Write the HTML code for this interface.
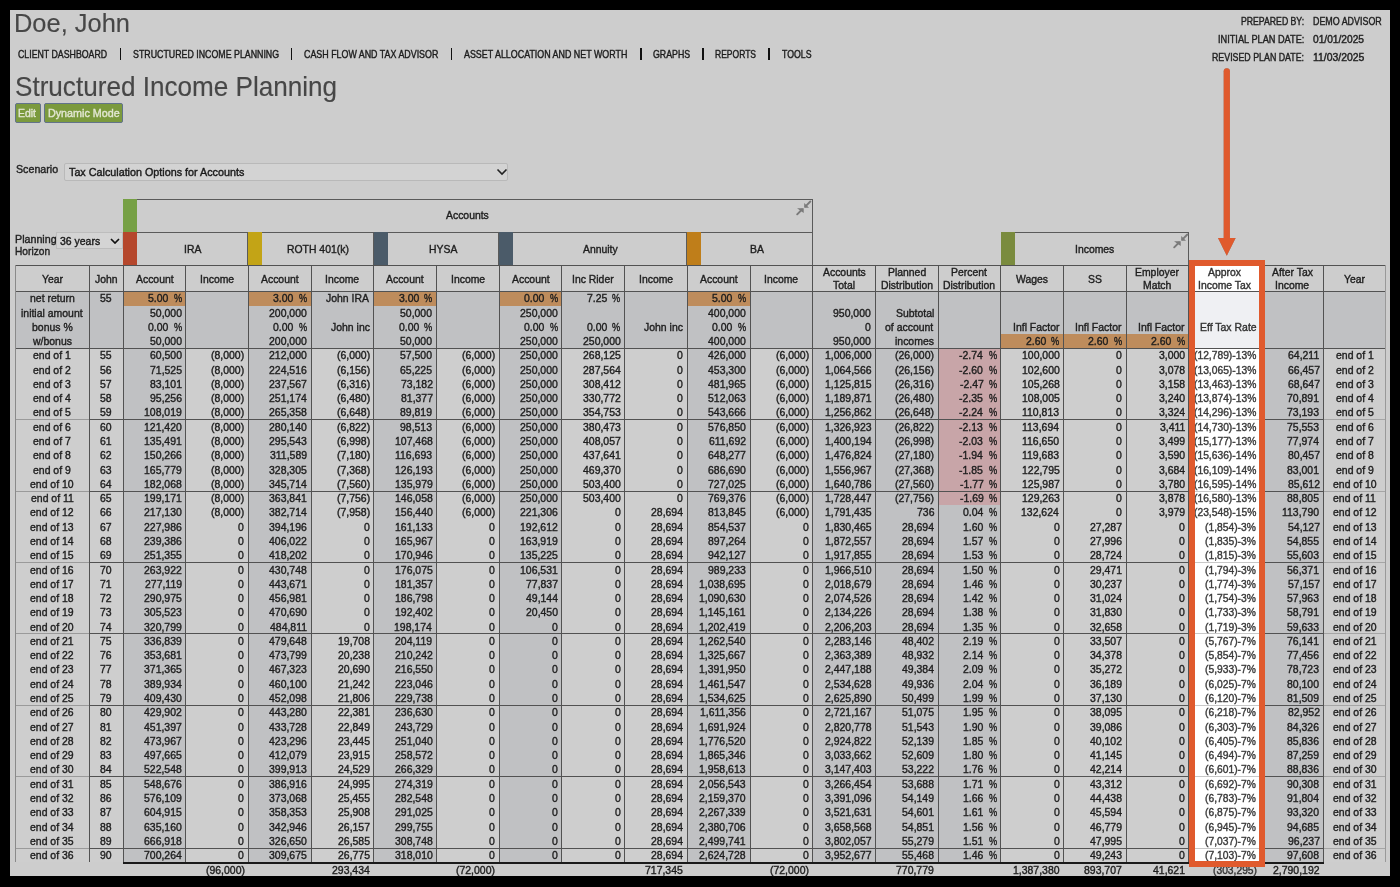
<!DOCTYPE html>
<html><head><meta charset="utf-8"><title>Structured Income Planning</title>
<style>
html,body{margin:0;padding:0;}
body{width:1400px;height:887px;background:#000;position:relative;overflow:hidden;font-family:"Liberation Sans", sans-serif;}
body div, body span, body svg{position:absolute;}
span{white-space:pre;}
</style></head><body>
<div style="left:10px;top:10px;width:1380px;height:866px;background:#cdcdcd;"></div>
<span style="left:14.47px;top:10.94px;font-size:25.94px;line-height:25.94px;color:#474747;transform:scaleX(0.9805);transform-origin:0 0;-webkit-text-stroke:0.15px currentColor;">Doe, John</span>
<span style="left:14.53px;top:74.28px;font-size:26.96px;line-height:26.96px;color:#474747;transform:scaleX(0.9685);transform-origin:0 0;-webkit-text-stroke:0.15px currentColor;">Structured Income Planning</span>
<span style="left:18.16px;top:50.39px;font-size:10.29px;line-height:10.29px;color:#1c1c1c;transform:scaleX(0.8544);transform-origin:0 0;-webkit-text-stroke:0.4px currentColor;">CLIENT DASHBOARD</span>
<span style="left:132.8px;top:50.39px;font-size:10.29px;line-height:10.29px;color:#1c1c1c;transform:scaleX(0.8583);transform-origin:0 0;-webkit-text-stroke:0.4px currentColor;">STRUCTURED INCOME PLANNING</span>
<span style="left:303.96px;top:50.39px;font-size:10.29px;line-height:10.29px;color:#1c1c1c;transform:scaleX(0.8636);transform-origin:0 0;-webkit-text-stroke:0.4px currentColor;">CASH FLOW AND TAX ADVISOR</span>
<span style="left:464.3px;top:50.39px;font-size:10.29px;line-height:10.29px;color:#1c1c1c;transform:scaleX(0.8648);transform-origin:0 0;-webkit-text-stroke:0.4px currentColor;">ASSET ALLOCATION AND NET WORTH</span>
<span style="left:653.26px;top:50.39px;font-size:10.29px;line-height:10.29px;color:#1c1c1c;transform:scaleX(0.8552);transform-origin:0 0;-webkit-text-stroke:0.4px currentColor;">GRAPHS</span>
<span style="left:715.02px;top:50.39px;font-size:10.29px;line-height:10.29px;color:#1c1c1c;transform:scaleX(0.8289);transform-origin:0 0;-webkit-text-stroke:0.4px currentColor;">REPORTS</span>
<span style="left:781.83px;top:50.39px;font-size:10.29px;line-height:10.29px;color:#1c1c1c;transform:scaleX(0.8498);transform-origin:0 0;-webkit-text-stroke:0.4px currentColor;">TOOLS</span>
<div style="left:119.9px;top:47.6px;width:1.6px;height:12.2px;background:#111;"></div>
<div style="left:290.8px;top:47.6px;width:1.6px;height:12.2px;background:#111;"></div>
<div style="left:450.6px;top:47.6px;width:1.6px;height:12.2px;background:#111;"></div>
<div style="left:640.1px;top:47.6px;width:1.6px;height:12.2px;background:#111;"></div>
<div style="left:702.1px;top:47.6px;width:1.6px;height:12.2px;background:#111;"></div>
<div style="left:768.3px;top:47.6px;width:1.6px;height:12.2px;background:#111;"></div>
<span style="left:1241.1px;top:16.84px;font-size:10px;line-height:10px;color:#222;transform:scaleX(0.8688);transform-origin:0 0;-webkit-text-stroke:0.4px currentColor;">PREPARED BY:</span>
<span style="left:1312.59px;top:16.84px;font-size:10px;line-height:10px;color:#222;transform:scaleX(0.8901);transform-origin:0 0;-webkit-text-stroke:0.4px currentColor;">DEMO ADVISOR</span>
<span style="left:1217.87px;top:34.73px;font-size:10px;line-height:10px;color:#222;transform:scaleX(0.9197);transform-origin:0 0;-webkit-text-stroke:0.4px currentColor;">INITIAL PLAN DATE:</span>
<span style="left:1312.89px;top:34.73px;font-size:10px;line-height:10px;color:#222;transform:scaleX(1.0193);transform-origin:0 0;-webkit-text-stroke:0.4px currentColor;">01/01/2025</span>
<span style="left:1212.19px;top:53.03px;font-size:10px;line-height:10px;color:#222;transform:scaleX(0.8825);transform-origin:0 0;-webkit-text-stroke:0.4px currentColor;">REVISED PLAN DATE:</span>
<span style="left:1312.52px;top:53.03px;font-size:10px;line-height:10px;color:#222;transform:scaleX(1.0426);transform-origin:0 0;-webkit-text-stroke:0.4px currentColor;">11/03/2025</span>
<div style="left:14.7px;top:102.5px;width:26.3px;height:20.8px;background:#7b9a3d;border:1px solid #62738a;border-radius:2px;box-sizing:border-box"></div>
<span style="left:18.16px;top:107.75px;font-size:11.16px;line-height:11.16px;color:#e2e6d2;transform:scaleX(0.9372);transform-origin:0 0;-webkit-text-stroke:0.4px currentColor;">Edit</span>
<div style="left:44.3px;top:102.5px;width:78.8px;height:20.8px;background:#7b9a3d;border:1px solid #62738a;border-radius:2px;box-sizing:border-box"></div>
<span style="left:48.14px;top:107.75px;font-size:11.16px;line-height:11.16px;color:#e2e6d2;transform:scaleX(0.9625);transform-origin:0 0;-webkit-text-stroke:0.4px currentColor;">Dynamic Mode</span>
<span style="left:16.02px;top:164.45px;font-size:11.16px;line-height:11.16px;color:#222;transform:scaleX(0.9565);transform-origin:0 0;-webkit-text-stroke:0.4px currentColor;">Scenario</span>
<div style="left:64.2px;top:163.2px;width:444.2px;height:17.5px;background:#d3d3d3;border:1px solid #b9b9b9;border-radius:2px;box-sizing:border-box"></div>
<span style="left:68.88px;top:167.18px;font-size:11.01px;line-height:11.01px;color:#1a1a1a;transform:scaleX(0.9784);transform-origin:0 0;-webkit-text-stroke:0.4px currentColor;">Tax Calculation Options for Accounts</span>
<svg style="left:496px;top:168px;width:12px;height:8px" viewBox="0 0 12 8"><path d="M1.5 1.5 L6 6 L10.5 1.5" fill="none" stroke="#222" stroke-width="1.6"/></svg>
<span style="left:14.54px;top:233.91px;font-size:11.45px;line-height:11.45px;color:#222;transform:scaleX(0.9352);transform-origin:0 0;-webkit-text-stroke:0.4px currentColor;">Planning</span>
<span style="left:14.59px;top:246.11px;font-size:11.45px;line-height:11.45px;color:#222;transform:scaleX(0.8893);transform-origin:0 0;-webkit-text-stroke:0.4px currentColor;">Horizon</span>
<div style="left:56.2px;top:232px;width:66.8px;height:17.4px;background:#d4d4d4;border:1px solid #bdbdbd;box-sizing:border-box"></div>
<span style="left:60.48px;top:235.93px;font-size:11.3px;line-height:11.3px;color:#1a1a1a;transform:scaleX(0.9270);transform-origin:0 0;-webkit-text-stroke:0.4px currentColor;">36 years</span>
<svg style="left:110px;top:238px;width:10px;height:6px" viewBox="0 0 10 6"><path d="M1 1 L5 5 L9 1" fill="none" stroke="#111" stroke-width="1.7"/></svg>
<div style="left:123px;top:198.5px;width:689.5px;height:33.8px;background:#cdcdcd;border:1px solid #5a5a5a;border-bottom:none;box-sizing:border-box"></div>
<div style="left:123px;top:198.5px;width:13.8px;height:33.8px;background:#76a045;"></div>
<span style="left:446.45px;top:210.12px;font-size:11.2px;line-height:11.2px;color:#1e1e1e;transform:scaleX(0.9300);transform-origin:0 0;-webkit-text-stroke:0.4px currentColor;">Accounts</span>
<div style="left:123px;top:232.3px;width:125.4px;height:33.1px;background:#cdcdcd;border:1px solid #5a5a5a;border-bottom:none;box-sizing:border-box"></div>
<div style="left:123px;top:232.3px;width:13.9px;height:33.1px;background:#b5472c;"></div>
<span style="left:183.51px;top:244.32px;font-size:11.2px;line-height:11.2px;color:#1e1e1e;transform:scaleX(0.9300);transform-origin:0 0;-webkit-text-stroke:0.4px currentColor;">IRA</span>
<div style="left:248.4px;top:232.3px;width:125.4px;height:33.1px;background:#cdcdcd;border:1px solid #5a5a5a;border-bottom:none;box-sizing:border-box"></div>
<div style="left:248.4px;top:232.3px;width:13.9px;height:33.1px;background:#c3a416;"></div>
<span style="left:287.01px;top:244.32px;font-size:11.2px;line-height:11.2px;color:#1e1e1e;transform:scaleX(0.9300);transform-origin:0 0;-webkit-text-stroke:0.4px currentColor;">ROTH 401(k)</span>
<div style="left:373.8px;top:232.3px;width:125.4px;height:33.1px;background:#cdcdcd;border:1px solid #5a5a5a;border-bottom:none;box-sizing:border-box"></div>
<div style="left:373.8px;top:232.3px;width:13.9px;height:33.1px;background:#4b5b69;"></div>
<span style="left:428.87px;top:244.32px;font-size:11.2px;line-height:11.2px;color:#1e1e1e;transform:scaleX(0.9300);transform-origin:0 0;-webkit-text-stroke:0.4px currentColor;">HYSA</span>
<div style="left:499.2px;top:232.3px;width:188.1px;height:33.1px;background:#cdcdcd;border:1px solid #5a5a5a;border-bottom:none;box-sizing:border-box"></div>
<div style="left:499.2px;top:232.3px;width:13.9px;height:33.1px;background:#4b5b69;"></div>
<span style="left:582.83px;top:244.32px;font-size:11.2px;line-height:11.2px;color:#1e1e1e;transform:scaleX(0.9300);transform-origin:0 0;-webkit-text-stroke:0.4px currentColor;">Annuity</span>
<div style="left:687.3px;top:232.3px;width:125.4px;height:33.1px;background:#cdcdcd;border:1px solid #5a5a5a;border-bottom:none;box-sizing:border-box"></div>
<div style="left:687.3px;top:232.3px;width:13.9px;height:33.1px;background:#bf7e1a;"></div>
<span style="left:749.61px;top:244.32px;font-size:11.2px;line-height:11.2px;color:#1e1e1e;transform:scaleX(0.9300);transform-origin:0 0;-webkit-text-stroke:0.4px currentColor;">BA</span>
<div style="left:1000.8px;top:232.3px;width:188.1px;height:33.1px;background:#cdcdcd;border:1px solid #5a5a5a;border-bottom:none;box-sizing:border-box"></div>
<div style="left:1000.8px;top:232.3px;width:13.9px;height:33.1px;background:#7a8b3e;"></div>
<span style="left:1074.88px;top:243.72px;font-size:11.2px;line-height:11.2px;color:#1e1e1e;transform:scaleX(0.9300);transform-origin:0 0;-webkit-text-stroke:0.4px currentColor;">Incomes</span>
<svg style="left:796px;top:200px;width:16px;height:16px" viewBox="0 0 16 16"><path d="M14.3 1.5 L9.5 6.3 M1.2 14.3 L6 9.5" stroke="#7a7a7a" stroke-width="1.9" stroke-linecap="round" fill="none"/><path d="M8.2 3 L13 7.7 L8.2 7.7 Z M1 8.2 L7.7 8.2 L7.7 13 Z" fill="#7a7a7a"/></svg>
<svg style="left:1172.5px;top:233px;width:16px;height:16px" viewBox="0 0 16 16"><path d="M14.3 1.5 L9.5 6.3 M1.2 14.3 L6 9.5" stroke="#7a7a7a" stroke-width="1.9" stroke-linecap="round" fill="none"/><path d="M8.2 3 L13 7.7 L8.2 7.7 Z M1 8.2 L7.7 8.2 L7.7 13 Z" fill="#7a7a7a"/></svg>
<div style="left:15.5px;top:265.4px;width:73.5px;height:26px;background:#cdcdcd;"></div>
<div style="left:15.5px;top:291.4px;width:73.5px;height:56.9px;background:#c0c1c3;"></div>
<div style="left:15.5px;top:348.3px;width:73.5px;height:514px;background:#cecece;"></div>
<div style="left:89px;top:265.4px;width:34px;height:26px;background:#cdcdcd;"></div>
<div style="left:89px;top:291.4px;width:34px;height:56.9px;background:#c0c1c3;"></div>
<div style="left:89px;top:348.3px;width:34px;height:514px;background:#cecece;"></div>
<div style="left:123px;top:265.4px;width:62.7px;height:26px;background:#cdcdcd;"></div>
<div style="left:123px;top:291.4px;width:62.7px;height:56.9px;background:#c0c1c3;"></div>
<div style="left:123px;top:348.3px;width:62.7px;height:514px;background:#c0c1c3;"></div>
<div style="left:185.7px;top:265.4px;width:62.7px;height:26px;background:#cdcdcd;"></div>
<div style="left:185.7px;top:291.4px;width:62.7px;height:56.9px;background:#c0c1c3;"></div>
<div style="left:185.7px;top:348.3px;width:62.7px;height:514px;background:#cecece;"></div>
<div style="left:248.4px;top:265.4px;width:62.7px;height:26px;background:#cdcdcd;"></div>
<div style="left:248.4px;top:291.4px;width:62.7px;height:56.9px;background:#c0c1c3;"></div>
<div style="left:248.4px;top:348.3px;width:62.7px;height:514px;background:#c0c1c3;"></div>
<div style="left:311.1px;top:265.4px;width:62.7px;height:26px;background:#cdcdcd;"></div>
<div style="left:311.1px;top:291.4px;width:62.7px;height:56.9px;background:#c0c1c3;"></div>
<div style="left:311.1px;top:348.3px;width:62.7px;height:514px;background:#cecece;"></div>
<div style="left:373.8px;top:265.4px;width:62.7px;height:26px;background:#cdcdcd;"></div>
<div style="left:373.8px;top:291.4px;width:62.7px;height:56.9px;background:#c0c1c3;"></div>
<div style="left:373.8px;top:348.3px;width:62.7px;height:514px;background:#c0c1c3;"></div>
<div style="left:436.5px;top:265.4px;width:62.7px;height:26px;background:#cdcdcd;"></div>
<div style="left:436.5px;top:291.4px;width:62.7px;height:56.9px;background:#c0c1c3;"></div>
<div style="left:436.5px;top:348.3px;width:62.7px;height:514px;background:#cecece;"></div>
<div style="left:499.2px;top:265.4px;width:62.7px;height:26px;background:#cdcdcd;"></div>
<div style="left:499.2px;top:291.4px;width:62.7px;height:56.9px;background:#c0c1c3;"></div>
<div style="left:499.2px;top:348.3px;width:62.7px;height:514px;background:#c0c1c3;"></div>
<div style="left:561.9px;top:265.4px;width:62.7px;height:26px;background:#cdcdcd;"></div>
<div style="left:561.9px;top:291.4px;width:62.7px;height:56.9px;background:#c0c1c3;"></div>
<div style="left:561.9px;top:348.3px;width:62.7px;height:514px;background:#cecece;"></div>
<div style="left:624.6px;top:265.4px;width:62.7px;height:26px;background:#cdcdcd;"></div>
<div style="left:624.6px;top:291.4px;width:62.7px;height:56.9px;background:#c0c1c3;"></div>
<div style="left:624.6px;top:348.3px;width:62.7px;height:514px;background:#cecece;"></div>
<div style="left:687.3px;top:265.4px;width:62.7px;height:26px;background:#cdcdcd;"></div>
<div style="left:687.3px;top:291.4px;width:62.7px;height:56.9px;background:#c0c1c3;"></div>
<div style="left:687.3px;top:348.3px;width:62.7px;height:514px;background:#c0c1c3;"></div>
<div style="left:750px;top:265.4px;width:62.7px;height:26px;background:#cdcdcd;"></div>
<div style="left:750px;top:291.4px;width:62.7px;height:56.9px;background:#c0c1c3;"></div>
<div style="left:750px;top:348.3px;width:62.7px;height:514px;background:#cecece;"></div>
<div style="left:812.7px;top:265.4px;width:62.7px;height:26px;background:#cdcdcd;"></div>
<div style="left:812.7px;top:291.4px;width:62.7px;height:56.9px;background:#c0c1c3;"></div>
<div style="left:812.7px;top:348.3px;width:62.7px;height:514px;background:#c0c1c3;"></div>
<div style="left:875.4px;top:265.4px;width:62.7px;height:26px;background:#cdcdcd;"></div>
<div style="left:875.4px;top:291.4px;width:62.7px;height:56.9px;background:#c0c1c3;"></div>
<div style="left:875.4px;top:348.3px;width:62.7px;height:514px;background:#c0c1c3;"></div>
<div style="left:938.1px;top:265.4px;width:62.7px;height:26px;background:#cdcdcd;"></div>
<div style="left:938.1px;top:291.4px;width:62.7px;height:56.9px;background:#c0c1c3;"></div>
<div style="left:938.1px;top:348.3px;width:62.7px;height:157.06px;background:#c8a5a8;"></div>
<div style="left:938.1px;top:505.36px;width:62.7px;height:356.94px;background:#c0c1c3;"></div>
<div style="left:1000.8px;top:265.4px;width:62.7px;height:26px;background:#cdcdcd;"></div>
<div style="left:1000.8px;top:291.4px;width:62.7px;height:56.9px;background:#c0c1c3;"></div>
<div style="left:1000.8px;top:348.3px;width:62.7px;height:514px;background:#cecece;"></div>
<div style="left:1063.5px;top:265.4px;width:62.7px;height:26px;background:#cdcdcd;"></div>
<div style="left:1063.5px;top:291.4px;width:62.7px;height:56.9px;background:#c0c1c3;"></div>
<div style="left:1063.5px;top:348.3px;width:62.7px;height:514px;background:#cecece;"></div>
<div style="left:1126.2px;top:265.4px;width:62.7px;height:26px;background:#cdcdcd;"></div>
<div style="left:1126.2px;top:291.4px;width:62.7px;height:56.9px;background:#c0c1c3;"></div>
<div style="left:1126.2px;top:348.3px;width:62.7px;height:514px;background:#cecece;"></div>
<div style="left:1188.9px;top:265.4px;width:72.1px;height:26px;background:#ffffff;"></div>
<div style="left:1188.9px;top:291.4px;width:72.1px;height:56.9px;background:#eff0f3;"></div>
<div style="left:1188.9px;top:348.3px;width:72.1px;height:514px;background:#ffffff;"></div>
<div style="left:1261px;top:265.4px;width:62.5px;height:26px;background:#cdcdcd;"></div>
<div style="left:1261px;top:291.4px;width:62.5px;height:56.9px;background:#c0c1c3;"></div>
<div style="left:1261px;top:348.3px;width:62.5px;height:514px;background:#c0c1c3;"></div>
<div style="left:1323.5px;top:265.4px;width:62.2px;height:26px;background:#cdcdcd;"></div>
<div style="left:1323.5px;top:291.4px;width:62.2px;height:56.9px;background:#c0c1c3;"></div>
<div style="left:1323.5px;top:348.3px;width:62.2px;height:514px;background:#cecece;"></div>
<div style="left:123px;top:292px;width:62.7px;height:13.62px;background:#be8c5c;"></div>
<div style="left:248.4px;top:292px;width:62.7px;height:13.62px;background:#be8c5c;"></div>
<div style="left:373.8px;top:292px;width:62.7px;height:13.62px;background:#be8c5c;"></div>
<div style="left:499.2px;top:292px;width:62.7px;height:13.62px;background:#be8c5c;"></div>
<div style="left:687.3px;top:292px;width:62.7px;height:13.62px;background:#be8c5c;"></div>
<div style="left:1000.8px;top:334.07px;width:62.7px;height:14.23px;background:#be8c5c;"></div>
<div style="left:1063.5px;top:334.07px;width:62.7px;height:14.23px;background:#be8c5c;"></div>
<div style="left:1126.2px;top:334.07px;width:62.7px;height:14.23px;background:#be8c5c;"></div>
<div style="left:15.5px;top:264.9px;width:1370.2px;height:1px;background:#525252;"></div>
<div style="left:15.5px;top:290.9px;width:1370.2px;height:1px;background:#525252;"></div>
<div style="left:15.5px;top:347.8px;width:1370.2px;height:1px;background:#525252;"></div>
<div style="left:15.5px;top:419.19px;width:73.5px;height:1px;background:#9a9a9a;"></div>
<div style="left:89px;top:419.19px;width:1099.9px;height:1px;background:#525252;"></div>
<div style="left:1188.9px;top:419.19px;width:72.1px;height:1px;background:#c8c8c8;"></div>
<div style="left:1261px;top:419.19px;width:62.5px;height:1px;background:#525252;"></div>
<div style="left:1323.5px;top:419.19px;width:62.2px;height:1px;background:#a5a5a5;"></div>
<div style="left:15.5px;top:490.58px;width:73.5px;height:1px;background:#9a9a9a;"></div>
<div style="left:89px;top:490.58px;width:1099.9px;height:1px;background:#525252;"></div>
<div style="left:1188.9px;top:490.58px;width:72.1px;height:1px;background:#c8c8c8;"></div>
<div style="left:1261px;top:490.58px;width:62.5px;height:1px;background:#525252;"></div>
<div style="left:1323.5px;top:490.58px;width:62.2px;height:1px;background:#a5a5a5;"></div>
<div style="left:15.5px;top:561.97px;width:73.5px;height:1px;background:#9a9a9a;"></div>
<div style="left:89px;top:561.97px;width:1099.9px;height:1px;background:#525252;"></div>
<div style="left:1188.9px;top:561.97px;width:72.1px;height:1px;background:#c8c8c8;"></div>
<div style="left:1261px;top:561.97px;width:62.5px;height:1px;background:#525252;"></div>
<div style="left:1323.5px;top:561.97px;width:62.2px;height:1px;background:#a5a5a5;"></div>
<div style="left:15.5px;top:633.36px;width:73.5px;height:1px;background:#9a9a9a;"></div>
<div style="left:89px;top:633.36px;width:1099.9px;height:1px;background:#525252;"></div>
<div style="left:1188.9px;top:633.36px;width:72.1px;height:1px;background:#c8c8c8;"></div>
<div style="left:1261px;top:633.36px;width:62.5px;height:1px;background:#525252;"></div>
<div style="left:1323.5px;top:633.36px;width:62.2px;height:1px;background:#a5a5a5;"></div>
<div style="left:15.5px;top:704.74px;width:73.5px;height:1px;background:#9a9a9a;"></div>
<div style="left:89px;top:704.74px;width:1099.9px;height:1px;background:#525252;"></div>
<div style="left:1188.9px;top:704.74px;width:72.1px;height:1px;background:#c8c8c8;"></div>
<div style="left:1261px;top:704.74px;width:62.5px;height:1px;background:#525252;"></div>
<div style="left:1323.5px;top:704.74px;width:62.2px;height:1px;background:#a5a5a5;"></div>
<div style="left:15.5px;top:776.13px;width:73.5px;height:1px;background:#9a9a9a;"></div>
<div style="left:89px;top:776.13px;width:1099.9px;height:1px;background:#525252;"></div>
<div style="left:1188.9px;top:776.13px;width:72.1px;height:1px;background:#c8c8c8;"></div>
<div style="left:1261px;top:776.13px;width:62.5px;height:1px;background:#525252;"></div>
<div style="left:1323.5px;top:776.13px;width:62.2px;height:1px;background:#a5a5a5;"></div>
<div style="left:15.5px;top:847.52px;width:73.5px;height:1px;background:#9a9a9a;"></div>
<div style="left:89px;top:847.52px;width:1099.9px;height:1px;background:#525252;"></div>
<div style="left:1188.9px;top:847.52px;width:72.1px;height:1px;background:#c8c8c8;"></div>
<div style="left:1261px;top:847.52px;width:62.5px;height:1px;background:#525252;"></div>
<div style="left:1323.5px;top:847.52px;width:62.2px;height:1px;background:#a5a5a5;"></div>
<div style="left:14.9px;top:265.4px;width:1.2px;height:596.9px;background:#8a8a8a;"></div>
<div style="left:88.5px;top:265.4px;width:1px;height:596.9px;background:#525252;"></div>
<div style="left:122.5px;top:265.4px;width:1px;height:596.9px;background:#525252;"></div>
<div style="left:185.2px;top:265.4px;width:1px;height:596.9px;background:#525252;"></div>
<div style="left:247.9px;top:265.4px;width:1px;height:596.9px;background:#525252;"></div>
<div style="left:310.6px;top:265.4px;width:1px;height:596.9px;background:#525252;"></div>
<div style="left:373.3px;top:265.4px;width:1px;height:596.9px;background:#525252;"></div>
<div style="left:436px;top:265.4px;width:1px;height:596.9px;background:#525252;"></div>
<div style="left:498.7px;top:265.4px;width:1px;height:596.9px;background:#525252;"></div>
<div style="left:561.4px;top:265.4px;width:1px;height:596.9px;background:#525252;"></div>
<div style="left:624.1px;top:265.4px;width:1px;height:596.9px;background:#525252;"></div>
<div style="left:686.8px;top:265.4px;width:1px;height:596.9px;background:#525252;"></div>
<div style="left:749.5px;top:265.4px;width:1px;height:596.9px;background:#525252;"></div>
<div style="left:812.2px;top:265.4px;width:1px;height:596.9px;background:#525252;"></div>
<div style="left:874.9px;top:265.4px;width:1px;height:596.9px;background:#525252;"></div>
<div style="left:937.6px;top:265.4px;width:1px;height:596.9px;background:#525252;"></div>
<div style="left:1000.3px;top:265.4px;width:1px;height:596.9px;background:#525252;"></div>
<div style="left:1063px;top:265.4px;width:1px;height:596.9px;background:#525252;"></div>
<div style="left:1125.7px;top:265.4px;width:1px;height:596.9px;background:#525252;"></div>
<div style="left:1188.4px;top:265.4px;width:1px;height:596.9px;background:#525252;"></div>
<div style="left:1260.5px;top:265.4px;width:1px;height:596.9px;background:#525252;"></div>
<div style="left:1323px;top:265.4px;width:1px;height:596.9px;background:#525252;"></div>
<div style="left:1385.1px;top:265.4px;width:1.2px;height:596.9px;background:#999999;"></div>
<div style="left:123px;top:861.8px;width:1200.5px;height:1.8px;background:#1a1a1a;"></div>
<span style="left:41.68px;top:273.52px;font-size:11.2px;line-height:11.2px;color:#1e1e1e;transform:scaleX(0.9300);transform-origin:0 0;-webkit-text-stroke:0.4px currentColor;">Year</span>
<span style="left:94.99px;top:273.52px;font-size:11.2px;line-height:11.2px;color:#1e1e1e;transform:scaleX(0.9300);transform-origin:0 0;-webkit-text-stroke:0.4px currentColor;">John</span>
<span style="left:135.58px;top:273.52px;font-size:11.2px;line-height:11.2px;color:#1e1e1e;transform:scaleX(0.9300);transform-origin:0 0;-webkit-text-stroke:0.4px currentColor;">Account</span>
<span style="left:199.73px;top:273.52px;font-size:11.2px;line-height:11.2px;color:#1e1e1e;transform:scaleX(0.9300);transform-origin:0 0;-webkit-text-stroke:0.4px currentColor;">Income</span>
<span style="left:260.98px;top:273.52px;font-size:11.2px;line-height:11.2px;color:#1e1e1e;transform:scaleX(0.9300);transform-origin:0 0;-webkit-text-stroke:0.4px currentColor;">Account</span>
<span style="left:325.13px;top:273.52px;font-size:11.2px;line-height:11.2px;color:#1e1e1e;transform:scaleX(0.9300);transform-origin:0 0;-webkit-text-stroke:0.4px currentColor;">Income</span>
<span style="left:386.38px;top:273.52px;font-size:11.2px;line-height:11.2px;color:#1e1e1e;transform:scaleX(0.9300);transform-origin:0 0;-webkit-text-stroke:0.4px currentColor;">Account</span>
<span style="left:450.53px;top:273.52px;font-size:11.2px;line-height:11.2px;color:#1e1e1e;transform:scaleX(0.9300);transform-origin:0 0;-webkit-text-stroke:0.4px currentColor;">Income</span>
<span style="left:511.78px;top:273.52px;font-size:11.2px;line-height:11.2px;color:#1e1e1e;transform:scaleX(0.9300);transform-origin:0 0;-webkit-text-stroke:0.4px currentColor;">Account</span>
<span style="left:572.03px;top:273.52px;font-size:11.2px;line-height:11.2px;color:#1e1e1e;transform:scaleX(0.9300);transform-origin:0 0;-webkit-text-stroke:0.4px currentColor;">Inc Rider</span>
<span style="left:638.63px;top:273.52px;font-size:11.2px;line-height:11.2px;color:#1e1e1e;transform:scaleX(0.9300);transform-origin:0 0;-webkit-text-stroke:0.4px currentColor;">Income</span>
<span style="left:699.88px;top:273.52px;font-size:11.2px;line-height:11.2px;color:#1e1e1e;transform:scaleX(0.9300);transform-origin:0 0;-webkit-text-stroke:0.4px currentColor;">Account</span>
<span style="left:764.03px;top:273.52px;font-size:11.2px;line-height:11.2px;color:#1e1e1e;transform:scaleX(0.9300);transform-origin:0 0;-webkit-text-stroke:0.4px currentColor;">Income</span>
<span style="left:822.8px;top:267.42px;font-size:11.2px;line-height:11.2px;color:#1e1e1e;transform:scaleX(0.9300);transform-origin:0 0;-webkit-text-stroke:0.4px currentColor;">Accounts</span>
<span style="left:833.3px;top:279.92px;font-size:11.2px;line-height:11.2px;color:#1e1e1e;transform:scaleX(0.9300);transform-origin:0 0;-webkit-text-stroke:0.4px currentColor;">Total</span>
<span style="left:887.56px;top:267.42px;font-size:11.2px;line-height:11.2px;color:#1e1e1e;transform:scaleX(0.9300);transform-origin:0 0;-webkit-text-stroke:0.4px currentColor;">Planned</span>
<span style="left:880.63px;top:279.92px;font-size:11.2px;line-height:11.2px;color:#1e1e1e;transform:scaleX(0.9300);transform-origin:0 0;-webkit-text-stroke:0.4px currentColor;">Distribution</span>
<span style="left:951.12px;top:267.42px;font-size:11.2px;line-height:11.2px;color:#1e1e1e;transform:scaleX(0.9300);transform-origin:0 0;-webkit-text-stroke:0.4px currentColor;">Percent</span>
<span style="left:943.33px;top:279.92px;font-size:11.2px;line-height:11.2px;color:#1e1e1e;transform:scaleX(0.9300);transform-origin:0 0;-webkit-text-stroke:0.4px currentColor;">Distribution</span>
<span style="left:1016.29px;top:273.52px;font-size:11.2px;line-height:11.2px;color:#1e1e1e;transform:scaleX(0.9300);transform-origin:0 0;-webkit-text-stroke:0.4px currentColor;">Wages</span>
<span style="left:1087.92px;top:273.52px;font-size:11.2px;line-height:11.2px;color:#1e1e1e;transform:scaleX(0.9300);transform-origin:0 0;-webkit-text-stroke:0.4px currentColor;">SS</span>
<span style="left:1135.23px;top:267.42px;font-size:11.2px;line-height:11.2px;color:#1e1e1e;transform:scaleX(0.9300);transform-origin:0 0;-webkit-text-stroke:0.4px currentColor;">Employer</span>
<span style="left:1143.31px;top:279.92px;font-size:11.2px;line-height:11.2px;color:#1e1e1e;transform:scaleX(0.9300);transform-origin:0 0;-webkit-text-stroke:0.4px currentColor;">Match</span>
<span style="left:1208.49px;top:267.42px;font-size:11.2px;line-height:11.2px;color:#333;transform:scaleX(0.9300);transform-origin:0 0;-webkit-text-stroke:0.4px currentColor;">Approx</span>
<span style="left:1198px;top:279.92px;font-size:11.2px;line-height:11.2px;color:#333;transform:scaleX(0.9300);transform-origin:0 0;-webkit-text-stroke:0.4px currentColor;">Income Tax</span>
<span style="left:1271.83px;top:267.42px;font-size:11.2px;line-height:11.2px;color:#1e1e1e;transform:scaleX(0.9300);transform-origin:0 0;-webkit-text-stroke:0.4px currentColor;">After Tax</span>
<span style="left:1274.93px;top:279.92px;font-size:11.2px;line-height:11.2px;color:#1e1e1e;transform:scaleX(0.9300);transform-origin:0 0;-webkit-text-stroke:0.4px currentColor;">Income</span>
<span style="left:1344.03px;top:273.52px;font-size:11.2px;line-height:11.2px;color:#1e1e1e;transform:scaleX(0.9300);transform-origin:0 0;-webkit-text-stroke:0.4px currentColor;">Year</span>
<span style="left:29.86px;top:293.43px;font-size:11.3px;line-height:11.3px;color:#1e1e1e;transform:scaleX(0.9260);transform-origin:0 0;-webkit-text-stroke:0.4px currentColor;">net return</span>
<span style="left:21.12px;top:307.66px;font-size:11.3px;line-height:11.3px;color:#1e1e1e;transform:scaleX(0.9260);transform-origin:0 0;-webkit-text-stroke:0.4px currentColor;">initial amount</span>
<span style="left:31.71px;top:321.88px;font-size:11.3px;line-height:11.3px;color:#1e1e1e;transform:scaleX(0.9260);transform-origin:0 0;-webkit-text-stroke:0.4px currentColor;">bonus %</span>
<span style="left:32.94px;top:336.11px;font-size:11.3px;line-height:11.3px;color:#1e1e1e;transform:scaleX(0.9260);transform-origin:0 0;-webkit-text-stroke:0.4px currentColor;">w/bonus</span>
<span style="left:100.19px;top:293.43px;font-size:11.3px;line-height:11.3px;color:#1e1e1e;transform:scaleX(0.9260);transform-origin:0 0;-webkit-text-stroke:0.4px currentColor;">55</span>
<span style="left:173.53px;top:293.43px;font-size:11.3px;line-height:11.3px;color:#1e1e1e;transform:scaleX(0.8149);transform-origin:0 0;-webkit-text-stroke:0.4px currentColor;">%</span>
<span style="left:147.81px;top:293.43px;font-size:11.3px;line-height:11.3px;color:#1e1e1e;transform:scaleX(0.9260);transform-origin:0 0;-webkit-text-stroke:0.4px currentColor;">5.00</span>
<span style="left:149.55px;top:307.66px;font-size:11.3px;line-height:11.3px;color:#1e1e1e;transform:scaleX(0.9260);transform-origin:0 0;-webkit-text-stroke:0.4px currentColor;">50,000</span>
<span style="left:173.53px;top:321.88px;font-size:11.3px;line-height:11.3px;color:#1e1e1e;transform:scaleX(0.8149);transform-origin:0 0;-webkit-text-stroke:0.4px currentColor;">%</span>
<span style="left:147.81px;top:321.88px;font-size:11.3px;line-height:11.3px;color:#1e1e1e;transform:scaleX(0.9260);transform-origin:0 0;-webkit-text-stroke:0.4px currentColor;">0.00</span>
<span style="left:149.55px;top:336.11px;font-size:11.3px;line-height:11.3px;color:#1e1e1e;transform:scaleX(0.9260);transform-origin:0 0;-webkit-text-stroke:0.4px currentColor;">50,000</span>
<span style="left:298.93px;top:293.43px;font-size:11.3px;line-height:11.3px;color:#1e1e1e;transform:scaleX(0.8149);transform-origin:0 0;-webkit-text-stroke:0.4px currentColor;">%</span>
<span style="left:273.21px;top:293.43px;font-size:11.3px;line-height:11.3px;color:#1e1e1e;transform:scaleX(0.9260);transform-origin:0 0;-webkit-text-stroke:0.4px currentColor;">3.00</span>
<span style="left:269.14px;top:307.66px;font-size:11.3px;line-height:11.3px;color:#1e1e1e;transform:scaleX(0.9260);transform-origin:0 0;-webkit-text-stroke:0.4px currentColor;">200,000</span>
<span style="left:298.93px;top:321.88px;font-size:11.3px;line-height:11.3px;color:#1e1e1e;transform:scaleX(0.8149);transform-origin:0 0;-webkit-text-stroke:0.4px currentColor;">%</span>
<span style="left:273.21px;top:321.88px;font-size:11.3px;line-height:11.3px;color:#1e1e1e;transform:scaleX(0.9260);transform-origin:0 0;-webkit-text-stroke:0.4px currentColor;">0.00</span>
<span style="left:269.14px;top:336.11px;font-size:11.3px;line-height:11.3px;color:#1e1e1e;transform:scaleX(0.9260);transform-origin:0 0;-webkit-text-stroke:0.4px currentColor;">200,000</span>
<span style="left:424.33px;top:293.43px;font-size:11.3px;line-height:11.3px;color:#1e1e1e;transform:scaleX(0.8149);transform-origin:0 0;-webkit-text-stroke:0.4px currentColor;">%</span>
<span style="left:398.61px;top:293.43px;font-size:11.3px;line-height:11.3px;color:#1e1e1e;transform:scaleX(0.9260);transform-origin:0 0;-webkit-text-stroke:0.4px currentColor;">3.00</span>
<span style="left:400.35px;top:307.66px;font-size:11.3px;line-height:11.3px;color:#1e1e1e;transform:scaleX(0.9260);transform-origin:0 0;-webkit-text-stroke:0.4px currentColor;">50,000</span>
<span style="left:424.33px;top:321.88px;font-size:11.3px;line-height:11.3px;color:#1e1e1e;transform:scaleX(0.8149);transform-origin:0 0;-webkit-text-stroke:0.4px currentColor;">%</span>
<span style="left:398.61px;top:321.88px;font-size:11.3px;line-height:11.3px;color:#1e1e1e;transform:scaleX(0.9260);transform-origin:0 0;-webkit-text-stroke:0.4px currentColor;">0.00</span>
<span style="left:400.35px;top:336.11px;font-size:11.3px;line-height:11.3px;color:#1e1e1e;transform:scaleX(0.9260);transform-origin:0 0;-webkit-text-stroke:0.4px currentColor;">50,000</span>
<span style="left:549.73px;top:293.43px;font-size:11.3px;line-height:11.3px;color:#1e1e1e;transform:scaleX(0.8149);transform-origin:0 0;-webkit-text-stroke:0.4px currentColor;">%</span>
<span style="left:524.01px;top:293.43px;font-size:11.3px;line-height:11.3px;color:#1e1e1e;transform:scaleX(0.9260);transform-origin:0 0;-webkit-text-stroke:0.4px currentColor;">0.00</span>
<span style="left:519.94px;top:307.66px;font-size:11.3px;line-height:11.3px;color:#1e1e1e;transform:scaleX(0.9260);transform-origin:0 0;-webkit-text-stroke:0.4px currentColor;">250,000</span>
<span style="left:549.73px;top:321.88px;font-size:11.3px;line-height:11.3px;color:#1e1e1e;transform:scaleX(0.8149);transform-origin:0 0;-webkit-text-stroke:0.4px currentColor;">%</span>
<span style="left:524.01px;top:321.88px;font-size:11.3px;line-height:11.3px;color:#1e1e1e;transform:scaleX(0.9260);transform-origin:0 0;-webkit-text-stroke:0.4px currentColor;">0.00</span>
<span style="left:519.94px;top:336.11px;font-size:11.3px;line-height:11.3px;color:#1e1e1e;transform:scaleX(0.9260);transform-origin:0 0;-webkit-text-stroke:0.4px currentColor;">250,000</span>
<span style="left:737.83px;top:293.43px;font-size:11.3px;line-height:11.3px;color:#1e1e1e;transform:scaleX(0.8149);transform-origin:0 0;-webkit-text-stroke:0.4px currentColor;">%</span>
<span style="left:712.11px;top:293.43px;font-size:11.3px;line-height:11.3px;color:#1e1e1e;transform:scaleX(0.9260);transform-origin:0 0;-webkit-text-stroke:0.4px currentColor;">5.00</span>
<span style="left:708.04px;top:307.66px;font-size:11.3px;line-height:11.3px;color:#1e1e1e;transform:scaleX(0.9260);transform-origin:0 0;-webkit-text-stroke:0.4px currentColor;">400,000</span>
<span style="left:737.83px;top:321.88px;font-size:11.3px;line-height:11.3px;color:#1e1e1e;transform:scaleX(0.8149);transform-origin:0 0;-webkit-text-stroke:0.4px currentColor;">%</span>
<span style="left:712.11px;top:321.88px;font-size:11.3px;line-height:11.3px;color:#1e1e1e;transform:scaleX(0.9260);transform-origin:0 0;-webkit-text-stroke:0.4px currentColor;">0.00</span>
<span style="left:708.04px;top:336.11px;font-size:11.3px;line-height:11.3px;color:#1e1e1e;transform:scaleX(0.9260);transform-origin:0 0;-webkit-text-stroke:0.4px currentColor;">400,000</span>
<span style="left:326.29px;top:293.43px;font-size:11.3px;line-height:11.3px;color:#1e1e1e;transform:scaleX(0.9260);transform-origin:0 0;-webkit-text-stroke:0.4px currentColor;">John IRA</span>
<span style="left:330.58px;top:321.88px;font-size:11.3px;line-height:11.3px;color:#1e1e1e;transform:scaleX(0.9260);transform-origin:0 0;-webkit-text-stroke:0.4px currentColor;">John inc</span>
<span style="left:612.43px;top:293.43px;font-size:11.3px;line-height:11.3px;color:#1e1e1e;transform:scaleX(0.8149);transform-origin:0 0;-webkit-text-stroke:0.4px currentColor;">%</span>
<span style="left:586.77px;top:293.43px;font-size:11.3px;line-height:11.3px;color:#1e1e1e;transform:scaleX(0.9260);transform-origin:0 0;-webkit-text-stroke:0.4px currentColor;">7.25</span>
<span style="left:612.43px;top:321.88px;font-size:11.3px;line-height:11.3px;color:#1e1e1e;transform:scaleX(0.8149);transform-origin:0 0;-webkit-text-stroke:0.4px currentColor;">%</span>
<span style="left:586.71px;top:321.88px;font-size:11.3px;line-height:11.3px;color:#1e1e1e;transform:scaleX(0.9260);transform-origin:0 0;-webkit-text-stroke:0.4px currentColor;">0.00</span>
<span style="left:582.64px;top:336.11px;font-size:11.3px;line-height:11.3px;color:#1e1e1e;transform:scaleX(0.9260);transform-origin:0 0;-webkit-text-stroke:0.4px currentColor;">250,000</span>
<span style="left:644.08px;top:321.88px;font-size:11.3px;line-height:11.3px;color:#1e1e1e;transform:scaleX(0.9260);transform-origin:0 0;-webkit-text-stroke:0.4px currentColor;">John inc</span>
<span style="left:833.44px;top:307.66px;font-size:11.3px;line-height:11.3px;color:#1e1e1e;transform:scaleX(0.9260);transform-origin:0 0;-webkit-text-stroke:0.4px currentColor;">950,000</span>
<span style="left:865.46px;top:321.88px;font-size:11.3px;line-height:11.3px;color:#1e1e1e;transform:scaleX(0.9260);transform-origin:0 0;-webkit-text-stroke:0.4px currentColor;">0</span>
<span style="left:833.44px;top:336.11px;font-size:11.3px;line-height:11.3px;color:#1e1e1e;transform:scaleX(0.9260);transform-origin:0 0;-webkit-text-stroke:0.4px currentColor;">950,000</span>
<span style="left:895.93px;top:307.66px;font-size:11.3px;line-height:11.3px;color:#1e1e1e;transform:scaleX(0.9260);transform-origin:0 0;-webkit-text-stroke:0.4px currentColor;">Subtotal</span>
<span style="left:885.41px;top:321.88px;font-size:11.3px;line-height:11.3px;color:#1e1e1e;transform:scaleX(0.9260);transform-origin:0 0;-webkit-text-stroke:0.4px currentColor;">of account</span>
<span style="left:894.99px;top:336.11px;font-size:11.3px;line-height:11.3px;color:#1e1e1e;transform:scaleX(0.9260);transform-origin:0 0;-webkit-text-stroke:0.4px currentColor;">incomes</span>
<span style="left:1012.65px;top:321.88px;font-size:11.3px;line-height:11.3px;color:#1e1e1e;transform:scaleX(0.9260);transform-origin:0 0;-webkit-text-stroke:0.4px currentColor;">Infl Factor</span>
<span style="left:1051.33px;top:336.11px;font-size:11.3px;line-height:11.3px;color:#1e1e1e;transform:scaleX(0.8149);transform-origin:0 0;-webkit-text-stroke:0.4px currentColor;">%</span>
<span style="left:1025.61px;top:336.11px;font-size:11.3px;line-height:11.3px;color:#1e1e1e;transform:scaleX(0.9260);transform-origin:0 0;-webkit-text-stroke:0.4px currentColor;">2.60</span>
<span style="left:1075.35px;top:321.88px;font-size:11.3px;line-height:11.3px;color:#1e1e1e;transform:scaleX(0.9260);transform-origin:0 0;-webkit-text-stroke:0.4px currentColor;">Infl Factor</span>
<span style="left:1114.03px;top:336.11px;font-size:11.3px;line-height:11.3px;color:#1e1e1e;transform:scaleX(0.8149);transform-origin:0 0;-webkit-text-stroke:0.4px currentColor;">%</span>
<span style="left:1088.31px;top:336.11px;font-size:11.3px;line-height:11.3px;color:#1e1e1e;transform:scaleX(0.9260);transform-origin:0 0;-webkit-text-stroke:0.4px currentColor;">2.60</span>
<span style="left:1138.05px;top:321.88px;font-size:11.3px;line-height:11.3px;color:#1e1e1e;transform:scaleX(0.9260);transform-origin:0 0;-webkit-text-stroke:0.4px currentColor;">Infl Factor</span>
<span style="left:1176.73px;top:336.11px;font-size:11.3px;line-height:11.3px;color:#1e1e1e;transform:scaleX(0.8149);transform-origin:0 0;-webkit-text-stroke:0.4px currentColor;">%</span>
<span style="left:1151.01px;top:336.11px;font-size:11.3px;line-height:11.3px;color:#1e1e1e;transform:scaleX(0.9260);transform-origin:0 0;-webkit-text-stroke:0.4px currentColor;">2.60</span>
<span style="left:1200.36px;top:321.88px;font-size:11.3px;line-height:11.3px;color:#333;transform:scaleX(0.9260);transform-origin:0 0;-webkit-text-stroke:0.4px currentColor;">Eff Tax Rate</span>
<span style="left:33.36px;top:350.33px;font-size:11.3px;line-height:11.3px;color:#1e1e1e;transform:scaleX(0.9260);transform-origin:0 0;-webkit-text-stroke:0.4px currentColor;">end of 1</span>
<span style="left:100.19px;top:350.33px;font-size:11.3px;line-height:11.3px;color:#1e1e1e;transform:scaleX(0.9260);transform-origin:0 0;-webkit-text-stroke:0.4px currentColor;">55</span>
<span style="left:149.55px;top:350.33px;font-size:11.3px;line-height:11.3px;color:#1e1e1e;transform:scaleX(0.9260);transform-origin:0 0;-webkit-text-stroke:0.4px currentColor;">60,500</span>
<span style="left:211.41px;top:350.33px;font-size:11.3px;line-height:11.3px;color:#1e1e1e;transform:scaleX(0.9260);transform-origin:0 0;-webkit-text-stroke:0.4px currentColor;">(8,000)</span>
<span style="left:269.14px;top:350.33px;font-size:11.3px;line-height:11.3px;color:#1e1e1e;transform:scaleX(0.9260);transform-origin:0 0;-webkit-text-stroke:0.4px currentColor;">212,000</span>
<span style="left:336.81px;top:350.33px;font-size:11.3px;line-height:11.3px;color:#1e1e1e;transform:scaleX(0.9260);transform-origin:0 0;-webkit-text-stroke:0.4px currentColor;">(6,000)</span>
<span style="left:400.35px;top:350.33px;font-size:11.3px;line-height:11.3px;color:#1e1e1e;transform:scaleX(0.9260);transform-origin:0 0;-webkit-text-stroke:0.4px currentColor;">57,500</span>
<span style="left:462.21px;top:350.33px;font-size:11.3px;line-height:11.3px;color:#1e1e1e;transform:scaleX(0.9260);transform-origin:0 0;-webkit-text-stroke:0.4px currentColor;">(6,000)</span>
<span style="left:519.94px;top:350.33px;font-size:11.3px;line-height:11.3px;color:#1e1e1e;transform:scaleX(0.9260);transform-origin:0 0;-webkit-text-stroke:0.4px currentColor;">250,000</span>
<span style="left:582.69px;top:350.33px;font-size:11.3px;line-height:11.3px;color:#1e1e1e;transform:scaleX(0.9260);transform-origin:0 0;-webkit-text-stroke:0.4px currentColor;">268,125</span>
<span style="left:677.36px;top:350.33px;font-size:11.3px;line-height:11.3px;color:#1e1e1e;transform:scaleX(0.9260);transform-origin:0 0;-webkit-text-stroke:0.4px currentColor;">0</span>
<span style="left:708.04px;top:350.33px;font-size:11.3px;line-height:11.3px;color:#1e1e1e;transform:scaleX(0.9260);transform-origin:0 0;-webkit-text-stroke:0.4px currentColor;">426,000</span>
<span style="left:775.71px;top:350.33px;font-size:11.3px;line-height:11.3px;color:#1e1e1e;transform:scaleX(0.9260);transform-origin:0 0;-webkit-text-stroke:0.4px currentColor;">(6,000)</span>
<span style="left:824.7px;top:350.33px;font-size:11.3px;line-height:11.3px;color:#1e1e1e;transform:scaleX(0.9260);transform-origin:0 0;-webkit-text-stroke:0.4px currentColor;">1,006,000</span>
<span style="left:895.3px;top:350.33px;font-size:11.3px;line-height:11.3px;color:#1e1e1e;transform:scaleX(0.9260);transform-origin:0 0;-webkit-text-stroke:0.4px currentColor;">(26,000)</span>
<span style="left:1021.54px;top:350.33px;font-size:11.3px;line-height:11.3px;color:#1e1e1e;transform:scaleX(0.9260);transform-origin:0 0;-webkit-text-stroke:0.4px currentColor;">100,000</span>
<span style="left:1116.26px;top:350.33px;font-size:11.3px;line-height:11.3px;color:#1e1e1e;transform:scaleX(0.9260);transform-origin:0 0;-webkit-text-stroke:0.4px currentColor;">0</span>
<span style="left:1158.61px;top:350.33px;font-size:11.3px;line-height:11.3px;color:#1e1e1e;transform:scaleX(0.9260);transform-origin:0 0;-webkit-text-stroke:0.4px currentColor;">3,000</span>
<span style="left:1194.04px;top:350.33px;font-size:11.3px;line-height:11.3px;color:#3a3a3a;transform:scaleX(0.9100);transform-origin:0 0;-webkit-text-stroke:0.4px currentColor;">(12,789)-13%</span>
<span style="left:1288.24px;top:350.33px;font-size:11.3px;line-height:11.3px;color:#1e1e1e;transform:scaleX(0.9260);transform-origin:0 0;-webkit-text-stroke:0.4px currentColor;">64,211</span>
<span style="left:988.63px;top:350.33px;font-size:11.3px;line-height:11.3px;color:#1e1e1e;transform:scaleX(0.8149);transform-origin:0 0;-webkit-text-stroke:0.4px currentColor;">%</span>
<span style="left:959.36px;top:350.33px;font-size:11.3px;line-height:11.3px;color:#1e1e1e;transform:scaleX(0.9260);transform-origin:0 0;-webkit-text-stroke:0.4px currentColor;">-2.74</span>
<span style="left:1335.71px;top:350.33px;font-size:11.3px;line-height:11.3px;color:#1e1e1e;transform:scaleX(0.9260);transform-origin:0 0;-webkit-text-stroke:0.4px currentColor;">end of 1</span>
<span style="left:33.39px;top:364.61px;font-size:11.3px;line-height:11.3px;color:#1e1e1e;transform:scaleX(0.9260);transform-origin:0 0;-webkit-text-stroke:0.4px currentColor;">end of 2</span>
<span style="left:100.19px;top:364.61px;font-size:11.3px;line-height:11.3px;color:#1e1e1e;transform:scaleX(0.9260);transform-origin:0 0;-webkit-text-stroke:0.4px currentColor;">56</span>
<span style="left:149.6px;top:364.61px;font-size:11.3px;line-height:11.3px;color:#1e1e1e;transform:scaleX(0.9260);transform-origin:0 0;-webkit-text-stroke:0.4px currentColor;">71,525</span>
<span style="left:211.41px;top:364.61px;font-size:11.3px;line-height:11.3px;color:#1e1e1e;transform:scaleX(0.9260);transform-origin:0 0;-webkit-text-stroke:0.4px currentColor;">(8,000)</span>
<span style="left:269.19px;top:364.61px;font-size:11.3px;line-height:11.3px;color:#1e1e1e;transform:scaleX(0.9260);transform-origin:0 0;-webkit-text-stroke:0.4px currentColor;">224,516</span>
<span style="left:336.81px;top:364.61px;font-size:11.3px;line-height:11.3px;color:#1e1e1e;transform:scaleX(0.9260);transform-origin:0 0;-webkit-text-stroke:0.4px currentColor;">(6,156)</span>
<span style="left:400.4px;top:364.61px;font-size:11.3px;line-height:11.3px;color:#1e1e1e;transform:scaleX(0.9260);transform-origin:0 0;-webkit-text-stroke:0.4px currentColor;">65,225</span>
<span style="left:462.21px;top:364.61px;font-size:11.3px;line-height:11.3px;color:#1e1e1e;transform:scaleX(0.9260);transform-origin:0 0;-webkit-text-stroke:0.4px currentColor;">(6,000)</span>
<span style="left:519.94px;top:364.61px;font-size:11.3px;line-height:11.3px;color:#1e1e1e;transform:scaleX(0.9260);transform-origin:0 0;-webkit-text-stroke:0.4px currentColor;">250,000</span>
<span style="left:582.59px;top:364.61px;font-size:11.3px;line-height:11.3px;color:#1e1e1e;transform:scaleX(0.9260);transform-origin:0 0;-webkit-text-stroke:0.4px currentColor;">287,564</span>
<span style="left:677.36px;top:364.61px;font-size:11.3px;line-height:11.3px;color:#1e1e1e;transform:scaleX(0.9260);transform-origin:0 0;-webkit-text-stroke:0.4px currentColor;">0</span>
<span style="left:708.04px;top:364.61px;font-size:11.3px;line-height:11.3px;color:#1e1e1e;transform:scaleX(0.9260);transform-origin:0 0;-webkit-text-stroke:0.4px currentColor;">453,300</span>
<span style="left:775.71px;top:364.61px;font-size:11.3px;line-height:11.3px;color:#1e1e1e;transform:scaleX(0.9260);transform-origin:0 0;-webkit-text-stroke:0.4px currentColor;">(6,000)</span>
<span style="left:824.75px;top:364.61px;font-size:11.3px;line-height:11.3px;color:#1e1e1e;transform:scaleX(0.9260);transform-origin:0 0;-webkit-text-stroke:0.4px currentColor;">1,064,566</span>
<span style="left:895.3px;top:364.61px;font-size:11.3px;line-height:11.3px;color:#1e1e1e;transform:scaleX(0.9260);transform-origin:0 0;-webkit-text-stroke:0.4px currentColor;">(26,156)</span>
<span style="left:1021.54px;top:364.61px;font-size:11.3px;line-height:11.3px;color:#1e1e1e;transform:scaleX(0.9260);transform-origin:0 0;-webkit-text-stroke:0.4px currentColor;">102,600</span>
<span style="left:1116.26px;top:364.61px;font-size:11.3px;line-height:11.3px;color:#1e1e1e;transform:scaleX(0.9260);transform-origin:0 0;-webkit-text-stroke:0.4px currentColor;">0</span>
<span style="left:1158.66px;top:364.61px;font-size:11.3px;line-height:11.3px;color:#1e1e1e;transform:scaleX(0.9260);transform-origin:0 0;-webkit-text-stroke:0.4px currentColor;">3,078</span>
<span style="left:1194.04px;top:364.61px;font-size:11.3px;line-height:11.3px;color:#3a3a3a;transform:scaleX(0.9100);transform-origin:0 0;-webkit-text-stroke:0.4px currentColor;">(13,065)-13%</span>
<span style="left:1287.5px;top:364.61px;font-size:11.3px;line-height:11.3px;color:#1e1e1e;transform:scaleX(0.9260);transform-origin:0 0;-webkit-text-stroke:0.4px currentColor;">66,457</span>
<span style="left:988.63px;top:364.61px;font-size:11.3px;line-height:11.3px;color:#1e1e1e;transform:scaleX(0.8149);transform-origin:0 0;-webkit-text-stroke:0.4px currentColor;">%</span>
<span style="left:959.41px;top:364.61px;font-size:11.3px;line-height:11.3px;color:#1e1e1e;transform:scaleX(0.9260);transform-origin:0 0;-webkit-text-stroke:0.4px currentColor;">-2.60</span>
<span style="left:1335.74px;top:364.61px;font-size:11.3px;line-height:11.3px;color:#1e1e1e;transform:scaleX(0.9260);transform-origin:0 0;-webkit-text-stroke:0.4px currentColor;">end of 2</span>
<span style="left:33.34px;top:378.89px;font-size:11.3px;line-height:11.3px;color:#1e1e1e;transform:scaleX(0.9260);transform-origin:0 0;-webkit-text-stroke:0.4px currentColor;">end of 3</span>
<span style="left:100.24px;top:378.89px;font-size:11.3px;line-height:11.3px;color:#1e1e1e;transform:scaleX(0.9260);transform-origin:0 0;-webkit-text-stroke:0.4px currentColor;">57</span>
<span style="left:149.65px;top:378.89px;font-size:11.3px;line-height:11.3px;color:#1e1e1e;transform:scaleX(0.9260);transform-origin:0 0;-webkit-text-stroke:0.4px currentColor;">83,101</span>
<span style="left:211.41px;top:378.89px;font-size:11.3px;line-height:11.3px;color:#1e1e1e;transform:scaleX(0.9260);transform-origin:0 0;-webkit-text-stroke:0.4px currentColor;">(8,000)</span>
<span style="left:269.3px;top:378.89px;font-size:11.3px;line-height:11.3px;color:#1e1e1e;transform:scaleX(0.9260);transform-origin:0 0;-webkit-text-stroke:0.4px currentColor;">237,567</span>
<span style="left:336.81px;top:378.89px;font-size:11.3px;line-height:11.3px;color:#1e1e1e;transform:scaleX(0.9260);transform-origin:0 0;-webkit-text-stroke:0.4px currentColor;">(6,316)</span>
<span style="left:400.5px;top:378.89px;font-size:11.3px;line-height:11.3px;color:#1e1e1e;transform:scaleX(0.9260);transform-origin:0 0;-webkit-text-stroke:0.4px currentColor;">73,182</span>
<span style="left:462.21px;top:378.89px;font-size:11.3px;line-height:11.3px;color:#1e1e1e;transform:scaleX(0.9260);transform-origin:0 0;-webkit-text-stroke:0.4px currentColor;">(6,000)</span>
<span style="left:519.94px;top:378.89px;font-size:11.3px;line-height:11.3px;color:#1e1e1e;transform:scaleX(0.9260);transform-origin:0 0;-webkit-text-stroke:0.4px currentColor;">250,000</span>
<span style="left:582.8px;top:378.89px;font-size:11.3px;line-height:11.3px;color:#1e1e1e;transform:scaleX(0.9260);transform-origin:0 0;-webkit-text-stroke:0.4px currentColor;">308,412</span>
<span style="left:677.36px;top:378.89px;font-size:11.3px;line-height:11.3px;color:#1e1e1e;transform:scaleX(0.9260);transform-origin:0 0;-webkit-text-stroke:0.4px currentColor;">0</span>
<span style="left:708.09px;top:378.89px;font-size:11.3px;line-height:11.3px;color:#1e1e1e;transform:scaleX(0.9260);transform-origin:0 0;-webkit-text-stroke:0.4px currentColor;">481,965</span>
<span style="left:775.71px;top:378.89px;font-size:11.3px;line-height:11.3px;color:#1e1e1e;transform:scaleX(0.9260);transform-origin:0 0;-webkit-text-stroke:0.4px currentColor;">(6,000)</span>
<span style="left:824.75px;top:378.89px;font-size:11.3px;line-height:11.3px;color:#1e1e1e;transform:scaleX(0.9260);transform-origin:0 0;-webkit-text-stroke:0.4px currentColor;">1,125,815</span>
<span style="left:895.3px;top:378.89px;font-size:11.3px;line-height:11.3px;color:#1e1e1e;transform:scaleX(0.9260);transform-origin:0 0;-webkit-text-stroke:0.4px currentColor;">(26,316)</span>
<span style="left:1021.59px;top:378.89px;font-size:11.3px;line-height:11.3px;color:#1e1e1e;transform:scaleX(0.9260);transform-origin:0 0;-webkit-text-stroke:0.4px currentColor;">105,268</span>
<span style="left:1116.26px;top:378.89px;font-size:11.3px;line-height:11.3px;color:#1e1e1e;transform:scaleX(0.9260);transform-origin:0 0;-webkit-text-stroke:0.4px currentColor;">0</span>
<span style="left:1158.66px;top:378.89px;font-size:11.3px;line-height:11.3px;color:#1e1e1e;transform:scaleX(0.9260);transform-origin:0 0;-webkit-text-stroke:0.4px currentColor;">3,158</span>
<span style="left:1194.04px;top:378.89px;font-size:11.3px;line-height:11.3px;color:#3a3a3a;transform:scaleX(0.9100);transform-origin:0 0;-webkit-text-stroke:0.4px currentColor;">(13,463)-13%</span>
<span style="left:1287.5px;top:378.89px;font-size:11.3px;line-height:11.3px;color:#1e1e1e;transform:scaleX(0.9260);transform-origin:0 0;-webkit-text-stroke:0.4px currentColor;">68,647</span>
<span style="left:988.63px;top:378.89px;font-size:11.3px;line-height:11.3px;color:#1e1e1e;transform:scaleX(0.8149);transform-origin:0 0;-webkit-text-stroke:0.4px currentColor;">%</span>
<span style="left:959.57px;top:378.89px;font-size:11.3px;line-height:11.3px;color:#1e1e1e;transform:scaleX(0.9260);transform-origin:0 0;-webkit-text-stroke:0.4px currentColor;">-2.47</span>
<span style="left:1335.69px;top:378.89px;font-size:11.3px;line-height:11.3px;color:#1e1e1e;transform:scaleX(0.9260);transform-origin:0 0;-webkit-text-stroke:0.4px currentColor;">end of 3</span>
<span style="left:33.28px;top:393.17px;font-size:11.3px;line-height:11.3px;color:#1e1e1e;transform:scaleX(0.9260);transform-origin:0 0;-webkit-text-stroke:0.4px currentColor;">end of 4</span>
<span style="left:100.19px;top:393.17px;font-size:11.3px;line-height:11.3px;color:#1e1e1e;transform:scaleX(0.9260);transform-origin:0 0;-webkit-text-stroke:0.4px currentColor;">58</span>
<span style="left:149.6px;top:393.17px;font-size:11.3px;line-height:11.3px;color:#1e1e1e;transform:scaleX(0.9260);transform-origin:0 0;-webkit-text-stroke:0.4px currentColor;">95,256</span>
<span style="left:211.41px;top:393.17px;font-size:11.3px;line-height:11.3px;color:#1e1e1e;transform:scaleX(0.9260);transform-origin:0 0;-webkit-text-stroke:0.4px currentColor;">(8,000)</span>
<span style="left:269.09px;top:393.17px;font-size:11.3px;line-height:11.3px;color:#1e1e1e;transform:scaleX(0.9260);transform-origin:0 0;-webkit-text-stroke:0.4px currentColor;">251,174</span>
<span style="left:336.81px;top:393.17px;font-size:11.3px;line-height:11.3px;color:#1e1e1e;transform:scaleX(0.9260);transform-origin:0 0;-webkit-text-stroke:0.4px currentColor;">(6,480)</span>
<span style="left:400.5px;top:393.17px;font-size:11.3px;line-height:11.3px;color:#1e1e1e;transform:scaleX(0.9260);transform-origin:0 0;-webkit-text-stroke:0.4px currentColor;">81,377</span>
<span style="left:462.21px;top:393.17px;font-size:11.3px;line-height:11.3px;color:#1e1e1e;transform:scaleX(0.9260);transform-origin:0 0;-webkit-text-stroke:0.4px currentColor;">(6,000)</span>
<span style="left:519.94px;top:393.17px;font-size:11.3px;line-height:11.3px;color:#1e1e1e;transform:scaleX(0.9260);transform-origin:0 0;-webkit-text-stroke:0.4px currentColor;">250,000</span>
<span style="left:582.8px;top:393.17px;font-size:11.3px;line-height:11.3px;color:#1e1e1e;transform:scaleX(0.9260);transform-origin:0 0;-webkit-text-stroke:0.4px currentColor;">330,772</span>
<span style="left:677.36px;top:393.17px;font-size:11.3px;line-height:11.3px;color:#1e1e1e;transform:scaleX(0.9260);transform-origin:0 0;-webkit-text-stroke:0.4px currentColor;">0</span>
<span style="left:708.09px;top:393.17px;font-size:11.3px;line-height:11.3px;color:#1e1e1e;transform:scaleX(0.9260);transform-origin:0 0;-webkit-text-stroke:0.4px currentColor;">512,063</span>
<span style="left:775.71px;top:393.17px;font-size:11.3px;line-height:11.3px;color:#1e1e1e;transform:scaleX(0.9260);transform-origin:0 0;-webkit-text-stroke:0.4px currentColor;">(6,000)</span>
<span style="left:824.81px;top:393.17px;font-size:11.3px;line-height:11.3px;color:#1e1e1e;transform:scaleX(0.9260);transform-origin:0 0;-webkit-text-stroke:0.4px currentColor;">1,189,871</span>
<span style="left:895.3px;top:393.17px;font-size:11.3px;line-height:11.3px;color:#1e1e1e;transform:scaleX(0.9260);transform-origin:0 0;-webkit-text-stroke:0.4px currentColor;">(26,480)</span>
<span style="left:1021.59px;top:393.17px;font-size:11.3px;line-height:11.3px;color:#1e1e1e;transform:scaleX(0.9260);transform-origin:0 0;-webkit-text-stroke:0.4px currentColor;">108,005</span>
<span style="left:1116.26px;top:393.17px;font-size:11.3px;line-height:11.3px;color:#1e1e1e;transform:scaleX(0.9260);transform-origin:0 0;-webkit-text-stroke:0.4px currentColor;">0</span>
<span style="left:1158.61px;top:393.17px;font-size:11.3px;line-height:11.3px;color:#1e1e1e;transform:scaleX(0.9260);transform-origin:0 0;-webkit-text-stroke:0.4px currentColor;">3,240</span>
<span style="left:1194.04px;top:393.17px;font-size:11.3px;line-height:11.3px;color:#3a3a3a;transform:scaleX(0.9100);transform-origin:0 0;-webkit-text-stroke:0.4px currentColor;">(13,874)-13%</span>
<span style="left:1287.45px;top:393.17px;font-size:11.3px;line-height:11.3px;color:#1e1e1e;transform:scaleX(0.9260);transform-origin:0 0;-webkit-text-stroke:0.4px currentColor;">70,891</span>
<span style="left:988.63px;top:393.17px;font-size:11.3px;line-height:11.3px;color:#1e1e1e;transform:scaleX(0.8149);transform-origin:0 0;-webkit-text-stroke:0.4px currentColor;">%</span>
<span style="left:959.46px;top:393.17px;font-size:11.3px;line-height:11.3px;color:#1e1e1e;transform:scaleX(0.9260);transform-origin:0 0;-webkit-text-stroke:0.4px currentColor;">-2.35</span>
<span style="left:1335.63px;top:393.17px;font-size:11.3px;line-height:11.3px;color:#1e1e1e;transform:scaleX(0.9260);transform-origin:0 0;-webkit-text-stroke:0.4px currentColor;">end of 4</span>
<span style="left:33.34px;top:407.45px;font-size:11.3px;line-height:11.3px;color:#1e1e1e;transform:scaleX(0.9260);transform-origin:0 0;-webkit-text-stroke:0.4px currentColor;">end of 5</span>
<span style="left:100.22px;top:407.45px;font-size:11.3px;line-height:11.3px;color:#1e1e1e;transform:scaleX(0.9260);transform-origin:0 0;-webkit-text-stroke:0.4px currentColor;">59</span>
<span style="left:143.84px;top:407.45px;font-size:11.3px;line-height:11.3px;color:#1e1e1e;transform:scaleX(0.9260);transform-origin:0 0;-webkit-text-stroke:0.4px currentColor;">108,019</span>
<span style="left:211.41px;top:407.45px;font-size:11.3px;line-height:11.3px;color:#1e1e1e;transform:scaleX(0.9260);transform-origin:0 0;-webkit-text-stroke:0.4px currentColor;">(8,000)</span>
<span style="left:269.19px;top:407.45px;font-size:11.3px;line-height:11.3px;color:#1e1e1e;transform:scaleX(0.9260);transform-origin:0 0;-webkit-text-stroke:0.4px currentColor;">265,358</span>
<span style="left:336.81px;top:407.45px;font-size:11.3px;line-height:11.3px;color:#1e1e1e;transform:scaleX(0.9260);transform-origin:0 0;-webkit-text-stroke:0.4px currentColor;">(6,648)</span>
<span style="left:400.45px;top:407.45px;font-size:11.3px;line-height:11.3px;color:#1e1e1e;transform:scaleX(0.9260);transform-origin:0 0;-webkit-text-stroke:0.4px currentColor;">89,819</span>
<span style="left:462.21px;top:407.45px;font-size:11.3px;line-height:11.3px;color:#1e1e1e;transform:scaleX(0.9260);transform-origin:0 0;-webkit-text-stroke:0.4px currentColor;">(6,000)</span>
<span style="left:519.94px;top:407.45px;font-size:11.3px;line-height:11.3px;color:#1e1e1e;transform:scaleX(0.9260);transform-origin:0 0;-webkit-text-stroke:0.4px currentColor;">250,000</span>
<span style="left:582.69px;top:407.45px;font-size:11.3px;line-height:11.3px;color:#1e1e1e;transform:scaleX(0.9260);transform-origin:0 0;-webkit-text-stroke:0.4px currentColor;">354,753</span>
<span style="left:677.36px;top:407.45px;font-size:11.3px;line-height:11.3px;color:#1e1e1e;transform:scaleX(0.9260);transform-origin:0 0;-webkit-text-stroke:0.4px currentColor;">0</span>
<span style="left:708.09px;top:407.45px;font-size:11.3px;line-height:11.3px;color:#1e1e1e;transform:scaleX(0.9260);transform-origin:0 0;-webkit-text-stroke:0.4px currentColor;">543,666</span>
<span style="left:775.71px;top:407.45px;font-size:11.3px;line-height:11.3px;color:#1e1e1e;transform:scaleX(0.9260);transform-origin:0 0;-webkit-text-stroke:0.4px currentColor;">(6,000)</span>
<span style="left:824.86px;top:407.45px;font-size:11.3px;line-height:11.3px;color:#1e1e1e;transform:scaleX(0.9260);transform-origin:0 0;-webkit-text-stroke:0.4px currentColor;">1,256,862</span>
<span style="left:895.3px;top:407.45px;font-size:11.3px;line-height:11.3px;color:#1e1e1e;transform:scaleX(0.9260);transform-origin:0 0;-webkit-text-stroke:0.4px currentColor;">(26,648)</span>
<span style="left:1022.38px;top:407.45px;font-size:11.3px;line-height:11.3px;color:#1e1e1e;transform:scaleX(0.9260);transform-origin:0 0;-webkit-text-stroke:0.4px currentColor;">110,813</span>
<span style="left:1116.26px;top:407.45px;font-size:11.3px;line-height:11.3px;color:#1e1e1e;transform:scaleX(0.9260);transform-origin:0 0;-webkit-text-stroke:0.4px currentColor;">0</span>
<span style="left:1158.55px;top:407.45px;font-size:11.3px;line-height:11.3px;color:#1e1e1e;transform:scaleX(0.9260);transform-origin:0 0;-webkit-text-stroke:0.4px currentColor;">3,324</span>
<span style="left:1194.04px;top:407.45px;font-size:11.3px;line-height:11.3px;color:#3a3a3a;transform:scaleX(0.9100);transform-origin:0 0;-webkit-text-stroke:0.4px currentColor;">(14,296)-13%</span>
<span style="left:1287.4px;top:407.45px;font-size:11.3px;line-height:11.3px;color:#1e1e1e;transform:scaleX(0.9260);transform-origin:0 0;-webkit-text-stroke:0.4px currentColor;">73,193</span>
<span style="left:988.63px;top:407.45px;font-size:11.3px;line-height:11.3px;color:#1e1e1e;transform:scaleX(0.8149);transform-origin:0 0;-webkit-text-stroke:0.4px currentColor;">%</span>
<span style="left:959.36px;top:407.45px;font-size:11.3px;line-height:11.3px;color:#1e1e1e;transform:scaleX(0.9260);transform-origin:0 0;-webkit-text-stroke:0.4px currentColor;">-2.24</span>
<span style="left:1335.69px;top:407.45px;font-size:11.3px;line-height:11.3px;color:#1e1e1e;transform:scaleX(0.9260);transform-origin:0 0;-webkit-text-stroke:0.4px currentColor;">end of 5</span>
<span style="left:33.34px;top:421.72px;font-size:11.3px;line-height:11.3px;color:#1e1e1e;transform:scaleX(0.9260);transform-origin:0 0;-webkit-text-stroke:0.4px currentColor;">end of 6</span>
<span style="left:100.11px;top:421.72px;font-size:11.3px;line-height:11.3px;color:#1e1e1e;transform:scaleX(0.9260);transform-origin:0 0;-webkit-text-stroke:0.4px currentColor;">60</span>
<span style="left:143.74px;top:421.72px;font-size:11.3px;line-height:11.3px;color:#1e1e1e;transform:scaleX(0.9260);transform-origin:0 0;-webkit-text-stroke:0.4px currentColor;">121,420</span>
<span style="left:211.41px;top:421.72px;font-size:11.3px;line-height:11.3px;color:#1e1e1e;transform:scaleX(0.9260);transform-origin:0 0;-webkit-text-stroke:0.4px currentColor;">(8,000)</span>
<span style="left:269.14px;top:421.72px;font-size:11.3px;line-height:11.3px;color:#1e1e1e;transform:scaleX(0.9260);transform-origin:0 0;-webkit-text-stroke:0.4px currentColor;">280,140</span>
<span style="left:336.81px;top:421.72px;font-size:11.3px;line-height:11.3px;color:#1e1e1e;transform:scaleX(0.9260);transform-origin:0 0;-webkit-text-stroke:0.4px currentColor;">(6,822)</span>
<span style="left:400.4px;top:421.72px;font-size:11.3px;line-height:11.3px;color:#1e1e1e;transform:scaleX(0.9260);transform-origin:0 0;-webkit-text-stroke:0.4px currentColor;">98,513</span>
<span style="left:462.21px;top:421.72px;font-size:11.3px;line-height:11.3px;color:#1e1e1e;transform:scaleX(0.9260);transform-origin:0 0;-webkit-text-stroke:0.4px currentColor;">(6,000)</span>
<span style="left:519.94px;top:421.72px;font-size:11.3px;line-height:11.3px;color:#1e1e1e;transform:scaleX(0.9260);transform-origin:0 0;-webkit-text-stroke:0.4px currentColor;">250,000</span>
<span style="left:582.69px;top:421.72px;font-size:11.3px;line-height:11.3px;color:#1e1e1e;transform:scaleX(0.9260);transform-origin:0 0;-webkit-text-stroke:0.4px currentColor;">380,473</span>
<span style="left:677.36px;top:421.72px;font-size:11.3px;line-height:11.3px;color:#1e1e1e;transform:scaleX(0.9260);transform-origin:0 0;-webkit-text-stroke:0.4px currentColor;">0</span>
<span style="left:708.04px;top:421.72px;font-size:11.3px;line-height:11.3px;color:#1e1e1e;transform:scaleX(0.9260);transform-origin:0 0;-webkit-text-stroke:0.4px currentColor;">576,850</span>
<span style="left:775.71px;top:421.72px;font-size:11.3px;line-height:11.3px;color:#1e1e1e;transform:scaleX(0.9260);transform-origin:0 0;-webkit-text-stroke:0.4px currentColor;">(6,000)</span>
<span style="left:824.75px;top:421.72px;font-size:11.3px;line-height:11.3px;color:#1e1e1e;transform:scaleX(0.9260);transform-origin:0 0;-webkit-text-stroke:0.4px currentColor;">1,326,923</span>
<span style="left:895.3px;top:421.72px;font-size:11.3px;line-height:11.3px;color:#1e1e1e;transform:scaleX(0.9260);transform-origin:0 0;-webkit-text-stroke:0.4px currentColor;">(26,822)</span>
<span style="left:1022.27px;top:421.72px;font-size:11.3px;line-height:11.3px;color:#1e1e1e;transform:scaleX(0.9260);transform-origin:0 0;-webkit-text-stroke:0.4px currentColor;">113,694</span>
<span style="left:1116.26px;top:421.72px;font-size:11.3px;line-height:11.3px;color:#1e1e1e;transform:scaleX(0.9260);transform-origin:0 0;-webkit-text-stroke:0.4px currentColor;">0</span>
<span style="left:1159.5px;top:421.72px;font-size:11.3px;line-height:11.3px;color:#1e1e1e;transform:scaleX(0.9260);transform-origin:0 0;-webkit-text-stroke:0.4px currentColor;">3,411</span>
<span style="left:1194.04px;top:421.72px;font-size:11.3px;line-height:11.3px;color:#3a3a3a;transform:scaleX(0.9100);transform-origin:0 0;-webkit-text-stroke:0.4px currentColor;">(14,730)-13%</span>
<span style="left:1287.4px;top:421.72px;font-size:11.3px;line-height:11.3px;color:#1e1e1e;transform:scaleX(0.9260);transform-origin:0 0;-webkit-text-stroke:0.4px currentColor;">75,553</span>
<span style="left:988.63px;top:421.72px;font-size:11.3px;line-height:11.3px;color:#1e1e1e;transform:scaleX(0.8149);transform-origin:0 0;-webkit-text-stroke:0.4px currentColor;">%</span>
<span style="left:959.46px;top:421.72px;font-size:11.3px;line-height:11.3px;color:#1e1e1e;transform:scaleX(0.9260);transform-origin:0 0;-webkit-text-stroke:0.4px currentColor;">-2.13</span>
<span style="left:1335.69px;top:421.72px;font-size:11.3px;line-height:11.3px;color:#1e1e1e;transform:scaleX(0.9260);transform-origin:0 0;-webkit-text-stroke:0.4px currentColor;">end of 6</span>
<span style="left:33.39px;top:436px;font-size:11.3px;line-height:11.3px;color:#1e1e1e;transform:scaleX(0.9260);transform-origin:0 0;-webkit-text-stroke:0.4px currentColor;">end of 7</span>
<span style="left:100.17px;top:436px;font-size:11.3px;line-height:11.3px;color:#1e1e1e;transform:scaleX(0.9260);transform-origin:0 0;-webkit-text-stroke:0.4px currentColor;">61</span>
<span style="left:143.84px;top:436px;font-size:11.3px;line-height:11.3px;color:#1e1e1e;transform:scaleX(0.9260);transform-origin:0 0;-webkit-text-stroke:0.4px currentColor;">135,491</span>
<span style="left:211.41px;top:436px;font-size:11.3px;line-height:11.3px;color:#1e1e1e;transform:scaleX(0.9260);transform-origin:0 0;-webkit-text-stroke:0.4px currentColor;">(8,000)</span>
<span style="left:269.19px;top:436px;font-size:11.3px;line-height:11.3px;color:#1e1e1e;transform:scaleX(0.9260);transform-origin:0 0;-webkit-text-stroke:0.4px currentColor;">295,543</span>
<span style="left:336.81px;top:436px;font-size:11.3px;line-height:11.3px;color:#1e1e1e;transform:scaleX(0.9260);transform-origin:0 0;-webkit-text-stroke:0.4px currentColor;">(6,998)</span>
<span style="left:394.59px;top:436px;font-size:11.3px;line-height:11.3px;color:#1e1e1e;transform:scaleX(0.9260);transform-origin:0 0;-webkit-text-stroke:0.4px currentColor;">107,468</span>
<span style="left:462.21px;top:436px;font-size:11.3px;line-height:11.3px;color:#1e1e1e;transform:scaleX(0.9260);transform-origin:0 0;-webkit-text-stroke:0.4px currentColor;">(6,000)</span>
<span style="left:519.94px;top:436px;font-size:11.3px;line-height:11.3px;color:#1e1e1e;transform:scaleX(0.9260);transform-origin:0 0;-webkit-text-stroke:0.4px currentColor;">250,000</span>
<span style="left:582.8px;top:436px;font-size:11.3px;line-height:11.3px;color:#1e1e1e;transform:scaleX(0.9260);transform-origin:0 0;-webkit-text-stroke:0.4px currentColor;">408,057</span>
<span style="left:677.36px;top:436px;font-size:11.3px;line-height:11.3px;color:#1e1e1e;transform:scaleX(0.9260);transform-origin:0 0;-webkit-text-stroke:0.4px currentColor;">0</span>
<span style="left:708.98px;top:436px;font-size:11.3px;line-height:11.3px;color:#1e1e1e;transform:scaleX(0.9260);transform-origin:0 0;-webkit-text-stroke:0.4px currentColor;">611,692</span>
<span style="left:775.71px;top:436px;font-size:11.3px;line-height:11.3px;color:#1e1e1e;transform:scaleX(0.9260);transform-origin:0 0;-webkit-text-stroke:0.4px currentColor;">(6,000)</span>
<span style="left:824.65px;top:436px;font-size:11.3px;line-height:11.3px;color:#1e1e1e;transform:scaleX(0.9260);transform-origin:0 0;-webkit-text-stroke:0.4px currentColor;">1,400,194</span>
<span style="left:895.3px;top:436px;font-size:11.3px;line-height:11.3px;color:#1e1e1e;transform:scaleX(0.9260);transform-origin:0 0;-webkit-text-stroke:0.4px currentColor;">(26,998)</span>
<span style="left:1022.32px;top:436px;font-size:11.3px;line-height:11.3px;color:#1e1e1e;transform:scaleX(0.9260);transform-origin:0 0;-webkit-text-stroke:0.4px currentColor;">116,650</span>
<span style="left:1116.26px;top:436px;font-size:11.3px;line-height:11.3px;color:#1e1e1e;transform:scaleX(0.9260);transform-origin:0 0;-webkit-text-stroke:0.4px currentColor;">0</span>
<span style="left:1158.71px;top:436px;font-size:11.3px;line-height:11.3px;color:#1e1e1e;transform:scaleX(0.9260);transform-origin:0 0;-webkit-text-stroke:0.4px currentColor;">3,499</span>
<span style="left:1194.04px;top:436px;font-size:11.3px;line-height:11.3px;color:#3a3a3a;transform:scaleX(0.9100);transform-origin:0 0;-webkit-text-stroke:0.4px currentColor;">(15,177)-13%</span>
<span style="left:1287.29px;top:436px;font-size:11.3px;line-height:11.3px;color:#1e1e1e;transform:scaleX(0.9260);transform-origin:0 0;-webkit-text-stroke:0.4px currentColor;">77,974</span>
<span style="left:988.63px;top:436px;font-size:11.3px;line-height:11.3px;color:#1e1e1e;transform:scaleX(0.8149);transform-origin:0 0;-webkit-text-stroke:0.4px currentColor;">%</span>
<span style="left:959.46px;top:436px;font-size:11.3px;line-height:11.3px;color:#1e1e1e;transform:scaleX(0.9260);transform-origin:0 0;-webkit-text-stroke:0.4px currentColor;">-2.03</span>
<span style="left:1335.74px;top:436px;font-size:11.3px;line-height:11.3px;color:#1e1e1e;transform:scaleX(0.9260);transform-origin:0 0;-webkit-text-stroke:0.4px currentColor;">end of 7</span>
<span style="left:33.34px;top:450.28px;font-size:11.3px;line-height:11.3px;color:#1e1e1e;transform:scaleX(0.9260);transform-origin:0 0;-webkit-text-stroke:0.4px currentColor;">end of 8</span>
<span style="left:100.19px;top:450.28px;font-size:11.3px;line-height:11.3px;color:#1e1e1e;transform:scaleX(0.9260);transform-origin:0 0;-webkit-text-stroke:0.4px currentColor;">62</span>
<span style="left:143.79px;top:450.28px;font-size:11.3px;line-height:11.3px;color:#1e1e1e;transform:scaleX(0.9260);transform-origin:0 0;-webkit-text-stroke:0.4px currentColor;">150,266</span>
<span style="left:211.41px;top:450.28px;font-size:11.3px;line-height:11.3px;color:#1e1e1e;transform:scaleX(0.9260);transform-origin:0 0;-webkit-text-stroke:0.4px currentColor;">(8,000)</span>
<span style="left:270.03px;top:450.28px;font-size:11.3px;line-height:11.3px;color:#1e1e1e;transform:scaleX(0.9260);transform-origin:0 0;-webkit-text-stroke:0.4px currentColor;">311,589</span>
<span style="left:336.81px;top:450.28px;font-size:11.3px;line-height:11.3px;color:#1e1e1e;transform:scaleX(0.9260);transform-origin:0 0;-webkit-text-stroke:0.4px currentColor;">(7,180)</span>
<span style="left:395.38px;top:450.28px;font-size:11.3px;line-height:11.3px;color:#1e1e1e;transform:scaleX(0.9260);transform-origin:0 0;-webkit-text-stroke:0.4px currentColor;">116,693</span>
<span style="left:462.21px;top:450.28px;font-size:11.3px;line-height:11.3px;color:#1e1e1e;transform:scaleX(0.9260);transform-origin:0 0;-webkit-text-stroke:0.4px currentColor;">(6,000)</span>
<span style="left:519.94px;top:450.28px;font-size:11.3px;line-height:11.3px;color:#1e1e1e;transform:scaleX(0.9260);transform-origin:0 0;-webkit-text-stroke:0.4px currentColor;">250,000</span>
<span style="left:582.74px;top:450.28px;font-size:11.3px;line-height:11.3px;color:#1e1e1e;transform:scaleX(0.9260);transform-origin:0 0;-webkit-text-stroke:0.4px currentColor;">437,641</span>
<span style="left:677.36px;top:450.28px;font-size:11.3px;line-height:11.3px;color:#1e1e1e;transform:scaleX(0.9260);transform-origin:0 0;-webkit-text-stroke:0.4px currentColor;">0</span>
<span style="left:708.2px;top:450.28px;font-size:11.3px;line-height:11.3px;color:#1e1e1e;transform:scaleX(0.9260);transform-origin:0 0;-webkit-text-stroke:0.4px currentColor;">648,277</span>
<span style="left:775.71px;top:450.28px;font-size:11.3px;line-height:11.3px;color:#1e1e1e;transform:scaleX(0.9260);transform-origin:0 0;-webkit-text-stroke:0.4px currentColor;">(6,000)</span>
<span style="left:824.65px;top:450.28px;font-size:11.3px;line-height:11.3px;color:#1e1e1e;transform:scaleX(0.9260);transform-origin:0 0;-webkit-text-stroke:0.4px currentColor;">1,476,824</span>
<span style="left:895.3px;top:450.28px;font-size:11.3px;line-height:11.3px;color:#1e1e1e;transform:scaleX(0.9260);transform-origin:0 0;-webkit-text-stroke:0.4px currentColor;">(27,180)</span>
<span style="left:1022.38px;top:450.28px;font-size:11.3px;line-height:11.3px;color:#1e1e1e;transform:scaleX(0.9260);transform-origin:0 0;-webkit-text-stroke:0.4px currentColor;">119,683</span>
<span style="left:1116.26px;top:450.28px;font-size:11.3px;line-height:11.3px;color:#1e1e1e;transform:scaleX(0.9260);transform-origin:0 0;-webkit-text-stroke:0.4px currentColor;">0</span>
<span style="left:1158.61px;top:450.28px;font-size:11.3px;line-height:11.3px;color:#1e1e1e;transform:scaleX(0.9260);transform-origin:0 0;-webkit-text-stroke:0.4px currentColor;">3,590</span>
<span style="left:1194.04px;top:450.28px;font-size:11.3px;line-height:11.3px;color:#3a3a3a;transform:scaleX(0.9100);transform-origin:0 0;-webkit-text-stroke:0.4px currentColor;">(15,636)-14%</span>
<span style="left:1287.5px;top:450.28px;font-size:11.3px;line-height:11.3px;color:#1e1e1e;transform:scaleX(0.9260);transform-origin:0 0;-webkit-text-stroke:0.4px currentColor;">80,457</span>
<span style="left:988.63px;top:450.28px;font-size:11.3px;line-height:11.3px;color:#1e1e1e;transform:scaleX(0.8149);transform-origin:0 0;-webkit-text-stroke:0.4px currentColor;">%</span>
<span style="left:959.36px;top:450.28px;font-size:11.3px;line-height:11.3px;color:#1e1e1e;transform:scaleX(0.9260);transform-origin:0 0;-webkit-text-stroke:0.4px currentColor;">-1.94</span>
<span style="left:1335.69px;top:450.28px;font-size:11.3px;line-height:11.3px;color:#1e1e1e;transform:scaleX(0.9260);transform-origin:0 0;-webkit-text-stroke:0.4px currentColor;">end of 8</span>
<span style="left:33.36px;top:464.56px;font-size:11.3px;line-height:11.3px;color:#1e1e1e;transform:scaleX(0.9260);transform-origin:0 0;-webkit-text-stroke:0.4px currentColor;">end of 9</span>
<span style="left:100.14px;top:464.56px;font-size:11.3px;line-height:11.3px;color:#1e1e1e;transform:scaleX(0.9260);transform-origin:0 0;-webkit-text-stroke:0.4px currentColor;">63</span>
<span style="left:143.84px;top:464.56px;font-size:11.3px;line-height:11.3px;color:#1e1e1e;transform:scaleX(0.9260);transform-origin:0 0;-webkit-text-stroke:0.4px currentColor;">165,779</span>
<span style="left:211.41px;top:464.56px;font-size:11.3px;line-height:11.3px;color:#1e1e1e;transform:scaleX(0.9260);transform-origin:0 0;-webkit-text-stroke:0.4px currentColor;">(8,000)</span>
<span style="left:269.19px;top:464.56px;font-size:11.3px;line-height:11.3px;color:#1e1e1e;transform:scaleX(0.9260);transform-origin:0 0;-webkit-text-stroke:0.4px currentColor;">328,305</span>
<span style="left:336.81px;top:464.56px;font-size:11.3px;line-height:11.3px;color:#1e1e1e;transform:scaleX(0.9260);transform-origin:0 0;-webkit-text-stroke:0.4px currentColor;">(7,368)</span>
<span style="left:394.59px;top:464.56px;font-size:11.3px;line-height:11.3px;color:#1e1e1e;transform:scaleX(0.9260);transform-origin:0 0;-webkit-text-stroke:0.4px currentColor;">126,193</span>
<span style="left:462.21px;top:464.56px;font-size:11.3px;line-height:11.3px;color:#1e1e1e;transform:scaleX(0.9260);transform-origin:0 0;-webkit-text-stroke:0.4px currentColor;">(6,000)</span>
<span style="left:519.94px;top:464.56px;font-size:11.3px;line-height:11.3px;color:#1e1e1e;transform:scaleX(0.9260);transform-origin:0 0;-webkit-text-stroke:0.4px currentColor;">250,000</span>
<span style="left:582.64px;top:464.56px;font-size:11.3px;line-height:11.3px;color:#1e1e1e;transform:scaleX(0.9260);transform-origin:0 0;-webkit-text-stroke:0.4px currentColor;">469,370</span>
<span style="left:677.36px;top:464.56px;font-size:11.3px;line-height:11.3px;color:#1e1e1e;transform:scaleX(0.9260);transform-origin:0 0;-webkit-text-stroke:0.4px currentColor;">0</span>
<span style="left:708.04px;top:464.56px;font-size:11.3px;line-height:11.3px;color:#1e1e1e;transform:scaleX(0.9260);transform-origin:0 0;-webkit-text-stroke:0.4px currentColor;">686,690</span>
<span style="left:775.71px;top:464.56px;font-size:11.3px;line-height:11.3px;color:#1e1e1e;transform:scaleX(0.9260);transform-origin:0 0;-webkit-text-stroke:0.4px currentColor;">(6,000)</span>
<span style="left:824.86px;top:464.56px;font-size:11.3px;line-height:11.3px;color:#1e1e1e;transform:scaleX(0.9260);transform-origin:0 0;-webkit-text-stroke:0.4px currentColor;">1,556,967</span>
<span style="left:895.3px;top:464.56px;font-size:11.3px;line-height:11.3px;color:#1e1e1e;transform:scaleX(0.9260);transform-origin:0 0;-webkit-text-stroke:0.4px currentColor;">(27,368)</span>
<span style="left:1021.59px;top:464.56px;font-size:11.3px;line-height:11.3px;color:#1e1e1e;transform:scaleX(0.9260);transform-origin:0 0;-webkit-text-stroke:0.4px currentColor;">122,795</span>
<span style="left:1116.26px;top:464.56px;font-size:11.3px;line-height:11.3px;color:#1e1e1e;transform:scaleX(0.9260);transform-origin:0 0;-webkit-text-stroke:0.4px currentColor;">0</span>
<span style="left:1158.55px;top:464.56px;font-size:11.3px;line-height:11.3px;color:#1e1e1e;transform:scaleX(0.9260);transform-origin:0 0;-webkit-text-stroke:0.4px currentColor;">3,684</span>
<span style="left:1194.04px;top:464.56px;font-size:11.3px;line-height:11.3px;color:#3a3a3a;transform:scaleX(0.9100);transform-origin:0 0;-webkit-text-stroke:0.4px currentColor;">(16,109)-14%</span>
<span style="left:1287.45px;top:464.56px;font-size:11.3px;line-height:11.3px;color:#1e1e1e;transform:scaleX(0.9260);transform-origin:0 0;-webkit-text-stroke:0.4px currentColor;">83,001</span>
<span style="left:988.63px;top:464.56px;font-size:11.3px;line-height:11.3px;color:#1e1e1e;transform:scaleX(0.8149);transform-origin:0 0;-webkit-text-stroke:0.4px currentColor;">%</span>
<span style="left:959.46px;top:464.56px;font-size:11.3px;line-height:11.3px;color:#1e1e1e;transform:scaleX(0.9260);transform-origin:0 0;-webkit-text-stroke:0.4px currentColor;">-1.85</span>
<span style="left:1335.71px;top:464.56px;font-size:11.3px;line-height:11.3px;color:#1e1e1e;transform:scaleX(0.9260);transform-origin:0 0;-webkit-text-stroke:0.4px currentColor;">end of 9</span>
<span style="left:30.41px;top:478.83px;font-size:11.3px;line-height:11.3px;color:#1e1e1e;transform:scaleX(0.9260);transform-origin:0 0;-webkit-text-stroke:0.4px currentColor;">end of 10</span>
<span style="left:100.09px;top:478.83px;font-size:11.3px;line-height:11.3px;color:#1e1e1e;transform:scaleX(0.9260);transform-origin:0 0;-webkit-text-stroke:0.4px currentColor;">64</span>
<span style="left:143.79px;top:478.83px;font-size:11.3px;line-height:11.3px;color:#1e1e1e;transform:scaleX(0.9260);transform-origin:0 0;-webkit-text-stroke:0.4px currentColor;">182,068</span>
<span style="left:211.41px;top:478.83px;font-size:11.3px;line-height:11.3px;color:#1e1e1e;transform:scaleX(0.9260);transform-origin:0 0;-webkit-text-stroke:0.4px currentColor;">(8,000)</span>
<span style="left:269.09px;top:478.83px;font-size:11.3px;line-height:11.3px;color:#1e1e1e;transform:scaleX(0.9260);transform-origin:0 0;-webkit-text-stroke:0.4px currentColor;">345,714</span>
<span style="left:336.81px;top:478.83px;font-size:11.3px;line-height:11.3px;color:#1e1e1e;transform:scaleX(0.9260);transform-origin:0 0;-webkit-text-stroke:0.4px currentColor;">(7,560)</span>
<span style="left:394.64px;top:478.83px;font-size:11.3px;line-height:11.3px;color:#1e1e1e;transform:scaleX(0.9260);transform-origin:0 0;-webkit-text-stroke:0.4px currentColor;">135,979</span>
<span style="left:462.21px;top:478.83px;font-size:11.3px;line-height:11.3px;color:#1e1e1e;transform:scaleX(0.9260);transform-origin:0 0;-webkit-text-stroke:0.4px currentColor;">(6,000)</span>
<span style="left:519.94px;top:478.83px;font-size:11.3px;line-height:11.3px;color:#1e1e1e;transform:scaleX(0.9260);transform-origin:0 0;-webkit-text-stroke:0.4px currentColor;">250,000</span>
<span style="left:582.64px;top:478.83px;font-size:11.3px;line-height:11.3px;color:#1e1e1e;transform:scaleX(0.9260);transform-origin:0 0;-webkit-text-stroke:0.4px currentColor;">503,400</span>
<span style="left:677.36px;top:478.83px;font-size:11.3px;line-height:11.3px;color:#1e1e1e;transform:scaleX(0.9260);transform-origin:0 0;-webkit-text-stroke:0.4px currentColor;">0</span>
<span style="left:708.09px;top:478.83px;font-size:11.3px;line-height:11.3px;color:#1e1e1e;transform:scaleX(0.9260);transform-origin:0 0;-webkit-text-stroke:0.4px currentColor;">727,025</span>
<span style="left:775.71px;top:478.83px;font-size:11.3px;line-height:11.3px;color:#1e1e1e;transform:scaleX(0.9260);transform-origin:0 0;-webkit-text-stroke:0.4px currentColor;">(6,000)</span>
<span style="left:824.75px;top:478.83px;font-size:11.3px;line-height:11.3px;color:#1e1e1e;transform:scaleX(0.9260);transform-origin:0 0;-webkit-text-stroke:0.4px currentColor;">1,640,786</span>
<span style="left:895.3px;top:478.83px;font-size:11.3px;line-height:11.3px;color:#1e1e1e;transform:scaleX(0.9260);transform-origin:0 0;-webkit-text-stroke:0.4px currentColor;">(27,560)</span>
<span style="left:1021.7px;top:478.83px;font-size:11.3px;line-height:11.3px;color:#1e1e1e;transform:scaleX(0.9260);transform-origin:0 0;-webkit-text-stroke:0.4px currentColor;">125,987</span>
<span style="left:1116.26px;top:478.83px;font-size:11.3px;line-height:11.3px;color:#1e1e1e;transform:scaleX(0.9260);transform-origin:0 0;-webkit-text-stroke:0.4px currentColor;">0</span>
<span style="left:1158.61px;top:478.83px;font-size:11.3px;line-height:11.3px;color:#1e1e1e;transform:scaleX(0.9260);transform-origin:0 0;-webkit-text-stroke:0.4px currentColor;">3,780</span>
<span style="left:1194.04px;top:478.83px;font-size:11.3px;line-height:11.3px;color:#3a3a3a;transform:scaleX(0.9100);transform-origin:0 0;-webkit-text-stroke:0.4px currentColor;">(16,595)-14%</span>
<span style="left:1287.5px;top:478.83px;font-size:11.3px;line-height:11.3px;color:#1e1e1e;transform:scaleX(0.9260);transform-origin:0 0;-webkit-text-stroke:0.4px currentColor;">85,612</span>
<span style="left:988.63px;top:478.83px;font-size:11.3px;line-height:11.3px;color:#1e1e1e;transform:scaleX(0.8149);transform-origin:0 0;-webkit-text-stroke:0.4px currentColor;">%</span>
<span style="left:959.57px;top:478.83px;font-size:11.3px;line-height:11.3px;color:#1e1e1e;transform:scaleX(0.9260);transform-origin:0 0;-webkit-text-stroke:0.4px currentColor;">-1.77</span>
<span style="left:1332.76px;top:478.83px;font-size:11.3px;line-height:11.3px;color:#1e1e1e;transform:scaleX(0.9260);transform-origin:0 0;-webkit-text-stroke:0.4px currentColor;">end of 10</span>
<span style="left:30.85px;top:493.11px;font-size:11.3px;line-height:11.3px;color:#1e1e1e;transform:scaleX(0.9260);transform-origin:0 0;-webkit-text-stroke:0.4px currentColor;">end of 11</span>
<span style="left:100.14px;top:493.11px;font-size:11.3px;line-height:11.3px;color:#1e1e1e;transform:scaleX(0.9260);transform-origin:0 0;-webkit-text-stroke:0.4px currentColor;">65</span>
<span style="left:143.84px;top:493.11px;font-size:11.3px;line-height:11.3px;color:#1e1e1e;transform:scaleX(0.9260);transform-origin:0 0;-webkit-text-stroke:0.4px currentColor;">199,171</span>
<span style="left:211.41px;top:493.11px;font-size:11.3px;line-height:11.3px;color:#1e1e1e;transform:scaleX(0.9260);transform-origin:0 0;-webkit-text-stroke:0.4px currentColor;">(8,000)</span>
<span style="left:269.24px;top:493.11px;font-size:11.3px;line-height:11.3px;color:#1e1e1e;transform:scaleX(0.9260);transform-origin:0 0;-webkit-text-stroke:0.4px currentColor;">363,841</span>
<span style="left:336.81px;top:493.11px;font-size:11.3px;line-height:11.3px;color:#1e1e1e;transform:scaleX(0.9260);transform-origin:0 0;-webkit-text-stroke:0.4px currentColor;">(7,756)</span>
<span style="left:394.59px;top:493.11px;font-size:11.3px;line-height:11.3px;color:#1e1e1e;transform:scaleX(0.9260);transform-origin:0 0;-webkit-text-stroke:0.4px currentColor;">146,058</span>
<span style="left:462.21px;top:493.11px;font-size:11.3px;line-height:11.3px;color:#1e1e1e;transform:scaleX(0.9260);transform-origin:0 0;-webkit-text-stroke:0.4px currentColor;">(6,000)</span>
<span style="left:519.94px;top:493.11px;font-size:11.3px;line-height:11.3px;color:#1e1e1e;transform:scaleX(0.9260);transform-origin:0 0;-webkit-text-stroke:0.4px currentColor;">250,000</span>
<span style="left:582.64px;top:493.11px;font-size:11.3px;line-height:11.3px;color:#1e1e1e;transform:scaleX(0.9260);transform-origin:0 0;-webkit-text-stroke:0.4px currentColor;">503,400</span>
<span style="left:677.36px;top:493.11px;font-size:11.3px;line-height:11.3px;color:#1e1e1e;transform:scaleX(0.9260);transform-origin:0 0;-webkit-text-stroke:0.4px currentColor;">0</span>
<span style="left:708.09px;top:493.11px;font-size:11.3px;line-height:11.3px;color:#1e1e1e;transform:scaleX(0.9260);transform-origin:0 0;-webkit-text-stroke:0.4px currentColor;">769,376</span>
<span style="left:775.71px;top:493.11px;font-size:11.3px;line-height:11.3px;color:#1e1e1e;transform:scaleX(0.9260);transform-origin:0 0;-webkit-text-stroke:0.4px currentColor;">(6,000)</span>
<span style="left:824.86px;top:493.11px;font-size:11.3px;line-height:11.3px;color:#1e1e1e;transform:scaleX(0.9260);transform-origin:0 0;-webkit-text-stroke:0.4px currentColor;">1,728,447</span>
<span style="left:895.3px;top:493.11px;font-size:11.3px;line-height:11.3px;color:#1e1e1e;transform:scaleX(0.9260);transform-origin:0 0;-webkit-text-stroke:0.4px currentColor;">(27,756)</span>
<span style="left:1021.59px;top:493.11px;font-size:11.3px;line-height:11.3px;color:#1e1e1e;transform:scaleX(0.9260);transform-origin:0 0;-webkit-text-stroke:0.4px currentColor;">129,263</span>
<span style="left:1116.26px;top:493.11px;font-size:11.3px;line-height:11.3px;color:#1e1e1e;transform:scaleX(0.9260);transform-origin:0 0;-webkit-text-stroke:0.4px currentColor;">0</span>
<span style="left:1158.66px;top:493.11px;font-size:11.3px;line-height:11.3px;color:#1e1e1e;transform:scaleX(0.9260);transform-origin:0 0;-webkit-text-stroke:0.4px currentColor;">3,878</span>
<span style="left:1194.04px;top:493.11px;font-size:11.3px;line-height:11.3px;color:#3a3a3a;transform:scaleX(0.9100);transform-origin:0 0;-webkit-text-stroke:0.4px currentColor;">(16,580)-13%</span>
<span style="left:1287.4px;top:493.11px;font-size:11.3px;line-height:11.3px;color:#1e1e1e;transform:scaleX(0.9260);transform-origin:0 0;-webkit-text-stroke:0.4px currentColor;">88,805</span>
<span style="left:988.63px;top:493.11px;font-size:11.3px;line-height:11.3px;color:#1e1e1e;transform:scaleX(0.8149);transform-origin:0 0;-webkit-text-stroke:0.4px currentColor;">%</span>
<span style="left:959.51px;top:493.11px;font-size:11.3px;line-height:11.3px;color:#1e1e1e;transform:scaleX(0.9260);transform-origin:0 0;-webkit-text-stroke:0.4px currentColor;">-1.69</span>
<span style="left:1333.2px;top:493.11px;font-size:11.3px;line-height:11.3px;color:#1e1e1e;transform:scaleX(0.9260);transform-origin:0 0;-webkit-text-stroke:0.4px currentColor;">end of 11</span>
<span style="left:30.49px;top:507.39px;font-size:11.3px;line-height:11.3px;color:#1e1e1e;transform:scaleX(0.9260);transform-origin:0 0;-webkit-text-stroke:0.4px currentColor;">end of 12</span>
<span style="left:100.14px;top:507.39px;font-size:11.3px;line-height:11.3px;color:#1e1e1e;transform:scaleX(0.9260);transform-origin:0 0;-webkit-text-stroke:0.4px currentColor;">66</span>
<span style="left:143.74px;top:507.39px;font-size:11.3px;line-height:11.3px;color:#1e1e1e;transform:scaleX(0.9260);transform-origin:0 0;-webkit-text-stroke:0.4px currentColor;">217,130</span>
<span style="left:211.41px;top:507.39px;font-size:11.3px;line-height:11.3px;color:#1e1e1e;transform:scaleX(0.9260);transform-origin:0 0;-webkit-text-stroke:0.4px currentColor;">(8,000)</span>
<span style="left:269.09px;top:507.39px;font-size:11.3px;line-height:11.3px;color:#1e1e1e;transform:scaleX(0.9260);transform-origin:0 0;-webkit-text-stroke:0.4px currentColor;">382,714</span>
<span style="left:336.81px;top:507.39px;font-size:11.3px;line-height:11.3px;color:#1e1e1e;transform:scaleX(0.9260);transform-origin:0 0;-webkit-text-stroke:0.4px currentColor;">(7,958)</span>
<span style="left:394.54px;top:507.39px;font-size:11.3px;line-height:11.3px;color:#1e1e1e;transform:scaleX(0.9260);transform-origin:0 0;-webkit-text-stroke:0.4px currentColor;">156,440</span>
<span style="left:462.21px;top:507.39px;font-size:11.3px;line-height:11.3px;color:#1e1e1e;transform:scaleX(0.9260);transform-origin:0 0;-webkit-text-stroke:0.4px currentColor;">(6,000)</span>
<span style="left:519.99px;top:507.39px;font-size:11.3px;line-height:11.3px;color:#1e1e1e;transform:scaleX(0.9260);transform-origin:0 0;-webkit-text-stroke:0.4px currentColor;">221,306</span>
<span style="left:614.66px;top:507.39px;font-size:11.3px;line-height:11.3px;color:#1e1e1e;transform:scaleX(0.9260);transform-origin:0 0;-webkit-text-stroke:0.4px currentColor;">0</span>
<span style="left:651.09px;top:507.39px;font-size:11.3px;line-height:11.3px;color:#1e1e1e;transform:scaleX(0.9260);transform-origin:0 0;-webkit-text-stroke:0.4px currentColor;">28,694</span>
<span style="left:708.09px;top:507.39px;font-size:11.3px;line-height:11.3px;color:#1e1e1e;transform:scaleX(0.9260);transform-origin:0 0;-webkit-text-stroke:0.4px currentColor;">813,845</span>
<span style="left:775.71px;top:507.39px;font-size:11.3px;line-height:11.3px;color:#1e1e1e;transform:scaleX(0.9260);transform-origin:0 0;-webkit-text-stroke:0.4px currentColor;">(6,000)</span>
<span style="left:824.75px;top:507.39px;font-size:11.3px;line-height:11.3px;color:#1e1e1e;transform:scaleX(0.9260);transform-origin:0 0;-webkit-text-stroke:0.4px currentColor;">1,791,435</span>
<span style="left:916.6px;top:507.39px;font-size:11.3px;line-height:11.3px;color:#1e1e1e;transform:scaleX(0.9260);transform-origin:0 0;-webkit-text-stroke:0.4px currentColor;">736</span>
<span style="left:1021.49px;top:507.39px;font-size:11.3px;line-height:11.3px;color:#1e1e1e;transform:scaleX(0.9260);transform-origin:0 0;-webkit-text-stroke:0.4px currentColor;">132,624</span>
<span style="left:1116.26px;top:507.39px;font-size:11.3px;line-height:11.3px;color:#1e1e1e;transform:scaleX(0.9260);transform-origin:0 0;-webkit-text-stroke:0.4px currentColor;">0</span>
<span style="left:1158.71px;top:507.39px;font-size:11.3px;line-height:11.3px;color:#1e1e1e;transform:scaleX(0.9260);transform-origin:0 0;-webkit-text-stroke:0.4px currentColor;">3,979</span>
<span style="left:1194.04px;top:507.39px;font-size:11.3px;line-height:11.3px;color:#3a3a3a;transform:scaleX(0.9100);transform-origin:0 0;-webkit-text-stroke:0.4px currentColor;">(23,548)-15%</span>
<span style="left:1282.32px;top:507.39px;font-size:11.3px;line-height:11.3px;color:#1e1e1e;transform:scaleX(0.9260);transform-origin:0 0;-webkit-text-stroke:0.4px currentColor;">113,790</span>
<span style="left:988.63px;top:507.39px;font-size:11.3px;line-height:11.3px;color:#1e1e1e;transform:scaleX(0.8149);transform-origin:0 0;-webkit-text-stroke:0.4px currentColor;">%</span>
<span style="left:962.86px;top:507.39px;font-size:11.3px;line-height:11.3px;color:#1e1e1e;transform:scaleX(0.9260);transform-origin:0 0;-webkit-text-stroke:0.4px currentColor;">0.04</span>
<span style="left:1332.84px;top:507.39px;font-size:11.3px;line-height:11.3px;color:#1e1e1e;transform:scaleX(0.9260);transform-origin:0 0;-webkit-text-stroke:0.4px currentColor;">end of 12</span>
<span style="left:30.43px;top:521.67px;font-size:11.3px;line-height:11.3px;color:#1e1e1e;transform:scaleX(0.9260);transform-origin:0 0;-webkit-text-stroke:0.4px currentColor;">end of 13</span>
<span style="left:100.19px;top:521.67px;font-size:11.3px;line-height:11.3px;color:#1e1e1e;transform:scaleX(0.9260);transform-origin:0 0;-webkit-text-stroke:0.4px currentColor;">67</span>
<span style="left:143.79px;top:521.67px;font-size:11.3px;line-height:11.3px;color:#1e1e1e;transform:scaleX(0.9260);transform-origin:0 0;-webkit-text-stroke:0.4px currentColor;">227,986</span>
<span style="left:238.46px;top:521.67px;font-size:11.3px;line-height:11.3px;color:#1e1e1e;transform:scaleX(0.9260);transform-origin:0 0;-webkit-text-stroke:0.4px currentColor;">0</span>
<span style="left:269.19px;top:521.67px;font-size:11.3px;line-height:11.3px;color:#1e1e1e;transform:scaleX(0.9260);transform-origin:0 0;-webkit-text-stroke:0.4px currentColor;">394,196</span>
<span style="left:363.86px;top:521.67px;font-size:11.3px;line-height:11.3px;color:#1e1e1e;transform:scaleX(0.9260);transform-origin:0 0;-webkit-text-stroke:0.4px currentColor;">0</span>
<span style="left:394.59px;top:521.67px;font-size:11.3px;line-height:11.3px;color:#1e1e1e;transform:scaleX(0.9260);transform-origin:0 0;-webkit-text-stroke:0.4px currentColor;">161,133</span>
<span style="left:489.26px;top:521.67px;font-size:11.3px;line-height:11.3px;color:#1e1e1e;transform:scaleX(0.9260);transform-origin:0 0;-webkit-text-stroke:0.4px currentColor;">0</span>
<span style="left:520.1px;top:521.67px;font-size:11.3px;line-height:11.3px;color:#1e1e1e;transform:scaleX(0.9260);transform-origin:0 0;-webkit-text-stroke:0.4px currentColor;">192,612</span>
<span style="left:614.66px;top:521.67px;font-size:11.3px;line-height:11.3px;color:#1e1e1e;transform:scaleX(0.9260);transform-origin:0 0;-webkit-text-stroke:0.4px currentColor;">0</span>
<span style="left:651.09px;top:521.67px;font-size:11.3px;line-height:11.3px;color:#1e1e1e;transform:scaleX(0.9260);transform-origin:0 0;-webkit-text-stroke:0.4px currentColor;">28,694</span>
<span style="left:708.2px;top:521.67px;font-size:11.3px;line-height:11.3px;color:#1e1e1e;transform:scaleX(0.9260);transform-origin:0 0;-webkit-text-stroke:0.4px currentColor;">854,537</span>
<span style="left:802.76px;top:521.67px;font-size:11.3px;line-height:11.3px;color:#1e1e1e;transform:scaleX(0.9260);transform-origin:0 0;-webkit-text-stroke:0.4px currentColor;">0</span>
<span style="left:824.75px;top:521.67px;font-size:11.3px;line-height:11.3px;color:#1e1e1e;transform:scaleX(0.9260);transform-origin:0 0;-webkit-text-stroke:0.4px currentColor;">1,830,465</span>
<span style="left:901.89px;top:521.67px;font-size:11.3px;line-height:11.3px;color:#1e1e1e;transform:scaleX(0.9260);transform-origin:0 0;-webkit-text-stroke:0.4px currentColor;">28,694</span>
<span style="left:1053.56px;top:521.67px;font-size:11.3px;line-height:11.3px;color:#1e1e1e;transform:scaleX(0.9260);transform-origin:0 0;-webkit-text-stroke:0.4px currentColor;">0</span>
<span style="left:1090.2px;top:521.67px;font-size:11.3px;line-height:11.3px;color:#1e1e1e;transform:scaleX(0.9260);transform-origin:0 0;-webkit-text-stroke:0.4px currentColor;">27,287</span>
<span style="left:1178.96px;top:521.67px;font-size:11.3px;line-height:11.3px;color:#1e1e1e;transform:scaleX(0.9260);transform-origin:0 0;-webkit-text-stroke:0.4px currentColor;">0</span>
<span style="left:1205.46px;top:521.67px;font-size:11.3px;line-height:11.3px;color:#3a3a3a;transform:scaleX(0.9100);transform-origin:0 0;-webkit-text-stroke:0.4px currentColor;">(1,854)-3%</span>
<span style="left:1287.5px;top:521.67px;font-size:11.3px;line-height:11.3px;color:#1e1e1e;transform:scaleX(0.9260);transform-origin:0 0;-webkit-text-stroke:0.4px currentColor;">54,127</span>
<span style="left:988.63px;top:521.67px;font-size:11.3px;line-height:11.3px;color:#1e1e1e;transform:scaleX(0.8149);transform-origin:0 0;-webkit-text-stroke:0.4px currentColor;">%</span>
<span style="left:962.91px;top:521.67px;font-size:11.3px;line-height:11.3px;color:#1e1e1e;transform:scaleX(0.9260);transform-origin:0 0;-webkit-text-stroke:0.4px currentColor;">1.60</span>
<span style="left:1332.78px;top:521.67px;font-size:11.3px;line-height:11.3px;color:#1e1e1e;transform:scaleX(0.9260);transform-origin:0 0;-webkit-text-stroke:0.4px currentColor;">end of 13</span>
<span style="left:30.38px;top:535.95px;font-size:11.3px;line-height:11.3px;color:#1e1e1e;transform:scaleX(0.9260);transform-origin:0 0;-webkit-text-stroke:0.4px currentColor;">end of 14</span>
<span style="left:100.14px;top:535.95px;font-size:11.3px;line-height:11.3px;color:#1e1e1e;transform:scaleX(0.9260);transform-origin:0 0;-webkit-text-stroke:0.4px currentColor;">68</span>
<span style="left:143.79px;top:535.95px;font-size:11.3px;line-height:11.3px;color:#1e1e1e;transform:scaleX(0.9260);transform-origin:0 0;-webkit-text-stroke:0.4px currentColor;">239,386</span>
<span style="left:238.46px;top:535.95px;font-size:11.3px;line-height:11.3px;color:#1e1e1e;transform:scaleX(0.9260);transform-origin:0 0;-webkit-text-stroke:0.4px currentColor;">0</span>
<span style="left:269.3px;top:535.95px;font-size:11.3px;line-height:11.3px;color:#1e1e1e;transform:scaleX(0.9260);transform-origin:0 0;-webkit-text-stroke:0.4px currentColor;">406,022</span>
<span style="left:363.86px;top:535.95px;font-size:11.3px;line-height:11.3px;color:#1e1e1e;transform:scaleX(0.9260);transform-origin:0 0;-webkit-text-stroke:0.4px currentColor;">0</span>
<span style="left:394.7px;top:535.95px;font-size:11.3px;line-height:11.3px;color:#1e1e1e;transform:scaleX(0.9260);transform-origin:0 0;-webkit-text-stroke:0.4px currentColor;">165,967</span>
<span style="left:489.26px;top:535.95px;font-size:11.3px;line-height:11.3px;color:#1e1e1e;transform:scaleX(0.9260);transform-origin:0 0;-webkit-text-stroke:0.4px currentColor;">0</span>
<span style="left:520.04px;top:535.95px;font-size:11.3px;line-height:11.3px;color:#1e1e1e;transform:scaleX(0.9260);transform-origin:0 0;-webkit-text-stroke:0.4px currentColor;">163,919</span>
<span style="left:614.66px;top:535.95px;font-size:11.3px;line-height:11.3px;color:#1e1e1e;transform:scaleX(0.9260);transform-origin:0 0;-webkit-text-stroke:0.4px currentColor;">0</span>
<span style="left:651.09px;top:535.95px;font-size:11.3px;line-height:11.3px;color:#1e1e1e;transform:scaleX(0.9260);transform-origin:0 0;-webkit-text-stroke:0.4px currentColor;">28,694</span>
<span style="left:707.99px;top:535.95px;font-size:11.3px;line-height:11.3px;color:#1e1e1e;transform:scaleX(0.9260);transform-origin:0 0;-webkit-text-stroke:0.4px currentColor;">897,264</span>
<span style="left:802.76px;top:535.95px;font-size:11.3px;line-height:11.3px;color:#1e1e1e;transform:scaleX(0.9260);transform-origin:0 0;-webkit-text-stroke:0.4px currentColor;">0</span>
<span style="left:824.86px;top:535.95px;font-size:11.3px;line-height:11.3px;color:#1e1e1e;transform:scaleX(0.9260);transform-origin:0 0;-webkit-text-stroke:0.4px currentColor;">1,872,557</span>
<span style="left:901.89px;top:535.95px;font-size:11.3px;line-height:11.3px;color:#1e1e1e;transform:scaleX(0.9260);transform-origin:0 0;-webkit-text-stroke:0.4px currentColor;">28,694</span>
<span style="left:1053.56px;top:535.95px;font-size:11.3px;line-height:11.3px;color:#1e1e1e;transform:scaleX(0.9260);transform-origin:0 0;-webkit-text-stroke:0.4px currentColor;">0</span>
<span style="left:1090.1px;top:535.95px;font-size:11.3px;line-height:11.3px;color:#1e1e1e;transform:scaleX(0.9260);transform-origin:0 0;-webkit-text-stroke:0.4px currentColor;">27,996</span>
<span style="left:1178.96px;top:535.95px;font-size:11.3px;line-height:11.3px;color:#1e1e1e;transform:scaleX(0.9260);transform-origin:0 0;-webkit-text-stroke:0.4px currentColor;">0</span>
<span style="left:1205.46px;top:535.95px;font-size:11.3px;line-height:11.3px;color:#3a3a3a;transform:scaleX(0.9100);transform-origin:0 0;-webkit-text-stroke:0.4px currentColor;">(1,835)-3%</span>
<span style="left:1287.4px;top:535.95px;font-size:11.3px;line-height:11.3px;color:#1e1e1e;transform:scaleX(0.9260);transform-origin:0 0;-webkit-text-stroke:0.4px currentColor;">54,855</span>
<span style="left:988.63px;top:535.95px;font-size:11.3px;line-height:11.3px;color:#1e1e1e;transform:scaleX(0.8149);transform-origin:0 0;-webkit-text-stroke:0.4px currentColor;">%</span>
<span style="left:963.07px;top:535.95px;font-size:11.3px;line-height:11.3px;color:#1e1e1e;transform:scaleX(0.9260);transform-origin:0 0;-webkit-text-stroke:0.4px currentColor;">1.57</span>
<span style="left:1332.73px;top:535.95px;font-size:11.3px;line-height:11.3px;color:#1e1e1e;transform:scaleX(0.9260);transform-origin:0 0;-webkit-text-stroke:0.4px currentColor;">end of 14</span>
<span style="left:30.43px;top:550.22px;font-size:11.3px;line-height:11.3px;color:#1e1e1e;transform:scaleX(0.9260);transform-origin:0 0;-webkit-text-stroke:0.4px currentColor;">end of 15</span>
<span style="left:100.17px;top:550.22px;font-size:11.3px;line-height:11.3px;color:#1e1e1e;transform:scaleX(0.9260);transform-origin:0 0;-webkit-text-stroke:0.4px currentColor;">69</span>
<span style="left:143.79px;top:550.22px;font-size:11.3px;line-height:11.3px;color:#1e1e1e;transform:scaleX(0.9260);transform-origin:0 0;-webkit-text-stroke:0.4px currentColor;">251,355</span>
<span style="left:238.46px;top:550.22px;font-size:11.3px;line-height:11.3px;color:#1e1e1e;transform:scaleX(0.9260);transform-origin:0 0;-webkit-text-stroke:0.4px currentColor;">0</span>
<span style="left:269.3px;top:550.22px;font-size:11.3px;line-height:11.3px;color:#1e1e1e;transform:scaleX(0.9260);transform-origin:0 0;-webkit-text-stroke:0.4px currentColor;">418,202</span>
<span style="left:363.86px;top:550.22px;font-size:11.3px;line-height:11.3px;color:#1e1e1e;transform:scaleX(0.9260);transform-origin:0 0;-webkit-text-stroke:0.4px currentColor;">0</span>
<span style="left:394.59px;top:550.22px;font-size:11.3px;line-height:11.3px;color:#1e1e1e;transform:scaleX(0.9260);transform-origin:0 0;-webkit-text-stroke:0.4px currentColor;">170,946</span>
<span style="left:489.26px;top:550.22px;font-size:11.3px;line-height:11.3px;color:#1e1e1e;transform:scaleX(0.9260);transform-origin:0 0;-webkit-text-stroke:0.4px currentColor;">0</span>
<span style="left:519.99px;top:550.22px;font-size:11.3px;line-height:11.3px;color:#1e1e1e;transform:scaleX(0.9260);transform-origin:0 0;-webkit-text-stroke:0.4px currentColor;">135,225</span>
<span style="left:614.66px;top:550.22px;font-size:11.3px;line-height:11.3px;color:#1e1e1e;transform:scaleX(0.9260);transform-origin:0 0;-webkit-text-stroke:0.4px currentColor;">0</span>
<span style="left:651.09px;top:550.22px;font-size:11.3px;line-height:11.3px;color:#1e1e1e;transform:scaleX(0.9260);transform-origin:0 0;-webkit-text-stroke:0.4px currentColor;">28,694</span>
<span style="left:708.2px;top:550.22px;font-size:11.3px;line-height:11.3px;color:#1e1e1e;transform:scaleX(0.9260);transform-origin:0 0;-webkit-text-stroke:0.4px currentColor;">942,127</span>
<span style="left:802.76px;top:550.22px;font-size:11.3px;line-height:11.3px;color:#1e1e1e;transform:scaleX(0.9260);transform-origin:0 0;-webkit-text-stroke:0.4px currentColor;">0</span>
<span style="left:824.75px;top:550.22px;font-size:11.3px;line-height:11.3px;color:#1e1e1e;transform:scaleX(0.9260);transform-origin:0 0;-webkit-text-stroke:0.4px currentColor;">1,917,855</span>
<span style="left:901.89px;top:550.22px;font-size:11.3px;line-height:11.3px;color:#1e1e1e;transform:scaleX(0.9260);transform-origin:0 0;-webkit-text-stroke:0.4px currentColor;">28,694</span>
<span style="left:1053.56px;top:550.22px;font-size:11.3px;line-height:11.3px;color:#1e1e1e;transform:scaleX(0.9260);transform-origin:0 0;-webkit-text-stroke:0.4px currentColor;">0</span>
<span style="left:1089.99px;top:550.22px;font-size:11.3px;line-height:11.3px;color:#1e1e1e;transform:scaleX(0.9260);transform-origin:0 0;-webkit-text-stroke:0.4px currentColor;">28,724</span>
<span style="left:1178.96px;top:550.22px;font-size:11.3px;line-height:11.3px;color:#1e1e1e;transform:scaleX(0.9260);transform-origin:0 0;-webkit-text-stroke:0.4px currentColor;">0</span>
<span style="left:1205.46px;top:550.22px;font-size:11.3px;line-height:11.3px;color:#3a3a3a;transform:scaleX(0.9100);transform-origin:0 0;-webkit-text-stroke:0.4px currentColor;">(1,815)-3%</span>
<span style="left:1287.4px;top:550.22px;font-size:11.3px;line-height:11.3px;color:#1e1e1e;transform:scaleX(0.9260);transform-origin:0 0;-webkit-text-stroke:0.4px currentColor;">55,603</span>
<span style="left:988.63px;top:550.22px;font-size:11.3px;line-height:11.3px;color:#1e1e1e;transform:scaleX(0.8149);transform-origin:0 0;-webkit-text-stroke:0.4px currentColor;">%</span>
<span style="left:962.97px;top:550.22px;font-size:11.3px;line-height:11.3px;color:#1e1e1e;transform:scaleX(0.9260);transform-origin:0 0;-webkit-text-stroke:0.4px currentColor;">1.53</span>
<span style="left:1332.78px;top:550.22px;font-size:11.3px;line-height:11.3px;color:#1e1e1e;transform:scaleX(0.9260);transform-origin:0 0;-webkit-text-stroke:0.4px currentColor;">end of 15</span>
<span style="left:30.43px;top:564.5px;font-size:11.3px;line-height:11.3px;color:#1e1e1e;transform:scaleX(0.9260);transform-origin:0 0;-webkit-text-stroke:0.4px currentColor;">end of 16</span>
<span style="left:100.11px;top:564.5px;font-size:11.3px;line-height:11.3px;color:#1e1e1e;transform:scaleX(0.9260);transform-origin:0 0;-webkit-text-stroke:0.4px currentColor;">70</span>
<span style="left:143.9px;top:564.5px;font-size:11.3px;line-height:11.3px;color:#1e1e1e;transform:scaleX(0.9260);transform-origin:0 0;-webkit-text-stroke:0.4px currentColor;">263,922</span>
<span style="left:238.46px;top:564.5px;font-size:11.3px;line-height:11.3px;color:#1e1e1e;transform:scaleX(0.9260);transform-origin:0 0;-webkit-text-stroke:0.4px currentColor;">0</span>
<span style="left:269.19px;top:564.5px;font-size:11.3px;line-height:11.3px;color:#1e1e1e;transform:scaleX(0.9260);transform-origin:0 0;-webkit-text-stroke:0.4px currentColor;">430,748</span>
<span style="left:363.86px;top:564.5px;font-size:11.3px;line-height:11.3px;color:#1e1e1e;transform:scaleX(0.9260);transform-origin:0 0;-webkit-text-stroke:0.4px currentColor;">0</span>
<span style="left:394.59px;top:564.5px;font-size:11.3px;line-height:11.3px;color:#1e1e1e;transform:scaleX(0.9260);transform-origin:0 0;-webkit-text-stroke:0.4px currentColor;">176,075</span>
<span style="left:489.26px;top:564.5px;font-size:11.3px;line-height:11.3px;color:#1e1e1e;transform:scaleX(0.9260);transform-origin:0 0;-webkit-text-stroke:0.4px currentColor;">0</span>
<span style="left:520.04px;top:564.5px;font-size:11.3px;line-height:11.3px;color:#1e1e1e;transform:scaleX(0.9260);transform-origin:0 0;-webkit-text-stroke:0.4px currentColor;">106,531</span>
<span style="left:614.66px;top:564.5px;font-size:11.3px;line-height:11.3px;color:#1e1e1e;transform:scaleX(0.9260);transform-origin:0 0;-webkit-text-stroke:0.4px currentColor;">0</span>
<span style="left:651.09px;top:564.5px;font-size:11.3px;line-height:11.3px;color:#1e1e1e;transform:scaleX(0.9260);transform-origin:0 0;-webkit-text-stroke:0.4px currentColor;">28,694</span>
<span style="left:708.09px;top:564.5px;font-size:11.3px;line-height:11.3px;color:#1e1e1e;transform:scaleX(0.9260);transform-origin:0 0;-webkit-text-stroke:0.4px currentColor;">989,233</span>
<span style="left:802.76px;top:564.5px;font-size:11.3px;line-height:11.3px;color:#1e1e1e;transform:scaleX(0.9260);transform-origin:0 0;-webkit-text-stroke:0.4px currentColor;">0</span>
<span style="left:824.7px;top:564.5px;font-size:11.3px;line-height:11.3px;color:#1e1e1e;transform:scaleX(0.9260);transform-origin:0 0;-webkit-text-stroke:0.4px currentColor;">1,966,510</span>
<span style="left:901.89px;top:564.5px;font-size:11.3px;line-height:11.3px;color:#1e1e1e;transform:scaleX(0.9260);transform-origin:0 0;-webkit-text-stroke:0.4px currentColor;">28,694</span>
<span style="left:1053.56px;top:564.5px;font-size:11.3px;line-height:11.3px;color:#1e1e1e;transform:scaleX(0.9260);transform-origin:0 0;-webkit-text-stroke:0.4px currentColor;">0</span>
<span style="left:1090.15px;top:564.5px;font-size:11.3px;line-height:11.3px;color:#1e1e1e;transform:scaleX(0.9260);transform-origin:0 0;-webkit-text-stroke:0.4px currentColor;">29,471</span>
<span style="left:1178.96px;top:564.5px;font-size:11.3px;line-height:11.3px;color:#1e1e1e;transform:scaleX(0.9260);transform-origin:0 0;-webkit-text-stroke:0.4px currentColor;">0</span>
<span style="left:1205.46px;top:564.5px;font-size:11.3px;line-height:11.3px;color:#3a3a3a;transform:scaleX(0.9100);transform-origin:0 0;-webkit-text-stroke:0.4px currentColor;">(1,794)-3%</span>
<span style="left:1287.45px;top:564.5px;font-size:11.3px;line-height:11.3px;color:#1e1e1e;transform:scaleX(0.9260);transform-origin:0 0;-webkit-text-stroke:0.4px currentColor;">56,371</span>
<span style="left:988.63px;top:564.5px;font-size:11.3px;line-height:11.3px;color:#1e1e1e;transform:scaleX(0.8149);transform-origin:0 0;-webkit-text-stroke:0.4px currentColor;">%</span>
<span style="left:962.91px;top:564.5px;font-size:11.3px;line-height:11.3px;color:#1e1e1e;transform:scaleX(0.9260);transform-origin:0 0;-webkit-text-stroke:0.4px currentColor;">1.50</span>
<span style="left:1332.78px;top:564.5px;font-size:11.3px;line-height:11.3px;color:#1e1e1e;transform:scaleX(0.9260);transform-origin:0 0;-webkit-text-stroke:0.4px currentColor;">end of 16</span>
<span style="left:30.49px;top:578.78px;font-size:11.3px;line-height:11.3px;color:#1e1e1e;transform:scaleX(0.9260);transform-origin:0 0;-webkit-text-stroke:0.4px currentColor;">end of 17</span>
<span style="left:100.17px;top:578.78px;font-size:11.3px;line-height:11.3px;color:#1e1e1e;transform:scaleX(0.9260);transform-origin:0 0;-webkit-text-stroke:0.4px currentColor;">71</span>
<span style="left:144.63px;top:578.78px;font-size:11.3px;line-height:11.3px;color:#1e1e1e;transform:scaleX(0.9260);transform-origin:0 0;-webkit-text-stroke:0.4px currentColor;">277,119</span>
<span style="left:238.46px;top:578.78px;font-size:11.3px;line-height:11.3px;color:#1e1e1e;transform:scaleX(0.9260);transform-origin:0 0;-webkit-text-stroke:0.4px currentColor;">0</span>
<span style="left:269.24px;top:578.78px;font-size:11.3px;line-height:11.3px;color:#1e1e1e;transform:scaleX(0.9260);transform-origin:0 0;-webkit-text-stroke:0.4px currentColor;">443,671</span>
<span style="left:363.86px;top:578.78px;font-size:11.3px;line-height:11.3px;color:#1e1e1e;transform:scaleX(0.9260);transform-origin:0 0;-webkit-text-stroke:0.4px currentColor;">0</span>
<span style="left:394.7px;top:578.78px;font-size:11.3px;line-height:11.3px;color:#1e1e1e;transform:scaleX(0.9260);transform-origin:0 0;-webkit-text-stroke:0.4px currentColor;">181,357</span>
<span style="left:489.26px;top:578.78px;font-size:11.3px;line-height:11.3px;color:#1e1e1e;transform:scaleX(0.9260);transform-origin:0 0;-webkit-text-stroke:0.4px currentColor;">0</span>
<span style="left:525.9px;top:578.78px;font-size:11.3px;line-height:11.3px;color:#1e1e1e;transform:scaleX(0.9260);transform-origin:0 0;-webkit-text-stroke:0.4px currentColor;">77,837</span>
<span style="left:614.66px;top:578.78px;font-size:11.3px;line-height:11.3px;color:#1e1e1e;transform:scaleX(0.9260);transform-origin:0 0;-webkit-text-stroke:0.4px currentColor;">0</span>
<span style="left:651.09px;top:578.78px;font-size:11.3px;line-height:11.3px;color:#1e1e1e;transform:scaleX(0.9260);transform-origin:0 0;-webkit-text-stroke:0.4px currentColor;">28,694</span>
<span style="left:699.35px;top:578.78px;font-size:11.3px;line-height:11.3px;color:#1e1e1e;transform:scaleX(0.9260);transform-origin:0 0;-webkit-text-stroke:0.4px currentColor;">1,038,695</span>
<span style="left:802.76px;top:578.78px;font-size:11.3px;line-height:11.3px;color:#1e1e1e;transform:scaleX(0.9260);transform-origin:0 0;-webkit-text-stroke:0.4px currentColor;">0</span>
<span style="left:824.81px;top:578.78px;font-size:11.3px;line-height:11.3px;color:#1e1e1e;transform:scaleX(0.9260);transform-origin:0 0;-webkit-text-stroke:0.4px currentColor;">2,018,679</span>
<span style="left:901.89px;top:578.78px;font-size:11.3px;line-height:11.3px;color:#1e1e1e;transform:scaleX(0.9260);transform-origin:0 0;-webkit-text-stroke:0.4px currentColor;">28,694</span>
<span style="left:1053.56px;top:578.78px;font-size:11.3px;line-height:11.3px;color:#1e1e1e;transform:scaleX(0.9260);transform-origin:0 0;-webkit-text-stroke:0.4px currentColor;">0</span>
<span style="left:1090.2px;top:578.78px;font-size:11.3px;line-height:11.3px;color:#1e1e1e;transform:scaleX(0.9260);transform-origin:0 0;-webkit-text-stroke:0.4px currentColor;">30,237</span>
<span style="left:1178.96px;top:578.78px;font-size:11.3px;line-height:11.3px;color:#1e1e1e;transform:scaleX(0.9260);transform-origin:0 0;-webkit-text-stroke:0.4px currentColor;">0</span>
<span style="left:1205.46px;top:578.78px;font-size:11.3px;line-height:11.3px;color:#3a3a3a;transform:scaleX(0.9100);transform-origin:0 0;-webkit-text-stroke:0.4px currentColor;">(1,774)-3%</span>
<span style="left:1287.5px;top:578.78px;font-size:11.3px;line-height:11.3px;color:#1e1e1e;transform:scaleX(0.9260);transform-origin:0 0;-webkit-text-stroke:0.4px currentColor;">57,157</span>
<span style="left:988.63px;top:578.78px;font-size:11.3px;line-height:11.3px;color:#1e1e1e;transform:scaleX(0.8149);transform-origin:0 0;-webkit-text-stroke:0.4px currentColor;">%</span>
<span style="left:962.97px;top:578.78px;font-size:11.3px;line-height:11.3px;color:#1e1e1e;transform:scaleX(0.9260);transform-origin:0 0;-webkit-text-stroke:0.4px currentColor;">1.46</span>
<span style="left:1332.84px;top:578.78px;font-size:11.3px;line-height:11.3px;color:#1e1e1e;transform:scaleX(0.9260);transform-origin:0 0;-webkit-text-stroke:0.4px currentColor;">end of 17</span>
<span style="left:30.43px;top:593.06px;font-size:11.3px;line-height:11.3px;color:#1e1e1e;transform:scaleX(0.9260);transform-origin:0 0;-webkit-text-stroke:0.4px currentColor;">end of 18</span>
<span style="left:100.19px;top:593.06px;font-size:11.3px;line-height:11.3px;color:#1e1e1e;transform:scaleX(0.9260);transform-origin:0 0;-webkit-text-stroke:0.4px currentColor;">72</span>
<span style="left:143.79px;top:593.06px;font-size:11.3px;line-height:11.3px;color:#1e1e1e;transform:scaleX(0.9260);transform-origin:0 0;-webkit-text-stroke:0.4px currentColor;">290,975</span>
<span style="left:238.46px;top:593.06px;font-size:11.3px;line-height:11.3px;color:#1e1e1e;transform:scaleX(0.9260);transform-origin:0 0;-webkit-text-stroke:0.4px currentColor;">0</span>
<span style="left:269.24px;top:593.06px;font-size:11.3px;line-height:11.3px;color:#1e1e1e;transform:scaleX(0.9260);transform-origin:0 0;-webkit-text-stroke:0.4px currentColor;">456,981</span>
<span style="left:363.86px;top:593.06px;font-size:11.3px;line-height:11.3px;color:#1e1e1e;transform:scaleX(0.9260);transform-origin:0 0;-webkit-text-stroke:0.4px currentColor;">0</span>
<span style="left:394.59px;top:593.06px;font-size:11.3px;line-height:11.3px;color:#1e1e1e;transform:scaleX(0.9260);transform-origin:0 0;-webkit-text-stroke:0.4px currentColor;">186,798</span>
<span style="left:489.26px;top:593.06px;font-size:11.3px;line-height:11.3px;color:#1e1e1e;transform:scaleX(0.9260);transform-origin:0 0;-webkit-text-stroke:0.4px currentColor;">0</span>
<span style="left:525.69px;top:593.06px;font-size:11.3px;line-height:11.3px;color:#1e1e1e;transform:scaleX(0.9260);transform-origin:0 0;-webkit-text-stroke:0.4px currentColor;">49,144</span>
<span style="left:614.66px;top:593.06px;font-size:11.3px;line-height:11.3px;color:#1e1e1e;transform:scaleX(0.9260);transform-origin:0 0;-webkit-text-stroke:0.4px currentColor;">0</span>
<span style="left:651.09px;top:593.06px;font-size:11.3px;line-height:11.3px;color:#1e1e1e;transform:scaleX(0.9260);transform-origin:0 0;-webkit-text-stroke:0.4px currentColor;">28,694</span>
<span style="left:699.3px;top:593.06px;font-size:11.3px;line-height:11.3px;color:#1e1e1e;transform:scaleX(0.9260);transform-origin:0 0;-webkit-text-stroke:0.4px currentColor;">1,090,630</span>
<span style="left:802.76px;top:593.06px;font-size:11.3px;line-height:11.3px;color:#1e1e1e;transform:scaleX(0.9260);transform-origin:0 0;-webkit-text-stroke:0.4px currentColor;">0</span>
<span style="left:824.75px;top:593.06px;font-size:11.3px;line-height:11.3px;color:#1e1e1e;transform:scaleX(0.9260);transform-origin:0 0;-webkit-text-stroke:0.4px currentColor;">2,074,526</span>
<span style="left:901.89px;top:593.06px;font-size:11.3px;line-height:11.3px;color:#1e1e1e;transform:scaleX(0.9260);transform-origin:0 0;-webkit-text-stroke:0.4px currentColor;">28,694</span>
<span style="left:1053.56px;top:593.06px;font-size:11.3px;line-height:11.3px;color:#1e1e1e;transform:scaleX(0.9260);transform-origin:0 0;-webkit-text-stroke:0.4px currentColor;">0</span>
<span style="left:1089.99px;top:593.06px;font-size:11.3px;line-height:11.3px;color:#1e1e1e;transform:scaleX(0.9260);transform-origin:0 0;-webkit-text-stroke:0.4px currentColor;">31,024</span>
<span style="left:1178.96px;top:593.06px;font-size:11.3px;line-height:11.3px;color:#1e1e1e;transform:scaleX(0.9260);transform-origin:0 0;-webkit-text-stroke:0.4px currentColor;">0</span>
<span style="left:1205.46px;top:593.06px;font-size:11.3px;line-height:11.3px;color:#3a3a3a;transform:scaleX(0.9100);transform-origin:0 0;-webkit-text-stroke:0.4px currentColor;">(1,754)-3%</span>
<span style="left:1287.4px;top:593.06px;font-size:11.3px;line-height:11.3px;color:#1e1e1e;transform:scaleX(0.9260);transform-origin:0 0;-webkit-text-stroke:0.4px currentColor;">57,963</span>
<span style="left:988.63px;top:593.06px;font-size:11.3px;line-height:11.3px;color:#1e1e1e;transform:scaleX(0.8149);transform-origin:0 0;-webkit-text-stroke:0.4px currentColor;">%</span>
<span style="left:963.07px;top:593.06px;font-size:11.3px;line-height:11.3px;color:#1e1e1e;transform:scaleX(0.9260);transform-origin:0 0;-webkit-text-stroke:0.4px currentColor;">1.42</span>
<span style="left:1332.78px;top:593.06px;font-size:11.3px;line-height:11.3px;color:#1e1e1e;transform:scaleX(0.9260);transform-origin:0 0;-webkit-text-stroke:0.4px currentColor;">end of 18</span>
<span style="left:30.46px;top:607.33px;font-size:11.3px;line-height:11.3px;color:#1e1e1e;transform:scaleX(0.9260);transform-origin:0 0;-webkit-text-stroke:0.4px currentColor;">end of 19</span>
<span style="left:100.14px;top:607.33px;font-size:11.3px;line-height:11.3px;color:#1e1e1e;transform:scaleX(0.9260);transform-origin:0 0;-webkit-text-stroke:0.4px currentColor;">73</span>
<span style="left:143.79px;top:607.33px;font-size:11.3px;line-height:11.3px;color:#1e1e1e;transform:scaleX(0.9260);transform-origin:0 0;-webkit-text-stroke:0.4px currentColor;">305,523</span>
<span style="left:238.46px;top:607.33px;font-size:11.3px;line-height:11.3px;color:#1e1e1e;transform:scaleX(0.9260);transform-origin:0 0;-webkit-text-stroke:0.4px currentColor;">0</span>
<span style="left:269.14px;top:607.33px;font-size:11.3px;line-height:11.3px;color:#1e1e1e;transform:scaleX(0.9260);transform-origin:0 0;-webkit-text-stroke:0.4px currentColor;">470,690</span>
<span style="left:363.86px;top:607.33px;font-size:11.3px;line-height:11.3px;color:#1e1e1e;transform:scaleX(0.9260);transform-origin:0 0;-webkit-text-stroke:0.4px currentColor;">0</span>
<span style="left:394.7px;top:607.33px;font-size:11.3px;line-height:11.3px;color:#1e1e1e;transform:scaleX(0.9260);transform-origin:0 0;-webkit-text-stroke:0.4px currentColor;">192,402</span>
<span style="left:489.26px;top:607.33px;font-size:11.3px;line-height:11.3px;color:#1e1e1e;transform:scaleX(0.9260);transform-origin:0 0;-webkit-text-stroke:0.4px currentColor;">0</span>
<span style="left:525.75px;top:607.33px;font-size:11.3px;line-height:11.3px;color:#1e1e1e;transform:scaleX(0.9260);transform-origin:0 0;-webkit-text-stroke:0.4px currentColor;">20,450</span>
<span style="left:614.66px;top:607.33px;font-size:11.3px;line-height:11.3px;color:#1e1e1e;transform:scaleX(0.9260);transform-origin:0 0;-webkit-text-stroke:0.4px currentColor;">0</span>
<span style="left:651.09px;top:607.33px;font-size:11.3px;line-height:11.3px;color:#1e1e1e;transform:scaleX(0.9260);transform-origin:0 0;-webkit-text-stroke:0.4px currentColor;">28,694</span>
<span style="left:699.41px;top:607.33px;font-size:11.3px;line-height:11.3px;color:#1e1e1e;transform:scaleX(0.9260);transform-origin:0 0;-webkit-text-stroke:0.4px currentColor;">1,145,161</span>
<span style="left:802.76px;top:607.33px;font-size:11.3px;line-height:11.3px;color:#1e1e1e;transform:scaleX(0.9260);transform-origin:0 0;-webkit-text-stroke:0.4px currentColor;">0</span>
<span style="left:824.75px;top:607.33px;font-size:11.3px;line-height:11.3px;color:#1e1e1e;transform:scaleX(0.9260);transform-origin:0 0;-webkit-text-stroke:0.4px currentColor;">2,134,226</span>
<span style="left:901.89px;top:607.33px;font-size:11.3px;line-height:11.3px;color:#1e1e1e;transform:scaleX(0.9260);transform-origin:0 0;-webkit-text-stroke:0.4px currentColor;">28,694</span>
<span style="left:1053.56px;top:607.33px;font-size:11.3px;line-height:11.3px;color:#1e1e1e;transform:scaleX(0.9260);transform-origin:0 0;-webkit-text-stroke:0.4px currentColor;">0</span>
<span style="left:1090.05px;top:607.33px;font-size:11.3px;line-height:11.3px;color:#1e1e1e;transform:scaleX(0.9260);transform-origin:0 0;-webkit-text-stroke:0.4px currentColor;">31,830</span>
<span style="left:1178.96px;top:607.33px;font-size:11.3px;line-height:11.3px;color:#1e1e1e;transform:scaleX(0.9260);transform-origin:0 0;-webkit-text-stroke:0.4px currentColor;">0</span>
<span style="left:1205.46px;top:607.33px;font-size:11.3px;line-height:11.3px;color:#3a3a3a;transform:scaleX(0.9100);transform-origin:0 0;-webkit-text-stroke:0.4px currentColor;">(1,733)-3%</span>
<span style="left:1287.45px;top:607.33px;font-size:11.3px;line-height:11.3px;color:#1e1e1e;transform:scaleX(0.9260);transform-origin:0 0;-webkit-text-stroke:0.4px currentColor;">58,791</span>
<span style="left:988.63px;top:607.33px;font-size:11.3px;line-height:11.3px;color:#1e1e1e;transform:scaleX(0.8149);transform-origin:0 0;-webkit-text-stroke:0.4px currentColor;">%</span>
<span style="left:962.97px;top:607.33px;font-size:11.3px;line-height:11.3px;color:#1e1e1e;transform:scaleX(0.9260);transform-origin:0 0;-webkit-text-stroke:0.4px currentColor;">1.38</span>
<span style="left:1332.81px;top:607.33px;font-size:11.3px;line-height:11.3px;color:#1e1e1e;transform:scaleX(0.9260);transform-origin:0 0;-webkit-text-stroke:0.4px currentColor;">end of 19</span>
<span style="left:30.41px;top:621.61px;font-size:11.3px;line-height:11.3px;color:#1e1e1e;transform:scaleX(0.9260);transform-origin:0 0;-webkit-text-stroke:0.4px currentColor;">end of 20</span>
<span style="left:100.09px;top:621.61px;font-size:11.3px;line-height:11.3px;color:#1e1e1e;transform:scaleX(0.9260);transform-origin:0 0;-webkit-text-stroke:0.4px currentColor;">74</span>
<span style="left:143.84px;top:621.61px;font-size:11.3px;line-height:11.3px;color:#1e1e1e;transform:scaleX(0.9260);transform-origin:0 0;-webkit-text-stroke:0.4px currentColor;">320,799</span>
<span style="left:238.46px;top:621.61px;font-size:11.3px;line-height:11.3px;color:#1e1e1e;transform:scaleX(0.9260);transform-origin:0 0;-webkit-text-stroke:0.4px currentColor;">0</span>
<span style="left:270.03px;top:621.61px;font-size:11.3px;line-height:11.3px;color:#1e1e1e;transform:scaleX(0.9260);transform-origin:0 0;-webkit-text-stroke:0.4px currentColor;">484,811</span>
<span style="left:363.86px;top:621.61px;font-size:11.3px;line-height:11.3px;color:#1e1e1e;transform:scaleX(0.9260);transform-origin:0 0;-webkit-text-stroke:0.4px currentColor;">0</span>
<span style="left:394.49px;top:621.61px;font-size:11.3px;line-height:11.3px;color:#1e1e1e;transform:scaleX(0.9260);transform-origin:0 0;-webkit-text-stroke:0.4px currentColor;">198,174</span>
<span style="left:489.26px;top:621.61px;font-size:11.3px;line-height:11.3px;color:#1e1e1e;transform:scaleX(0.9260);transform-origin:0 0;-webkit-text-stroke:0.4px currentColor;">0</span>
<span style="left:551.96px;top:621.61px;font-size:11.3px;line-height:11.3px;color:#1e1e1e;transform:scaleX(0.9260);transform-origin:0 0;-webkit-text-stroke:0.4px currentColor;">0</span>
<span style="left:614.66px;top:621.61px;font-size:11.3px;line-height:11.3px;color:#1e1e1e;transform:scaleX(0.9260);transform-origin:0 0;-webkit-text-stroke:0.4px currentColor;">0</span>
<span style="left:651.09px;top:621.61px;font-size:11.3px;line-height:11.3px;color:#1e1e1e;transform:scaleX(0.9260);transform-origin:0 0;-webkit-text-stroke:0.4px currentColor;">28,694</span>
<span style="left:699.41px;top:621.61px;font-size:11.3px;line-height:11.3px;color:#1e1e1e;transform:scaleX(0.9260);transform-origin:0 0;-webkit-text-stroke:0.4px currentColor;">1,202,419</span>
<span style="left:802.76px;top:621.61px;font-size:11.3px;line-height:11.3px;color:#1e1e1e;transform:scaleX(0.9260);transform-origin:0 0;-webkit-text-stroke:0.4px currentColor;">0</span>
<span style="left:824.75px;top:621.61px;font-size:11.3px;line-height:11.3px;color:#1e1e1e;transform:scaleX(0.9260);transform-origin:0 0;-webkit-text-stroke:0.4px currentColor;">2,206,203</span>
<span style="left:901.89px;top:621.61px;font-size:11.3px;line-height:11.3px;color:#1e1e1e;transform:scaleX(0.9260);transform-origin:0 0;-webkit-text-stroke:0.4px currentColor;">28,694</span>
<span style="left:1053.56px;top:621.61px;font-size:11.3px;line-height:11.3px;color:#1e1e1e;transform:scaleX(0.9260);transform-origin:0 0;-webkit-text-stroke:0.4px currentColor;">0</span>
<span style="left:1090.1px;top:621.61px;font-size:11.3px;line-height:11.3px;color:#1e1e1e;transform:scaleX(0.9260);transform-origin:0 0;-webkit-text-stroke:0.4px currentColor;">32,658</span>
<span style="left:1178.96px;top:621.61px;font-size:11.3px;line-height:11.3px;color:#1e1e1e;transform:scaleX(0.9260);transform-origin:0 0;-webkit-text-stroke:0.4px currentColor;">0</span>
<span style="left:1205.46px;top:621.61px;font-size:11.3px;line-height:11.3px;color:#3a3a3a;transform:scaleX(0.9100);transform-origin:0 0;-webkit-text-stroke:0.4px currentColor;">(1,719)-3%</span>
<span style="left:1287.4px;top:621.61px;font-size:11.3px;line-height:11.3px;color:#1e1e1e;transform:scaleX(0.9260);transform-origin:0 0;-webkit-text-stroke:0.4px currentColor;">59,633</span>
<span style="left:988.63px;top:621.61px;font-size:11.3px;line-height:11.3px;color:#1e1e1e;transform:scaleX(0.8149);transform-origin:0 0;-webkit-text-stroke:0.4px currentColor;">%</span>
<span style="left:962.97px;top:621.61px;font-size:11.3px;line-height:11.3px;color:#1e1e1e;transform:scaleX(0.9260);transform-origin:0 0;-webkit-text-stroke:0.4px currentColor;">1.35</span>
<span style="left:1332.76px;top:621.61px;font-size:11.3px;line-height:11.3px;color:#1e1e1e;transform:scaleX(0.9260);transform-origin:0 0;-webkit-text-stroke:0.4px currentColor;">end of 20</span>
<span style="left:30.46px;top:635.89px;font-size:11.3px;line-height:11.3px;color:#1e1e1e;transform:scaleX(0.9260);transform-origin:0 0;-webkit-text-stroke:0.4px currentColor;">end of 21</span>
<span style="left:100.14px;top:635.89px;font-size:11.3px;line-height:11.3px;color:#1e1e1e;transform:scaleX(0.9260);transform-origin:0 0;-webkit-text-stroke:0.4px currentColor;">75</span>
<span style="left:143.84px;top:635.89px;font-size:11.3px;line-height:11.3px;color:#1e1e1e;transform:scaleX(0.9260);transform-origin:0 0;-webkit-text-stroke:0.4px currentColor;">336,839</span>
<span style="left:238.46px;top:635.89px;font-size:11.3px;line-height:11.3px;color:#1e1e1e;transform:scaleX(0.9260);transform-origin:0 0;-webkit-text-stroke:0.4px currentColor;">0</span>
<span style="left:269.19px;top:635.89px;font-size:11.3px;line-height:11.3px;color:#1e1e1e;transform:scaleX(0.9260);transform-origin:0 0;-webkit-text-stroke:0.4px currentColor;">479,648</span>
<span style="left:337.7px;top:635.89px;font-size:11.3px;line-height:11.3px;color:#1e1e1e;transform:scaleX(0.9260);transform-origin:0 0;-webkit-text-stroke:0.4px currentColor;">19,708</span>
<span style="left:395.43px;top:635.89px;font-size:11.3px;line-height:11.3px;color:#1e1e1e;transform:scaleX(0.9260);transform-origin:0 0;-webkit-text-stroke:0.4px currentColor;">204,119</span>
<span style="left:489.26px;top:635.89px;font-size:11.3px;line-height:11.3px;color:#1e1e1e;transform:scaleX(0.9260);transform-origin:0 0;-webkit-text-stroke:0.4px currentColor;">0</span>
<span style="left:551.96px;top:635.89px;font-size:11.3px;line-height:11.3px;color:#1e1e1e;transform:scaleX(0.9260);transform-origin:0 0;-webkit-text-stroke:0.4px currentColor;">0</span>
<span style="left:614.66px;top:635.89px;font-size:11.3px;line-height:11.3px;color:#1e1e1e;transform:scaleX(0.9260);transform-origin:0 0;-webkit-text-stroke:0.4px currentColor;">0</span>
<span style="left:651.09px;top:635.89px;font-size:11.3px;line-height:11.3px;color:#1e1e1e;transform:scaleX(0.9260);transform-origin:0 0;-webkit-text-stroke:0.4px currentColor;">28,694</span>
<span style="left:699.3px;top:635.89px;font-size:11.3px;line-height:11.3px;color:#1e1e1e;transform:scaleX(0.9260);transform-origin:0 0;-webkit-text-stroke:0.4px currentColor;">1,262,540</span>
<span style="left:802.76px;top:635.89px;font-size:11.3px;line-height:11.3px;color:#1e1e1e;transform:scaleX(0.9260);transform-origin:0 0;-webkit-text-stroke:0.4px currentColor;">0</span>
<span style="left:824.75px;top:635.89px;font-size:11.3px;line-height:11.3px;color:#1e1e1e;transform:scaleX(0.9260);transform-origin:0 0;-webkit-text-stroke:0.4px currentColor;">2,283,146</span>
<span style="left:902.1px;top:635.89px;font-size:11.3px;line-height:11.3px;color:#1e1e1e;transform:scaleX(0.9260);transform-origin:0 0;-webkit-text-stroke:0.4px currentColor;">48,402</span>
<span style="left:1053.56px;top:635.89px;font-size:11.3px;line-height:11.3px;color:#1e1e1e;transform:scaleX(0.9260);transform-origin:0 0;-webkit-text-stroke:0.4px currentColor;">0</span>
<span style="left:1090.2px;top:635.89px;font-size:11.3px;line-height:11.3px;color:#1e1e1e;transform:scaleX(0.9260);transform-origin:0 0;-webkit-text-stroke:0.4px currentColor;">33,507</span>
<span style="left:1178.96px;top:635.89px;font-size:11.3px;line-height:11.3px;color:#1e1e1e;transform:scaleX(0.9260);transform-origin:0 0;-webkit-text-stroke:0.4px currentColor;">0</span>
<span style="left:1205.46px;top:635.89px;font-size:11.3px;line-height:11.3px;color:#3a3a3a;transform:scaleX(0.9100);transform-origin:0 0;-webkit-text-stroke:0.4px currentColor;">(5,767)-7%</span>
<span style="left:1287.45px;top:635.89px;font-size:11.3px;line-height:11.3px;color:#1e1e1e;transform:scaleX(0.9260);transform-origin:0 0;-webkit-text-stroke:0.4px currentColor;">76,141</span>
<span style="left:988.63px;top:635.89px;font-size:11.3px;line-height:11.3px;color:#1e1e1e;transform:scaleX(0.8149);transform-origin:0 0;-webkit-text-stroke:0.4px currentColor;">%</span>
<span style="left:963.02px;top:635.89px;font-size:11.3px;line-height:11.3px;color:#1e1e1e;transform:scaleX(0.9260);transform-origin:0 0;-webkit-text-stroke:0.4px currentColor;">2.19</span>
<span style="left:1332.81px;top:635.89px;font-size:11.3px;line-height:11.3px;color:#1e1e1e;transform:scaleX(0.9260);transform-origin:0 0;-webkit-text-stroke:0.4px currentColor;">end of 21</span>
<span style="left:30.49px;top:650.17px;font-size:11.3px;line-height:11.3px;color:#1e1e1e;transform:scaleX(0.9260);transform-origin:0 0;-webkit-text-stroke:0.4px currentColor;">end of 22</span>
<span style="left:100.14px;top:650.17px;font-size:11.3px;line-height:11.3px;color:#1e1e1e;transform:scaleX(0.9260);transform-origin:0 0;-webkit-text-stroke:0.4px currentColor;">76</span>
<span style="left:143.84px;top:650.17px;font-size:11.3px;line-height:11.3px;color:#1e1e1e;transform:scaleX(0.9260);transform-origin:0 0;-webkit-text-stroke:0.4px currentColor;">353,681</span>
<span style="left:238.46px;top:650.17px;font-size:11.3px;line-height:11.3px;color:#1e1e1e;transform:scaleX(0.9260);transform-origin:0 0;-webkit-text-stroke:0.4px currentColor;">0</span>
<span style="left:269.24px;top:650.17px;font-size:11.3px;line-height:11.3px;color:#1e1e1e;transform:scaleX(0.9260);transform-origin:0 0;-webkit-text-stroke:0.4px currentColor;">473,799</span>
<span style="left:337.7px;top:650.17px;font-size:11.3px;line-height:11.3px;color:#1e1e1e;transform:scaleX(0.9260);transform-origin:0 0;-webkit-text-stroke:0.4px currentColor;">20,238</span>
<span style="left:394.7px;top:650.17px;font-size:11.3px;line-height:11.3px;color:#1e1e1e;transform:scaleX(0.9260);transform-origin:0 0;-webkit-text-stroke:0.4px currentColor;">210,242</span>
<span style="left:489.26px;top:650.17px;font-size:11.3px;line-height:11.3px;color:#1e1e1e;transform:scaleX(0.9260);transform-origin:0 0;-webkit-text-stroke:0.4px currentColor;">0</span>
<span style="left:551.96px;top:650.17px;font-size:11.3px;line-height:11.3px;color:#1e1e1e;transform:scaleX(0.9260);transform-origin:0 0;-webkit-text-stroke:0.4px currentColor;">0</span>
<span style="left:614.66px;top:650.17px;font-size:11.3px;line-height:11.3px;color:#1e1e1e;transform:scaleX(0.9260);transform-origin:0 0;-webkit-text-stroke:0.4px currentColor;">0</span>
<span style="left:651.09px;top:650.17px;font-size:11.3px;line-height:11.3px;color:#1e1e1e;transform:scaleX(0.9260);transform-origin:0 0;-webkit-text-stroke:0.4px currentColor;">28,694</span>
<span style="left:699.46px;top:650.17px;font-size:11.3px;line-height:11.3px;color:#1e1e1e;transform:scaleX(0.9260);transform-origin:0 0;-webkit-text-stroke:0.4px currentColor;">1,325,667</span>
<span style="left:802.76px;top:650.17px;font-size:11.3px;line-height:11.3px;color:#1e1e1e;transform:scaleX(0.9260);transform-origin:0 0;-webkit-text-stroke:0.4px currentColor;">0</span>
<span style="left:824.81px;top:650.17px;font-size:11.3px;line-height:11.3px;color:#1e1e1e;transform:scaleX(0.9260);transform-origin:0 0;-webkit-text-stroke:0.4px currentColor;">2,363,389</span>
<span style="left:902.1px;top:650.17px;font-size:11.3px;line-height:11.3px;color:#1e1e1e;transform:scaleX(0.9260);transform-origin:0 0;-webkit-text-stroke:0.4px currentColor;">48,932</span>
<span style="left:1053.56px;top:650.17px;font-size:11.3px;line-height:11.3px;color:#1e1e1e;transform:scaleX(0.9260);transform-origin:0 0;-webkit-text-stroke:0.4px currentColor;">0</span>
<span style="left:1090.1px;top:650.17px;font-size:11.3px;line-height:11.3px;color:#1e1e1e;transform:scaleX(0.9260);transform-origin:0 0;-webkit-text-stroke:0.4px currentColor;">34,378</span>
<span style="left:1178.96px;top:650.17px;font-size:11.3px;line-height:11.3px;color:#1e1e1e;transform:scaleX(0.9260);transform-origin:0 0;-webkit-text-stroke:0.4px currentColor;">0</span>
<span style="left:1205.46px;top:650.17px;font-size:11.3px;line-height:11.3px;color:#3a3a3a;transform:scaleX(0.9100);transform-origin:0 0;-webkit-text-stroke:0.4px currentColor;">(5,854)-7%</span>
<span style="left:1287.4px;top:650.17px;font-size:11.3px;line-height:11.3px;color:#1e1e1e;transform:scaleX(0.9260);transform-origin:0 0;-webkit-text-stroke:0.4px currentColor;">77,456</span>
<span style="left:988.63px;top:650.17px;font-size:11.3px;line-height:11.3px;color:#1e1e1e;transform:scaleX(0.8149);transform-origin:0 0;-webkit-text-stroke:0.4px currentColor;">%</span>
<span style="left:962.86px;top:650.17px;font-size:11.3px;line-height:11.3px;color:#1e1e1e;transform:scaleX(0.9260);transform-origin:0 0;-webkit-text-stroke:0.4px currentColor;">2.14</span>
<span style="left:1332.84px;top:650.17px;font-size:11.3px;line-height:11.3px;color:#1e1e1e;transform:scaleX(0.9260);transform-origin:0 0;-webkit-text-stroke:0.4px currentColor;">end of 22</span>
<span style="left:30.43px;top:664.45px;font-size:11.3px;line-height:11.3px;color:#1e1e1e;transform:scaleX(0.9260);transform-origin:0 0;-webkit-text-stroke:0.4px currentColor;">end of 23</span>
<span style="left:100.19px;top:664.45px;font-size:11.3px;line-height:11.3px;color:#1e1e1e;transform:scaleX(0.9260);transform-origin:0 0;-webkit-text-stroke:0.4px currentColor;">77</span>
<span style="left:143.79px;top:664.45px;font-size:11.3px;line-height:11.3px;color:#1e1e1e;transform:scaleX(0.9260);transform-origin:0 0;-webkit-text-stroke:0.4px currentColor;">371,365</span>
<span style="left:238.46px;top:664.45px;font-size:11.3px;line-height:11.3px;color:#1e1e1e;transform:scaleX(0.9260);transform-origin:0 0;-webkit-text-stroke:0.4px currentColor;">0</span>
<span style="left:269.19px;top:664.45px;font-size:11.3px;line-height:11.3px;color:#1e1e1e;transform:scaleX(0.9260);transform-origin:0 0;-webkit-text-stroke:0.4px currentColor;">467,323</span>
<span style="left:337.65px;top:664.45px;font-size:11.3px;line-height:11.3px;color:#1e1e1e;transform:scaleX(0.9260);transform-origin:0 0;-webkit-text-stroke:0.4px currentColor;">20,690</span>
<span style="left:394.54px;top:664.45px;font-size:11.3px;line-height:11.3px;color:#1e1e1e;transform:scaleX(0.9260);transform-origin:0 0;-webkit-text-stroke:0.4px currentColor;">216,550</span>
<span style="left:489.26px;top:664.45px;font-size:11.3px;line-height:11.3px;color:#1e1e1e;transform:scaleX(0.9260);transform-origin:0 0;-webkit-text-stroke:0.4px currentColor;">0</span>
<span style="left:551.96px;top:664.45px;font-size:11.3px;line-height:11.3px;color:#1e1e1e;transform:scaleX(0.9260);transform-origin:0 0;-webkit-text-stroke:0.4px currentColor;">0</span>
<span style="left:614.66px;top:664.45px;font-size:11.3px;line-height:11.3px;color:#1e1e1e;transform:scaleX(0.9260);transform-origin:0 0;-webkit-text-stroke:0.4px currentColor;">0</span>
<span style="left:651.09px;top:664.45px;font-size:11.3px;line-height:11.3px;color:#1e1e1e;transform:scaleX(0.9260);transform-origin:0 0;-webkit-text-stroke:0.4px currentColor;">28,694</span>
<span style="left:699.3px;top:664.45px;font-size:11.3px;line-height:11.3px;color:#1e1e1e;transform:scaleX(0.9260);transform-origin:0 0;-webkit-text-stroke:0.4px currentColor;">1,391,950</span>
<span style="left:802.76px;top:664.45px;font-size:11.3px;line-height:11.3px;color:#1e1e1e;transform:scaleX(0.9260);transform-origin:0 0;-webkit-text-stroke:0.4px currentColor;">0</span>
<span style="left:824.75px;top:664.45px;font-size:11.3px;line-height:11.3px;color:#1e1e1e;transform:scaleX(0.9260);transform-origin:0 0;-webkit-text-stroke:0.4px currentColor;">2,447,188</span>
<span style="left:901.89px;top:664.45px;font-size:11.3px;line-height:11.3px;color:#1e1e1e;transform:scaleX(0.9260);transform-origin:0 0;-webkit-text-stroke:0.4px currentColor;">49,384</span>
<span style="left:1053.56px;top:664.45px;font-size:11.3px;line-height:11.3px;color:#1e1e1e;transform:scaleX(0.9260);transform-origin:0 0;-webkit-text-stroke:0.4px currentColor;">0</span>
<span style="left:1090.2px;top:664.45px;font-size:11.3px;line-height:11.3px;color:#1e1e1e;transform:scaleX(0.9260);transform-origin:0 0;-webkit-text-stroke:0.4px currentColor;">35,272</span>
<span style="left:1178.96px;top:664.45px;font-size:11.3px;line-height:11.3px;color:#1e1e1e;transform:scaleX(0.9260);transform-origin:0 0;-webkit-text-stroke:0.4px currentColor;">0</span>
<span style="left:1205.46px;top:664.45px;font-size:11.3px;line-height:11.3px;color:#3a3a3a;transform:scaleX(0.9100);transform-origin:0 0;-webkit-text-stroke:0.4px currentColor;">(5,933)-7%</span>
<span style="left:1287.4px;top:664.45px;font-size:11.3px;line-height:11.3px;color:#1e1e1e;transform:scaleX(0.9260);transform-origin:0 0;-webkit-text-stroke:0.4px currentColor;">78,723</span>
<span style="left:988.63px;top:664.45px;font-size:11.3px;line-height:11.3px;color:#1e1e1e;transform:scaleX(0.8149);transform-origin:0 0;-webkit-text-stroke:0.4px currentColor;">%</span>
<span style="left:963.02px;top:664.45px;font-size:11.3px;line-height:11.3px;color:#1e1e1e;transform:scaleX(0.9260);transform-origin:0 0;-webkit-text-stroke:0.4px currentColor;">2.09</span>
<span style="left:1332.78px;top:664.45px;font-size:11.3px;line-height:11.3px;color:#1e1e1e;transform:scaleX(0.9260);transform-origin:0 0;-webkit-text-stroke:0.4px currentColor;">end of 23</span>
<span style="left:30.38px;top:678.72px;font-size:11.3px;line-height:11.3px;color:#1e1e1e;transform:scaleX(0.9260);transform-origin:0 0;-webkit-text-stroke:0.4px currentColor;">end of 24</span>
<span style="left:100.14px;top:678.72px;font-size:11.3px;line-height:11.3px;color:#1e1e1e;transform:scaleX(0.9260);transform-origin:0 0;-webkit-text-stroke:0.4px currentColor;">78</span>
<span style="left:143.69px;top:678.72px;font-size:11.3px;line-height:11.3px;color:#1e1e1e;transform:scaleX(0.9260);transform-origin:0 0;-webkit-text-stroke:0.4px currentColor;">389,934</span>
<span style="left:238.46px;top:678.72px;font-size:11.3px;line-height:11.3px;color:#1e1e1e;transform:scaleX(0.9260);transform-origin:0 0;-webkit-text-stroke:0.4px currentColor;">0</span>
<span style="left:269.14px;top:678.72px;font-size:11.3px;line-height:11.3px;color:#1e1e1e;transform:scaleX(0.9260);transform-origin:0 0;-webkit-text-stroke:0.4px currentColor;">460,100</span>
<span style="left:337.8px;top:678.72px;font-size:11.3px;line-height:11.3px;color:#1e1e1e;transform:scaleX(0.9260);transform-origin:0 0;-webkit-text-stroke:0.4px currentColor;">21,242</span>
<span style="left:394.59px;top:678.72px;font-size:11.3px;line-height:11.3px;color:#1e1e1e;transform:scaleX(0.9260);transform-origin:0 0;-webkit-text-stroke:0.4px currentColor;">223,046</span>
<span style="left:489.26px;top:678.72px;font-size:11.3px;line-height:11.3px;color:#1e1e1e;transform:scaleX(0.9260);transform-origin:0 0;-webkit-text-stroke:0.4px currentColor;">0</span>
<span style="left:551.96px;top:678.72px;font-size:11.3px;line-height:11.3px;color:#1e1e1e;transform:scaleX(0.9260);transform-origin:0 0;-webkit-text-stroke:0.4px currentColor;">0</span>
<span style="left:614.66px;top:678.72px;font-size:11.3px;line-height:11.3px;color:#1e1e1e;transform:scaleX(0.9260);transform-origin:0 0;-webkit-text-stroke:0.4px currentColor;">0</span>
<span style="left:651.09px;top:678.72px;font-size:11.3px;line-height:11.3px;color:#1e1e1e;transform:scaleX(0.9260);transform-origin:0 0;-webkit-text-stroke:0.4px currentColor;">28,694</span>
<span style="left:699.46px;top:678.72px;font-size:11.3px;line-height:11.3px;color:#1e1e1e;transform:scaleX(0.9260);transform-origin:0 0;-webkit-text-stroke:0.4px currentColor;">1,461,547</span>
<span style="left:802.76px;top:678.72px;font-size:11.3px;line-height:11.3px;color:#1e1e1e;transform:scaleX(0.9260);transform-origin:0 0;-webkit-text-stroke:0.4px currentColor;">0</span>
<span style="left:824.75px;top:678.72px;font-size:11.3px;line-height:11.3px;color:#1e1e1e;transform:scaleX(0.9260);transform-origin:0 0;-webkit-text-stroke:0.4px currentColor;">2,534,628</span>
<span style="left:902px;top:678.72px;font-size:11.3px;line-height:11.3px;color:#1e1e1e;transform:scaleX(0.9260);transform-origin:0 0;-webkit-text-stroke:0.4px currentColor;">49,936</span>
<span style="left:1053.56px;top:678.72px;font-size:11.3px;line-height:11.3px;color:#1e1e1e;transform:scaleX(0.9260);transform-origin:0 0;-webkit-text-stroke:0.4px currentColor;">0</span>
<span style="left:1090.15px;top:678.72px;font-size:11.3px;line-height:11.3px;color:#1e1e1e;transform:scaleX(0.9260);transform-origin:0 0;-webkit-text-stroke:0.4px currentColor;">36,189</span>
<span style="left:1178.96px;top:678.72px;font-size:11.3px;line-height:11.3px;color:#1e1e1e;transform:scaleX(0.9260);transform-origin:0 0;-webkit-text-stroke:0.4px currentColor;">0</span>
<span style="left:1205.46px;top:678.72px;font-size:11.3px;line-height:11.3px;color:#3a3a3a;transform:scaleX(0.9100);transform-origin:0 0;-webkit-text-stroke:0.4px currentColor;">(6,025)-7%</span>
<span style="left:1287.35px;top:678.72px;font-size:11.3px;line-height:11.3px;color:#1e1e1e;transform:scaleX(0.9260);transform-origin:0 0;-webkit-text-stroke:0.4px currentColor;">80,100</span>
<span style="left:988.63px;top:678.72px;font-size:11.3px;line-height:11.3px;color:#1e1e1e;transform:scaleX(0.8149);transform-origin:0 0;-webkit-text-stroke:0.4px currentColor;">%</span>
<span style="left:962.86px;top:678.72px;font-size:11.3px;line-height:11.3px;color:#1e1e1e;transform:scaleX(0.9260);transform-origin:0 0;-webkit-text-stroke:0.4px currentColor;">2.04</span>
<span style="left:1332.73px;top:678.72px;font-size:11.3px;line-height:11.3px;color:#1e1e1e;transform:scaleX(0.9260);transform-origin:0 0;-webkit-text-stroke:0.4px currentColor;">end of 24</span>
<span style="left:30.43px;top:693px;font-size:11.3px;line-height:11.3px;color:#1e1e1e;transform:scaleX(0.9260);transform-origin:0 0;-webkit-text-stroke:0.4px currentColor;">end of 25</span>
<span style="left:100.17px;top:693px;font-size:11.3px;line-height:11.3px;color:#1e1e1e;transform:scaleX(0.9260);transform-origin:0 0;-webkit-text-stroke:0.4px currentColor;">79</span>
<span style="left:143.74px;top:693px;font-size:11.3px;line-height:11.3px;color:#1e1e1e;transform:scaleX(0.9260);transform-origin:0 0;-webkit-text-stroke:0.4px currentColor;">409,430</span>
<span style="left:238.46px;top:693px;font-size:11.3px;line-height:11.3px;color:#1e1e1e;transform:scaleX(0.9260);transform-origin:0 0;-webkit-text-stroke:0.4px currentColor;">0</span>
<span style="left:269.19px;top:693px;font-size:11.3px;line-height:11.3px;color:#1e1e1e;transform:scaleX(0.9260);transform-origin:0 0;-webkit-text-stroke:0.4px currentColor;">452,098</span>
<span style="left:337.7px;top:693px;font-size:11.3px;line-height:11.3px;color:#1e1e1e;transform:scaleX(0.9260);transform-origin:0 0;-webkit-text-stroke:0.4px currentColor;">21,806</span>
<span style="left:394.59px;top:693px;font-size:11.3px;line-height:11.3px;color:#1e1e1e;transform:scaleX(0.9260);transform-origin:0 0;-webkit-text-stroke:0.4px currentColor;">229,738</span>
<span style="left:489.26px;top:693px;font-size:11.3px;line-height:11.3px;color:#1e1e1e;transform:scaleX(0.9260);transform-origin:0 0;-webkit-text-stroke:0.4px currentColor;">0</span>
<span style="left:551.96px;top:693px;font-size:11.3px;line-height:11.3px;color:#1e1e1e;transform:scaleX(0.9260);transform-origin:0 0;-webkit-text-stroke:0.4px currentColor;">0</span>
<span style="left:614.66px;top:693px;font-size:11.3px;line-height:11.3px;color:#1e1e1e;transform:scaleX(0.9260);transform-origin:0 0;-webkit-text-stroke:0.4px currentColor;">0</span>
<span style="left:651.09px;top:693px;font-size:11.3px;line-height:11.3px;color:#1e1e1e;transform:scaleX(0.9260);transform-origin:0 0;-webkit-text-stroke:0.4px currentColor;">28,694</span>
<span style="left:699.35px;top:693px;font-size:11.3px;line-height:11.3px;color:#1e1e1e;transform:scaleX(0.9260);transform-origin:0 0;-webkit-text-stroke:0.4px currentColor;">1,534,625</span>
<span style="left:802.76px;top:693px;font-size:11.3px;line-height:11.3px;color:#1e1e1e;transform:scaleX(0.9260);transform-origin:0 0;-webkit-text-stroke:0.4px currentColor;">0</span>
<span style="left:824.7px;top:693px;font-size:11.3px;line-height:11.3px;color:#1e1e1e;transform:scaleX(0.9260);transform-origin:0 0;-webkit-text-stroke:0.4px currentColor;">2,625,890</span>
<span style="left:902.05px;top:693px;font-size:11.3px;line-height:11.3px;color:#1e1e1e;transform:scaleX(0.9260);transform-origin:0 0;-webkit-text-stroke:0.4px currentColor;">50,499</span>
<span style="left:1053.56px;top:693px;font-size:11.3px;line-height:11.3px;color:#1e1e1e;transform:scaleX(0.9260);transform-origin:0 0;-webkit-text-stroke:0.4px currentColor;">0</span>
<span style="left:1090.05px;top:693px;font-size:11.3px;line-height:11.3px;color:#1e1e1e;transform:scaleX(0.9260);transform-origin:0 0;-webkit-text-stroke:0.4px currentColor;">37,130</span>
<span style="left:1178.96px;top:693px;font-size:11.3px;line-height:11.3px;color:#1e1e1e;transform:scaleX(0.9260);transform-origin:0 0;-webkit-text-stroke:0.4px currentColor;">0</span>
<span style="left:1205.46px;top:693px;font-size:11.3px;line-height:11.3px;color:#3a3a3a;transform:scaleX(0.9100);transform-origin:0 0;-webkit-text-stroke:0.4px currentColor;">(6,120)-7%</span>
<span style="left:1287.45px;top:693px;font-size:11.3px;line-height:11.3px;color:#1e1e1e;transform:scaleX(0.9260);transform-origin:0 0;-webkit-text-stroke:0.4px currentColor;">81,509</span>
<span style="left:988.63px;top:693px;font-size:11.3px;line-height:11.3px;color:#1e1e1e;transform:scaleX(0.8149);transform-origin:0 0;-webkit-text-stroke:0.4px currentColor;">%</span>
<span style="left:963.02px;top:693px;font-size:11.3px;line-height:11.3px;color:#1e1e1e;transform:scaleX(0.9260);transform-origin:0 0;-webkit-text-stroke:0.4px currentColor;">1.99</span>
<span style="left:1332.78px;top:693px;font-size:11.3px;line-height:11.3px;color:#1e1e1e;transform:scaleX(0.9260);transform-origin:0 0;-webkit-text-stroke:0.4px currentColor;">end of 25</span>
<span style="left:30.43px;top:707.28px;font-size:11.3px;line-height:11.3px;color:#1e1e1e;transform:scaleX(0.9260);transform-origin:0 0;-webkit-text-stroke:0.4px currentColor;">end of 26</span>
<span style="left:100.14px;top:707.28px;font-size:11.3px;line-height:11.3px;color:#1e1e1e;transform:scaleX(0.9260);transform-origin:0 0;-webkit-text-stroke:0.4px currentColor;">80</span>
<span style="left:143.9px;top:707.28px;font-size:11.3px;line-height:11.3px;color:#1e1e1e;transform:scaleX(0.9260);transform-origin:0 0;-webkit-text-stroke:0.4px currentColor;">429,902</span>
<span style="left:238.46px;top:707.28px;font-size:11.3px;line-height:11.3px;color:#1e1e1e;transform:scaleX(0.9260);transform-origin:0 0;-webkit-text-stroke:0.4px currentColor;">0</span>
<span style="left:269.14px;top:707.28px;font-size:11.3px;line-height:11.3px;color:#1e1e1e;transform:scaleX(0.9260);transform-origin:0 0;-webkit-text-stroke:0.4px currentColor;">443,280</span>
<span style="left:337.75px;top:707.28px;font-size:11.3px;line-height:11.3px;color:#1e1e1e;transform:scaleX(0.9260);transform-origin:0 0;-webkit-text-stroke:0.4px currentColor;">22,381</span>
<span style="left:394.54px;top:707.28px;font-size:11.3px;line-height:11.3px;color:#1e1e1e;transform:scaleX(0.9260);transform-origin:0 0;-webkit-text-stroke:0.4px currentColor;">236,630</span>
<span style="left:489.26px;top:707.28px;font-size:11.3px;line-height:11.3px;color:#1e1e1e;transform:scaleX(0.9260);transform-origin:0 0;-webkit-text-stroke:0.4px currentColor;">0</span>
<span style="left:551.96px;top:707.28px;font-size:11.3px;line-height:11.3px;color:#1e1e1e;transform:scaleX(0.9260);transform-origin:0 0;-webkit-text-stroke:0.4px currentColor;">0</span>
<span style="left:614.66px;top:707.28px;font-size:11.3px;line-height:11.3px;color:#1e1e1e;transform:scaleX(0.9260);transform-origin:0 0;-webkit-text-stroke:0.4px currentColor;">0</span>
<span style="left:651.09px;top:707.28px;font-size:11.3px;line-height:11.3px;color:#1e1e1e;transform:scaleX(0.9260);transform-origin:0 0;-webkit-text-stroke:0.4px currentColor;">28,694</span>
<span style="left:700.14px;top:707.28px;font-size:11.3px;line-height:11.3px;color:#1e1e1e;transform:scaleX(0.9260);transform-origin:0 0;-webkit-text-stroke:0.4px currentColor;">1,611,356</span>
<span style="left:802.76px;top:707.28px;font-size:11.3px;line-height:11.3px;color:#1e1e1e;transform:scaleX(0.9260);transform-origin:0 0;-webkit-text-stroke:0.4px currentColor;">0</span>
<span style="left:824.86px;top:707.28px;font-size:11.3px;line-height:11.3px;color:#1e1e1e;transform:scaleX(0.9260);transform-origin:0 0;-webkit-text-stroke:0.4px currentColor;">2,721,167</span>
<span style="left:902px;top:707.28px;font-size:11.3px;line-height:11.3px;color:#1e1e1e;transform:scaleX(0.9260);transform-origin:0 0;-webkit-text-stroke:0.4px currentColor;">51,075</span>
<span style="left:1053.56px;top:707.28px;font-size:11.3px;line-height:11.3px;color:#1e1e1e;transform:scaleX(0.9260);transform-origin:0 0;-webkit-text-stroke:0.4px currentColor;">0</span>
<span style="left:1090.1px;top:707.28px;font-size:11.3px;line-height:11.3px;color:#1e1e1e;transform:scaleX(0.9260);transform-origin:0 0;-webkit-text-stroke:0.4px currentColor;">38,095</span>
<span style="left:1178.96px;top:707.28px;font-size:11.3px;line-height:11.3px;color:#1e1e1e;transform:scaleX(0.9260);transform-origin:0 0;-webkit-text-stroke:0.4px currentColor;">0</span>
<span style="left:1205.46px;top:707.28px;font-size:11.3px;line-height:11.3px;color:#3a3a3a;transform:scaleX(0.9100);transform-origin:0 0;-webkit-text-stroke:0.4px currentColor;">(6,218)-7%</span>
<span style="left:1287.5px;top:707.28px;font-size:11.3px;line-height:11.3px;color:#1e1e1e;transform:scaleX(0.9260);transform-origin:0 0;-webkit-text-stroke:0.4px currentColor;">82,952</span>
<span style="left:988.63px;top:707.28px;font-size:11.3px;line-height:11.3px;color:#1e1e1e;transform:scaleX(0.8149);transform-origin:0 0;-webkit-text-stroke:0.4px currentColor;">%</span>
<span style="left:962.97px;top:707.28px;font-size:11.3px;line-height:11.3px;color:#1e1e1e;transform:scaleX(0.9260);transform-origin:0 0;-webkit-text-stroke:0.4px currentColor;">1.95</span>
<span style="left:1332.78px;top:707.28px;font-size:11.3px;line-height:11.3px;color:#1e1e1e;transform:scaleX(0.9260);transform-origin:0 0;-webkit-text-stroke:0.4px currentColor;">end of 26</span>
<span style="left:30.49px;top:721.56px;font-size:11.3px;line-height:11.3px;color:#1e1e1e;transform:scaleX(0.9260);transform-origin:0 0;-webkit-text-stroke:0.4px currentColor;">end of 27</span>
<span style="left:100.19px;top:721.56px;font-size:11.3px;line-height:11.3px;color:#1e1e1e;transform:scaleX(0.9260);transform-origin:0 0;-webkit-text-stroke:0.4px currentColor;">81</span>
<span style="left:143.9px;top:721.56px;font-size:11.3px;line-height:11.3px;color:#1e1e1e;transform:scaleX(0.9260);transform-origin:0 0;-webkit-text-stroke:0.4px currentColor;">451,397</span>
<span style="left:238.46px;top:721.56px;font-size:11.3px;line-height:11.3px;color:#1e1e1e;transform:scaleX(0.9260);transform-origin:0 0;-webkit-text-stroke:0.4px currentColor;">0</span>
<span style="left:269.19px;top:721.56px;font-size:11.3px;line-height:11.3px;color:#1e1e1e;transform:scaleX(0.9260);transform-origin:0 0;-webkit-text-stroke:0.4px currentColor;">433,728</span>
<span style="left:337.75px;top:721.56px;font-size:11.3px;line-height:11.3px;color:#1e1e1e;transform:scaleX(0.9260);transform-origin:0 0;-webkit-text-stroke:0.4px currentColor;">22,849</span>
<span style="left:394.64px;top:721.56px;font-size:11.3px;line-height:11.3px;color:#1e1e1e;transform:scaleX(0.9260);transform-origin:0 0;-webkit-text-stroke:0.4px currentColor;">243,729</span>
<span style="left:489.26px;top:721.56px;font-size:11.3px;line-height:11.3px;color:#1e1e1e;transform:scaleX(0.9260);transform-origin:0 0;-webkit-text-stroke:0.4px currentColor;">0</span>
<span style="left:551.96px;top:721.56px;font-size:11.3px;line-height:11.3px;color:#1e1e1e;transform:scaleX(0.9260);transform-origin:0 0;-webkit-text-stroke:0.4px currentColor;">0</span>
<span style="left:614.66px;top:721.56px;font-size:11.3px;line-height:11.3px;color:#1e1e1e;transform:scaleX(0.9260);transform-origin:0 0;-webkit-text-stroke:0.4px currentColor;">0</span>
<span style="left:651.09px;top:721.56px;font-size:11.3px;line-height:11.3px;color:#1e1e1e;transform:scaleX(0.9260);transform-origin:0 0;-webkit-text-stroke:0.4px currentColor;">28,694</span>
<span style="left:699.25px;top:721.56px;font-size:11.3px;line-height:11.3px;color:#1e1e1e;transform:scaleX(0.9260);transform-origin:0 0;-webkit-text-stroke:0.4px currentColor;">1,691,924</span>
<span style="left:802.76px;top:721.56px;font-size:11.3px;line-height:11.3px;color:#1e1e1e;transform:scaleX(0.9260);transform-origin:0 0;-webkit-text-stroke:0.4px currentColor;">0</span>
<span style="left:824.75px;top:721.56px;font-size:11.3px;line-height:11.3px;color:#1e1e1e;transform:scaleX(0.9260);transform-origin:0 0;-webkit-text-stroke:0.4px currentColor;">2,820,778</span>
<span style="left:902px;top:721.56px;font-size:11.3px;line-height:11.3px;color:#1e1e1e;transform:scaleX(0.9260);transform-origin:0 0;-webkit-text-stroke:0.4px currentColor;">51,543</span>
<span style="left:1053.56px;top:721.56px;font-size:11.3px;line-height:11.3px;color:#1e1e1e;transform:scaleX(0.9260);transform-origin:0 0;-webkit-text-stroke:0.4px currentColor;">0</span>
<span style="left:1090.1px;top:721.56px;font-size:11.3px;line-height:11.3px;color:#1e1e1e;transform:scaleX(0.9260);transform-origin:0 0;-webkit-text-stroke:0.4px currentColor;">39,086</span>
<span style="left:1178.96px;top:721.56px;font-size:11.3px;line-height:11.3px;color:#1e1e1e;transform:scaleX(0.9260);transform-origin:0 0;-webkit-text-stroke:0.4px currentColor;">0</span>
<span style="left:1205.46px;top:721.56px;font-size:11.3px;line-height:11.3px;color:#3a3a3a;transform:scaleX(0.9100);transform-origin:0 0;-webkit-text-stroke:0.4px currentColor;">(6,303)-7%</span>
<span style="left:1287.4px;top:721.56px;font-size:11.3px;line-height:11.3px;color:#1e1e1e;transform:scaleX(0.9260);transform-origin:0 0;-webkit-text-stroke:0.4px currentColor;">84,326</span>
<span style="left:988.63px;top:721.56px;font-size:11.3px;line-height:11.3px;color:#1e1e1e;transform:scaleX(0.8149);transform-origin:0 0;-webkit-text-stroke:0.4px currentColor;">%</span>
<span style="left:962.91px;top:721.56px;font-size:11.3px;line-height:11.3px;color:#1e1e1e;transform:scaleX(0.9260);transform-origin:0 0;-webkit-text-stroke:0.4px currentColor;">1.90</span>
<span style="left:1332.84px;top:721.56px;font-size:11.3px;line-height:11.3px;color:#1e1e1e;transform:scaleX(0.9260);transform-origin:0 0;-webkit-text-stroke:0.4px currentColor;">end of 27</span>
<span style="left:30.43px;top:735.83px;font-size:11.3px;line-height:11.3px;color:#1e1e1e;transform:scaleX(0.9260);transform-origin:0 0;-webkit-text-stroke:0.4px currentColor;">end of 28</span>
<span style="left:100.22px;top:735.83px;font-size:11.3px;line-height:11.3px;color:#1e1e1e;transform:scaleX(0.9260);transform-origin:0 0;-webkit-text-stroke:0.4px currentColor;">82</span>
<span style="left:143.9px;top:735.83px;font-size:11.3px;line-height:11.3px;color:#1e1e1e;transform:scaleX(0.9260);transform-origin:0 0;-webkit-text-stroke:0.4px currentColor;">473,967</span>
<span style="left:238.46px;top:735.83px;font-size:11.3px;line-height:11.3px;color:#1e1e1e;transform:scaleX(0.9260);transform-origin:0 0;-webkit-text-stroke:0.4px currentColor;">0</span>
<span style="left:269.19px;top:735.83px;font-size:11.3px;line-height:11.3px;color:#1e1e1e;transform:scaleX(0.9260);transform-origin:0 0;-webkit-text-stroke:0.4px currentColor;">423,296</span>
<span style="left:337.7px;top:735.83px;font-size:11.3px;line-height:11.3px;color:#1e1e1e;transform:scaleX(0.9260);transform-origin:0 0;-webkit-text-stroke:0.4px currentColor;">23,445</span>
<span style="left:394.54px;top:735.83px;font-size:11.3px;line-height:11.3px;color:#1e1e1e;transform:scaleX(0.9260);transform-origin:0 0;-webkit-text-stroke:0.4px currentColor;">251,040</span>
<span style="left:489.26px;top:735.83px;font-size:11.3px;line-height:11.3px;color:#1e1e1e;transform:scaleX(0.9260);transform-origin:0 0;-webkit-text-stroke:0.4px currentColor;">0</span>
<span style="left:551.96px;top:735.83px;font-size:11.3px;line-height:11.3px;color:#1e1e1e;transform:scaleX(0.9260);transform-origin:0 0;-webkit-text-stroke:0.4px currentColor;">0</span>
<span style="left:614.66px;top:735.83px;font-size:11.3px;line-height:11.3px;color:#1e1e1e;transform:scaleX(0.9260);transform-origin:0 0;-webkit-text-stroke:0.4px currentColor;">0</span>
<span style="left:651.09px;top:735.83px;font-size:11.3px;line-height:11.3px;color:#1e1e1e;transform:scaleX(0.9260);transform-origin:0 0;-webkit-text-stroke:0.4px currentColor;">28,694</span>
<span style="left:699.3px;top:735.83px;font-size:11.3px;line-height:11.3px;color:#1e1e1e;transform:scaleX(0.9260);transform-origin:0 0;-webkit-text-stroke:0.4px currentColor;">1,776,520</span>
<span style="left:802.76px;top:735.83px;font-size:11.3px;line-height:11.3px;color:#1e1e1e;transform:scaleX(0.9260);transform-origin:0 0;-webkit-text-stroke:0.4px currentColor;">0</span>
<span style="left:824.86px;top:735.83px;font-size:11.3px;line-height:11.3px;color:#1e1e1e;transform:scaleX(0.9260);transform-origin:0 0;-webkit-text-stroke:0.4px currentColor;">2,924,822</span>
<span style="left:902.05px;top:735.83px;font-size:11.3px;line-height:11.3px;color:#1e1e1e;transform:scaleX(0.9260);transform-origin:0 0;-webkit-text-stroke:0.4px currentColor;">52,139</span>
<span style="left:1053.56px;top:735.83px;font-size:11.3px;line-height:11.3px;color:#1e1e1e;transform:scaleX(0.9260);transform-origin:0 0;-webkit-text-stroke:0.4px currentColor;">0</span>
<span style="left:1090.2px;top:735.83px;font-size:11.3px;line-height:11.3px;color:#1e1e1e;transform:scaleX(0.9260);transform-origin:0 0;-webkit-text-stroke:0.4px currentColor;">40,102</span>
<span style="left:1178.96px;top:735.83px;font-size:11.3px;line-height:11.3px;color:#1e1e1e;transform:scaleX(0.9260);transform-origin:0 0;-webkit-text-stroke:0.4px currentColor;">0</span>
<span style="left:1205.46px;top:735.83px;font-size:11.3px;line-height:11.3px;color:#3a3a3a;transform:scaleX(0.9100);transform-origin:0 0;-webkit-text-stroke:0.4px currentColor;">(6,405)-7%</span>
<span style="left:1287.4px;top:735.83px;font-size:11.3px;line-height:11.3px;color:#1e1e1e;transform:scaleX(0.9260);transform-origin:0 0;-webkit-text-stroke:0.4px currentColor;">85,836</span>
<span style="left:988.63px;top:735.83px;font-size:11.3px;line-height:11.3px;color:#1e1e1e;transform:scaleX(0.8149);transform-origin:0 0;-webkit-text-stroke:0.4px currentColor;">%</span>
<span style="left:962.97px;top:735.83px;font-size:11.3px;line-height:11.3px;color:#1e1e1e;transform:scaleX(0.9260);transform-origin:0 0;-webkit-text-stroke:0.4px currentColor;">1.85</span>
<span style="left:1332.78px;top:735.83px;font-size:11.3px;line-height:11.3px;color:#1e1e1e;transform:scaleX(0.9260);transform-origin:0 0;-webkit-text-stroke:0.4px currentColor;">end of 28</span>
<span style="left:30.46px;top:750.11px;font-size:11.3px;line-height:11.3px;color:#1e1e1e;transform:scaleX(0.9260);transform-origin:0 0;-webkit-text-stroke:0.4px currentColor;">end of 29</span>
<span style="left:100.17px;top:750.11px;font-size:11.3px;line-height:11.3px;color:#1e1e1e;transform:scaleX(0.9260);transform-origin:0 0;-webkit-text-stroke:0.4px currentColor;">83</span>
<span style="left:143.79px;top:750.11px;font-size:11.3px;line-height:11.3px;color:#1e1e1e;transform:scaleX(0.9260);transform-origin:0 0;-webkit-text-stroke:0.4px currentColor;">497,665</span>
<span style="left:238.46px;top:750.11px;font-size:11.3px;line-height:11.3px;color:#1e1e1e;transform:scaleX(0.9260);transform-origin:0 0;-webkit-text-stroke:0.4px currentColor;">0</span>
<span style="left:269.24px;top:750.11px;font-size:11.3px;line-height:11.3px;color:#1e1e1e;transform:scaleX(0.9260);transform-origin:0 0;-webkit-text-stroke:0.4px currentColor;">412,079</span>
<span style="left:337.7px;top:750.11px;font-size:11.3px;line-height:11.3px;color:#1e1e1e;transform:scaleX(0.9260);transform-origin:0 0;-webkit-text-stroke:0.4px currentColor;">23,915</span>
<span style="left:394.7px;top:750.11px;font-size:11.3px;line-height:11.3px;color:#1e1e1e;transform:scaleX(0.9260);transform-origin:0 0;-webkit-text-stroke:0.4px currentColor;">258,572</span>
<span style="left:489.26px;top:750.11px;font-size:11.3px;line-height:11.3px;color:#1e1e1e;transform:scaleX(0.9260);transform-origin:0 0;-webkit-text-stroke:0.4px currentColor;">0</span>
<span style="left:551.96px;top:750.11px;font-size:11.3px;line-height:11.3px;color:#1e1e1e;transform:scaleX(0.9260);transform-origin:0 0;-webkit-text-stroke:0.4px currentColor;">0</span>
<span style="left:614.66px;top:750.11px;font-size:11.3px;line-height:11.3px;color:#1e1e1e;transform:scaleX(0.9260);transform-origin:0 0;-webkit-text-stroke:0.4px currentColor;">0</span>
<span style="left:651.09px;top:750.11px;font-size:11.3px;line-height:11.3px;color:#1e1e1e;transform:scaleX(0.9260);transform-origin:0 0;-webkit-text-stroke:0.4px currentColor;">28,694</span>
<span style="left:699.35px;top:750.11px;font-size:11.3px;line-height:11.3px;color:#1e1e1e;transform:scaleX(0.9260);transform-origin:0 0;-webkit-text-stroke:0.4px currentColor;">1,865,346</span>
<span style="left:802.76px;top:750.11px;font-size:11.3px;line-height:11.3px;color:#1e1e1e;transform:scaleX(0.9260);transform-origin:0 0;-webkit-text-stroke:0.4px currentColor;">0</span>
<span style="left:824.86px;top:750.11px;font-size:11.3px;line-height:11.3px;color:#1e1e1e;transform:scaleX(0.9260);transform-origin:0 0;-webkit-text-stroke:0.4px currentColor;">3,033,662</span>
<span style="left:902.05px;top:750.11px;font-size:11.3px;line-height:11.3px;color:#1e1e1e;transform:scaleX(0.9260);transform-origin:0 0;-webkit-text-stroke:0.4px currentColor;">52,609</span>
<span style="left:1053.56px;top:750.11px;font-size:11.3px;line-height:11.3px;color:#1e1e1e;transform:scaleX(0.9260);transform-origin:0 0;-webkit-text-stroke:0.4px currentColor;">0</span>
<span style="left:1090.1px;top:750.11px;font-size:11.3px;line-height:11.3px;color:#1e1e1e;transform:scaleX(0.9260);transform-origin:0 0;-webkit-text-stroke:0.4px currentColor;">41,145</span>
<span style="left:1178.96px;top:750.11px;font-size:11.3px;line-height:11.3px;color:#1e1e1e;transform:scaleX(0.9260);transform-origin:0 0;-webkit-text-stroke:0.4px currentColor;">0</span>
<span style="left:1205.46px;top:750.11px;font-size:11.3px;line-height:11.3px;color:#3a3a3a;transform:scaleX(0.9100);transform-origin:0 0;-webkit-text-stroke:0.4px currentColor;">(6,494)-7%</span>
<span style="left:1287.45px;top:750.11px;font-size:11.3px;line-height:11.3px;color:#1e1e1e;transform:scaleX(0.9260);transform-origin:0 0;-webkit-text-stroke:0.4px currentColor;">87,259</span>
<span style="left:988.63px;top:750.11px;font-size:11.3px;line-height:11.3px;color:#1e1e1e;transform:scaleX(0.8149);transform-origin:0 0;-webkit-text-stroke:0.4px currentColor;">%</span>
<span style="left:962.91px;top:750.11px;font-size:11.3px;line-height:11.3px;color:#1e1e1e;transform:scaleX(0.9260);transform-origin:0 0;-webkit-text-stroke:0.4px currentColor;">1.80</span>
<span style="left:1332.81px;top:750.11px;font-size:11.3px;line-height:11.3px;color:#1e1e1e;transform:scaleX(0.9260);transform-origin:0 0;-webkit-text-stroke:0.4px currentColor;">end of 29</span>
<span style="left:30.41px;top:764.39px;font-size:11.3px;line-height:11.3px;color:#1e1e1e;transform:scaleX(0.9260);transform-origin:0 0;-webkit-text-stroke:0.4px currentColor;">end of 30</span>
<span style="left:100.11px;top:764.39px;font-size:11.3px;line-height:11.3px;color:#1e1e1e;transform:scaleX(0.9260);transform-origin:0 0;-webkit-text-stroke:0.4px currentColor;">84</span>
<span style="left:143.79px;top:764.39px;font-size:11.3px;line-height:11.3px;color:#1e1e1e;transform:scaleX(0.9260);transform-origin:0 0;-webkit-text-stroke:0.4px currentColor;">522,548</span>
<span style="left:238.46px;top:764.39px;font-size:11.3px;line-height:11.3px;color:#1e1e1e;transform:scaleX(0.9260);transform-origin:0 0;-webkit-text-stroke:0.4px currentColor;">0</span>
<span style="left:269.19px;top:764.39px;font-size:11.3px;line-height:11.3px;color:#1e1e1e;transform:scaleX(0.9260);transform-origin:0 0;-webkit-text-stroke:0.4px currentColor;">399,913</span>
<span style="left:337.75px;top:764.39px;font-size:11.3px;line-height:11.3px;color:#1e1e1e;transform:scaleX(0.9260);transform-origin:0 0;-webkit-text-stroke:0.4px currentColor;">24,529</span>
<span style="left:394.64px;top:764.39px;font-size:11.3px;line-height:11.3px;color:#1e1e1e;transform:scaleX(0.9260);transform-origin:0 0;-webkit-text-stroke:0.4px currentColor;">266,329</span>
<span style="left:489.26px;top:764.39px;font-size:11.3px;line-height:11.3px;color:#1e1e1e;transform:scaleX(0.9260);transform-origin:0 0;-webkit-text-stroke:0.4px currentColor;">0</span>
<span style="left:551.96px;top:764.39px;font-size:11.3px;line-height:11.3px;color:#1e1e1e;transform:scaleX(0.9260);transform-origin:0 0;-webkit-text-stroke:0.4px currentColor;">0</span>
<span style="left:614.66px;top:764.39px;font-size:11.3px;line-height:11.3px;color:#1e1e1e;transform:scaleX(0.9260);transform-origin:0 0;-webkit-text-stroke:0.4px currentColor;">0</span>
<span style="left:651.09px;top:764.39px;font-size:11.3px;line-height:11.3px;color:#1e1e1e;transform:scaleX(0.9260);transform-origin:0 0;-webkit-text-stroke:0.4px currentColor;">28,694</span>
<span style="left:699.35px;top:764.39px;font-size:11.3px;line-height:11.3px;color:#1e1e1e;transform:scaleX(0.9260);transform-origin:0 0;-webkit-text-stroke:0.4px currentColor;">1,958,613</span>
<span style="left:802.76px;top:764.39px;font-size:11.3px;line-height:11.3px;color:#1e1e1e;transform:scaleX(0.9260);transform-origin:0 0;-webkit-text-stroke:0.4px currentColor;">0</span>
<span style="left:824.75px;top:764.39px;font-size:11.3px;line-height:11.3px;color:#1e1e1e;transform:scaleX(0.9260);transform-origin:0 0;-webkit-text-stroke:0.4px currentColor;">3,147,403</span>
<span style="left:902.1px;top:764.39px;font-size:11.3px;line-height:11.3px;color:#1e1e1e;transform:scaleX(0.9260);transform-origin:0 0;-webkit-text-stroke:0.4px currentColor;">53,222</span>
<span style="left:1053.56px;top:764.39px;font-size:11.3px;line-height:11.3px;color:#1e1e1e;transform:scaleX(0.9260);transform-origin:0 0;-webkit-text-stroke:0.4px currentColor;">0</span>
<span style="left:1089.99px;top:764.39px;font-size:11.3px;line-height:11.3px;color:#1e1e1e;transform:scaleX(0.9260);transform-origin:0 0;-webkit-text-stroke:0.4px currentColor;">42,214</span>
<span style="left:1178.96px;top:764.39px;font-size:11.3px;line-height:11.3px;color:#1e1e1e;transform:scaleX(0.9260);transform-origin:0 0;-webkit-text-stroke:0.4px currentColor;">0</span>
<span style="left:1205.46px;top:764.39px;font-size:11.3px;line-height:11.3px;color:#3a3a3a;transform:scaleX(0.9100);transform-origin:0 0;-webkit-text-stroke:0.4px currentColor;">(6,601)-7%</span>
<span style="left:1287.4px;top:764.39px;font-size:11.3px;line-height:11.3px;color:#1e1e1e;transform:scaleX(0.9260);transform-origin:0 0;-webkit-text-stroke:0.4px currentColor;">88,836</span>
<span style="left:988.63px;top:764.39px;font-size:11.3px;line-height:11.3px;color:#1e1e1e;transform:scaleX(0.8149);transform-origin:0 0;-webkit-text-stroke:0.4px currentColor;">%</span>
<span style="left:962.97px;top:764.39px;font-size:11.3px;line-height:11.3px;color:#1e1e1e;transform:scaleX(0.9260);transform-origin:0 0;-webkit-text-stroke:0.4px currentColor;">1.76</span>
<span style="left:1332.76px;top:764.39px;font-size:11.3px;line-height:11.3px;color:#1e1e1e;transform:scaleX(0.9260);transform-origin:0 0;-webkit-text-stroke:0.4px currentColor;">end of 30</span>
<span style="left:30.46px;top:778.67px;font-size:11.3px;line-height:11.3px;color:#1e1e1e;transform:scaleX(0.9260);transform-origin:0 0;-webkit-text-stroke:0.4px currentColor;">end of 31</span>
<span style="left:100.17px;top:778.67px;font-size:11.3px;line-height:11.3px;color:#1e1e1e;transform:scaleX(0.9260);transform-origin:0 0;-webkit-text-stroke:0.4px currentColor;">85</span>
<span style="left:143.79px;top:778.67px;font-size:11.3px;line-height:11.3px;color:#1e1e1e;transform:scaleX(0.9260);transform-origin:0 0;-webkit-text-stroke:0.4px currentColor;">548,676</span>
<span style="left:238.46px;top:778.67px;font-size:11.3px;line-height:11.3px;color:#1e1e1e;transform:scaleX(0.9260);transform-origin:0 0;-webkit-text-stroke:0.4px currentColor;">0</span>
<span style="left:269.19px;top:778.67px;font-size:11.3px;line-height:11.3px;color:#1e1e1e;transform:scaleX(0.9260);transform-origin:0 0;-webkit-text-stroke:0.4px currentColor;">386,916</span>
<span style="left:337.7px;top:778.67px;font-size:11.3px;line-height:11.3px;color:#1e1e1e;transform:scaleX(0.9260);transform-origin:0 0;-webkit-text-stroke:0.4px currentColor;">24,995</span>
<span style="left:394.64px;top:778.67px;font-size:11.3px;line-height:11.3px;color:#1e1e1e;transform:scaleX(0.9260);transform-origin:0 0;-webkit-text-stroke:0.4px currentColor;">274,319</span>
<span style="left:489.26px;top:778.67px;font-size:11.3px;line-height:11.3px;color:#1e1e1e;transform:scaleX(0.9260);transform-origin:0 0;-webkit-text-stroke:0.4px currentColor;">0</span>
<span style="left:551.96px;top:778.67px;font-size:11.3px;line-height:11.3px;color:#1e1e1e;transform:scaleX(0.9260);transform-origin:0 0;-webkit-text-stroke:0.4px currentColor;">0</span>
<span style="left:614.66px;top:778.67px;font-size:11.3px;line-height:11.3px;color:#1e1e1e;transform:scaleX(0.9260);transform-origin:0 0;-webkit-text-stroke:0.4px currentColor;">0</span>
<span style="left:651.09px;top:778.67px;font-size:11.3px;line-height:11.3px;color:#1e1e1e;transform:scaleX(0.9260);transform-origin:0 0;-webkit-text-stroke:0.4px currentColor;">28,694</span>
<span style="left:699.35px;top:778.67px;font-size:11.3px;line-height:11.3px;color:#1e1e1e;transform:scaleX(0.9260);transform-origin:0 0;-webkit-text-stroke:0.4px currentColor;">2,056,543</span>
<span style="left:802.76px;top:778.67px;font-size:11.3px;line-height:11.3px;color:#1e1e1e;transform:scaleX(0.9260);transform-origin:0 0;-webkit-text-stroke:0.4px currentColor;">0</span>
<span style="left:824.65px;top:778.67px;font-size:11.3px;line-height:11.3px;color:#1e1e1e;transform:scaleX(0.9260);transform-origin:0 0;-webkit-text-stroke:0.4px currentColor;">3,266,454</span>
<span style="left:902px;top:778.67px;font-size:11.3px;line-height:11.3px;color:#1e1e1e;transform:scaleX(0.9260);transform-origin:0 0;-webkit-text-stroke:0.4px currentColor;">53,688</span>
<span style="left:1053.56px;top:778.67px;font-size:11.3px;line-height:11.3px;color:#1e1e1e;transform:scaleX(0.9260);transform-origin:0 0;-webkit-text-stroke:0.4px currentColor;">0</span>
<span style="left:1090.2px;top:778.67px;font-size:11.3px;line-height:11.3px;color:#1e1e1e;transform:scaleX(0.9260);transform-origin:0 0;-webkit-text-stroke:0.4px currentColor;">43,312</span>
<span style="left:1178.96px;top:778.67px;font-size:11.3px;line-height:11.3px;color:#1e1e1e;transform:scaleX(0.9260);transform-origin:0 0;-webkit-text-stroke:0.4px currentColor;">0</span>
<span style="left:1205.46px;top:778.67px;font-size:11.3px;line-height:11.3px;color:#3a3a3a;transform:scaleX(0.9100);transform-origin:0 0;-webkit-text-stroke:0.4px currentColor;">(6,692)-7%</span>
<span style="left:1287.4px;top:778.67px;font-size:11.3px;line-height:11.3px;color:#1e1e1e;transform:scaleX(0.9260);transform-origin:0 0;-webkit-text-stroke:0.4px currentColor;">90,308</span>
<span style="left:988.63px;top:778.67px;font-size:11.3px;line-height:11.3px;color:#1e1e1e;transform:scaleX(0.8149);transform-origin:0 0;-webkit-text-stroke:0.4px currentColor;">%</span>
<span style="left:963.02px;top:778.67px;font-size:11.3px;line-height:11.3px;color:#1e1e1e;transform:scaleX(0.9260);transform-origin:0 0;-webkit-text-stroke:0.4px currentColor;">1.71</span>
<span style="left:1332.81px;top:778.67px;font-size:11.3px;line-height:11.3px;color:#1e1e1e;transform:scaleX(0.9260);transform-origin:0 0;-webkit-text-stroke:0.4px currentColor;">end of 31</span>
<span style="left:30.49px;top:792.95px;font-size:11.3px;line-height:11.3px;color:#1e1e1e;transform:scaleX(0.9260);transform-origin:0 0;-webkit-text-stroke:0.4px currentColor;">end of 32</span>
<span style="left:100.17px;top:792.95px;font-size:11.3px;line-height:11.3px;color:#1e1e1e;transform:scaleX(0.9260);transform-origin:0 0;-webkit-text-stroke:0.4px currentColor;">86</span>
<span style="left:143.84px;top:792.95px;font-size:11.3px;line-height:11.3px;color:#1e1e1e;transform:scaleX(0.9260);transform-origin:0 0;-webkit-text-stroke:0.4px currentColor;">576,109</span>
<span style="left:238.46px;top:792.95px;font-size:11.3px;line-height:11.3px;color:#1e1e1e;transform:scaleX(0.9260);transform-origin:0 0;-webkit-text-stroke:0.4px currentColor;">0</span>
<span style="left:269.19px;top:792.95px;font-size:11.3px;line-height:11.3px;color:#1e1e1e;transform:scaleX(0.9260);transform-origin:0 0;-webkit-text-stroke:0.4px currentColor;">373,068</span>
<span style="left:337.7px;top:792.95px;font-size:11.3px;line-height:11.3px;color:#1e1e1e;transform:scaleX(0.9260);transform-origin:0 0;-webkit-text-stroke:0.4px currentColor;">25,455</span>
<span style="left:394.59px;top:792.95px;font-size:11.3px;line-height:11.3px;color:#1e1e1e;transform:scaleX(0.9260);transform-origin:0 0;-webkit-text-stroke:0.4px currentColor;">282,548</span>
<span style="left:489.26px;top:792.95px;font-size:11.3px;line-height:11.3px;color:#1e1e1e;transform:scaleX(0.9260);transform-origin:0 0;-webkit-text-stroke:0.4px currentColor;">0</span>
<span style="left:551.96px;top:792.95px;font-size:11.3px;line-height:11.3px;color:#1e1e1e;transform:scaleX(0.9260);transform-origin:0 0;-webkit-text-stroke:0.4px currentColor;">0</span>
<span style="left:614.66px;top:792.95px;font-size:11.3px;line-height:11.3px;color:#1e1e1e;transform:scaleX(0.9260);transform-origin:0 0;-webkit-text-stroke:0.4px currentColor;">0</span>
<span style="left:651.09px;top:792.95px;font-size:11.3px;line-height:11.3px;color:#1e1e1e;transform:scaleX(0.9260);transform-origin:0 0;-webkit-text-stroke:0.4px currentColor;">28,694</span>
<span style="left:699.3px;top:792.95px;font-size:11.3px;line-height:11.3px;color:#1e1e1e;transform:scaleX(0.9260);transform-origin:0 0;-webkit-text-stroke:0.4px currentColor;">2,159,370</span>
<span style="left:802.76px;top:792.95px;font-size:11.3px;line-height:11.3px;color:#1e1e1e;transform:scaleX(0.9260);transform-origin:0 0;-webkit-text-stroke:0.4px currentColor;">0</span>
<span style="left:824.75px;top:792.95px;font-size:11.3px;line-height:11.3px;color:#1e1e1e;transform:scaleX(0.9260);transform-origin:0 0;-webkit-text-stroke:0.4px currentColor;">3,391,096</span>
<span style="left:902.05px;top:792.95px;font-size:11.3px;line-height:11.3px;color:#1e1e1e;transform:scaleX(0.9260);transform-origin:0 0;-webkit-text-stroke:0.4px currentColor;">54,149</span>
<span style="left:1053.56px;top:792.95px;font-size:11.3px;line-height:11.3px;color:#1e1e1e;transform:scaleX(0.9260);transform-origin:0 0;-webkit-text-stroke:0.4px currentColor;">0</span>
<span style="left:1090.1px;top:792.95px;font-size:11.3px;line-height:11.3px;color:#1e1e1e;transform:scaleX(0.9260);transform-origin:0 0;-webkit-text-stroke:0.4px currentColor;">44,438</span>
<span style="left:1178.96px;top:792.95px;font-size:11.3px;line-height:11.3px;color:#1e1e1e;transform:scaleX(0.9260);transform-origin:0 0;-webkit-text-stroke:0.4px currentColor;">0</span>
<span style="left:1205.46px;top:792.95px;font-size:11.3px;line-height:11.3px;color:#3a3a3a;transform:scaleX(0.9100);transform-origin:0 0;-webkit-text-stroke:0.4px currentColor;">(6,783)-7%</span>
<span style="left:1287.29px;top:792.95px;font-size:11.3px;line-height:11.3px;color:#1e1e1e;transform:scaleX(0.9260);transform-origin:0 0;-webkit-text-stroke:0.4px currentColor;">91,804</span>
<span style="left:988.63px;top:792.95px;font-size:11.3px;line-height:11.3px;color:#1e1e1e;transform:scaleX(0.8149);transform-origin:0 0;-webkit-text-stroke:0.4px currentColor;">%</span>
<span style="left:962.97px;top:792.95px;font-size:11.3px;line-height:11.3px;color:#1e1e1e;transform:scaleX(0.9260);transform-origin:0 0;-webkit-text-stroke:0.4px currentColor;">1.66</span>
<span style="left:1332.84px;top:792.95px;font-size:11.3px;line-height:11.3px;color:#1e1e1e;transform:scaleX(0.9260);transform-origin:0 0;-webkit-text-stroke:0.4px currentColor;">end of 32</span>
<span style="left:30.43px;top:807.22px;font-size:11.3px;line-height:11.3px;color:#1e1e1e;transform:scaleX(0.9260);transform-origin:0 0;-webkit-text-stroke:0.4px currentColor;">end of 33</span>
<span style="left:100.22px;top:807.22px;font-size:11.3px;line-height:11.3px;color:#1e1e1e;transform:scaleX(0.9260);transform-origin:0 0;-webkit-text-stroke:0.4px currentColor;">87</span>
<span style="left:143.79px;top:807.22px;font-size:11.3px;line-height:11.3px;color:#1e1e1e;transform:scaleX(0.9260);transform-origin:0 0;-webkit-text-stroke:0.4px currentColor;">604,915</span>
<span style="left:238.46px;top:807.22px;font-size:11.3px;line-height:11.3px;color:#1e1e1e;transform:scaleX(0.9260);transform-origin:0 0;-webkit-text-stroke:0.4px currentColor;">0</span>
<span style="left:269.19px;top:807.22px;font-size:11.3px;line-height:11.3px;color:#1e1e1e;transform:scaleX(0.9260);transform-origin:0 0;-webkit-text-stroke:0.4px currentColor;">358,353</span>
<span style="left:337.7px;top:807.22px;font-size:11.3px;line-height:11.3px;color:#1e1e1e;transform:scaleX(0.9260);transform-origin:0 0;-webkit-text-stroke:0.4px currentColor;">25,908</span>
<span style="left:394.59px;top:807.22px;font-size:11.3px;line-height:11.3px;color:#1e1e1e;transform:scaleX(0.9260);transform-origin:0 0;-webkit-text-stroke:0.4px currentColor;">291,025</span>
<span style="left:489.26px;top:807.22px;font-size:11.3px;line-height:11.3px;color:#1e1e1e;transform:scaleX(0.9260);transform-origin:0 0;-webkit-text-stroke:0.4px currentColor;">0</span>
<span style="left:551.96px;top:807.22px;font-size:11.3px;line-height:11.3px;color:#1e1e1e;transform:scaleX(0.9260);transform-origin:0 0;-webkit-text-stroke:0.4px currentColor;">0</span>
<span style="left:614.66px;top:807.22px;font-size:11.3px;line-height:11.3px;color:#1e1e1e;transform:scaleX(0.9260);transform-origin:0 0;-webkit-text-stroke:0.4px currentColor;">0</span>
<span style="left:651.09px;top:807.22px;font-size:11.3px;line-height:11.3px;color:#1e1e1e;transform:scaleX(0.9260);transform-origin:0 0;-webkit-text-stroke:0.4px currentColor;">28,694</span>
<span style="left:699.41px;top:807.22px;font-size:11.3px;line-height:11.3px;color:#1e1e1e;transform:scaleX(0.9260);transform-origin:0 0;-webkit-text-stroke:0.4px currentColor;">2,267,339</span>
<span style="left:802.76px;top:807.22px;font-size:11.3px;line-height:11.3px;color:#1e1e1e;transform:scaleX(0.9260);transform-origin:0 0;-webkit-text-stroke:0.4px currentColor;">0</span>
<span style="left:824.81px;top:807.22px;font-size:11.3px;line-height:11.3px;color:#1e1e1e;transform:scaleX(0.9260);transform-origin:0 0;-webkit-text-stroke:0.4px currentColor;">3,521,631</span>
<span style="left:902.05px;top:807.22px;font-size:11.3px;line-height:11.3px;color:#1e1e1e;transform:scaleX(0.9260);transform-origin:0 0;-webkit-text-stroke:0.4px currentColor;">54,601</span>
<span style="left:1053.56px;top:807.22px;font-size:11.3px;line-height:11.3px;color:#1e1e1e;transform:scaleX(0.9260);transform-origin:0 0;-webkit-text-stroke:0.4px currentColor;">0</span>
<span style="left:1089.99px;top:807.22px;font-size:11.3px;line-height:11.3px;color:#1e1e1e;transform:scaleX(0.9260);transform-origin:0 0;-webkit-text-stroke:0.4px currentColor;">45,594</span>
<span style="left:1178.96px;top:807.22px;font-size:11.3px;line-height:11.3px;color:#1e1e1e;transform:scaleX(0.9260);transform-origin:0 0;-webkit-text-stroke:0.4px currentColor;">0</span>
<span style="left:1205.46px;top:807.22px;font-size:11.3px;line-height:11.3px;color:#3a3a3a;transform:scaleX(0.9100);transform-origin:0 0;-webkit-text-stroke:0.4px currentColor;">(6,875)-7%</span>
<span style="left:1287.35px;top:807.22px;font-size:11.3px;line-height:11.3px;color:#1e1e1e;transform:scaleX(0.9260);transform-origin:0 0;-webkit-text-stroke:0.4px currentColor;">93,320</span>
<span style="left:988.63px;top:807.22px;font-size:11.3px;line-height:11.3px;color:#1e1e1e;transform:scaleX(0.8149);transform-origin:0 0;-webkit-text-stroke:0.4px currentColor;">%</span>
<span style="left:963.02px;top:807.22px;font-size:11.3px;line-height:11.3px;color:#1e1e1e;transform:scaleX(0.9260);transform-origin:0 0;-webkit-text-stroke:0.4px currentColor;">1.61</span>
<span style="left:1332.78px;top:807.22px;font-size:11.3px;line-height:11.3px;color:#1e1e1e;transform:scaleX(0.9260);transform-origin:0 0;-webkit-text-stroke:0.4px currentColor;">end of 33</span>
<span style="left:30.38px;top:821.5px;font-size:11.3px;line-height:11.3px;color:#1e1e1e;transform:scaleX(0.9260);transform-origin:0 0;-webkit-text-stroke:0.4px currentColor;">end of 34</span>
<span style="left:100.17px;top:821.5px;font-size:11.3px;line-height:11.3px;color:#1e1e1e;transform:scaleX(0.9260);transform-origin:0 0;-webkit-text-stroke:0.4px currentColor;">88</span>
<span style="left:143.74px;top:821.5px;font-size:11.3px;line-height:11.3px;color:#1e1e1e;transform:scaleX(0.9260);transform-origin:0 0;-webkit-text-stroke:0.4px currentColor;">635,160</span>
<span style="left:238.46px;top:821.5px;font-size:11.3px;line-height:11.3px;color:#1e1e1e;transform:scaleX(0.9260);transform-origin:0 0;-webkit-text-stroke:0.4px currentColor;">0</span>
<span style="left:269.19px;top:821.5px;font-size:11.3px;line-height:11.3px;color:#1e1e1e;transform:scaleX(0.9260);transform-origin:0 0;-webkit-text-stroke:0.4px currentColor;">342,946</span>
<span style="left:337.8px;top:821.5px;font-size:11.3px;line-height:11.3px;color:#1e1e1e;transform:scaleX(0.9260);transform-origin:0 0;-webkit-text-stroke:0.4px currentColor;">26,157</span>
<span style="left:394.59px;top:821.5px;font-size:11.3px;line-height:11.3px;color:#1e1e1e;transform:scaleX(0.9260);transform-origin:0 0;-webkit-text-stroke:0.4px currentColor;">299,755</span>
<span style="left:489.26px;top:821.5px;font-size:11.3px;line-height:11.3px;color:#1e1e1e;transform:scaleX(0.9260);transform-origin:0 0;-webkit-text-stroke:0.4px currentColor;">0</span>
<span style="left:551.96px;top:821.5px;font-size:11.3px;line-height:11.3px;color:#1e1e1e;transform:scaleX(0.9260);transform-origin:0 0;-webkit-text-stroke:0.4px currentColor;">0</span>
<span style="left:614.66px;top:821.5px;font-size:11.3px;line-height:11.3px;color:#1e1e1e;transform:scaleX(0.9260);transform-origin:0 0;-webkit-text-stroke:0.4px currentColor;">0</span>
<span style="left:651.09px;top:821.5px;font-size:11.3px;line-height:11.3px;color:#1e1e1e;transform:scaleX(0.9260);transform-origin:0 0;-webkit-text-stroke:0.4px currentColor;">28,694</span>
<span style="left:699.35px;top:821.5px;font-size:11.3px;line-height:11.3px;color:#1e1e1e;transform:scaleX(0.9260);transform-origin:0 0;-webkit-text-stroke:0.4px currentColor;">2,380,706</span>
<span style="left:802.76px;top:821.5px;font-size:11.3px;line-height:11.3px;color:#1e1e1e;transform:scaleX(0.9260);transform-origin:0 0;-webkit-text-stroke:0.4px currentColor;">0</span>
<span style="left:824.75px;top:821.5px;font-size:11.3px;line-height:11.3px;color:#1e1e1e;transform:scaleX(0.9260);transform-origin:0 0;-webkit-text-stroke:0.4px currentColor;">3,658,568</span>
<span style="left:902.05px;top:821.5px;font-size:11.3px;line-height:11.3px;color:#1e1e1e;transform:scaleX(0.9260);transform-origin:0 0;-webkit-text-stroke:0.4px currentColor;">54,851</span>
<span style="left:1053.56px;top:821.5px;font-size:11.3px;line-height:11.3px;color:#1e1e1e;transform:scaleX(0.9260);transform-origin:0 0;-webkit-text-stroke:0.4px currentColor;">0</span>
<span style="left:1090.15px;top:821.5px;font-size:11.3px;line-height:11.3px;color:#1e1e1e;transform:scaleX(0.9260);transform-origin:0 0;-webkit-text-stroke:0.4px currentColor;">46,779</span>
<span style="left:1178.96px;top:821.5px;font-size:11.3px;line-height:11.3px;color:#1e1e1e;transform:scaleX(0.9260);transform-origin:0 0;-webkit-text-stroke:0.4px currentColor;">0</span>
<span style="left:1205.46px;top:821.5px;font-size:11.3px;line-height:11.3px;color:#3a3a3a;transform:scaleX(0.9100);transform-origin:0 0;-webkit-text-stroke:0.4px currentColor;">(6,945)-7%</span>
<span style="left:1287.4px;top:821.5px;font-size:11.3px;line-height:11.3px;color:#1e1e1e;transform:scaleX(0.9260);transform-origin:0 0;-webkit-text-stroke:0.4px currentColor;">94,685</span>
<span style="left:988.63px;top:821.5px;font-size:11.3px;line-height:11.3px;color:#1e1e1e;transform:scaleX(0.8149);transform-origin:0 0;-webkit-text-stroke:0.4px currentColor;">%</span>
<span style="left:962.97px;top:821.5px;font-size:11.3px;line-height:11.3px;color:#1e1e1e;transform:scaleX(0.9260);transform-origin:0 0;-webkit-text-stroke:0.4px currentColor;">1.56</span>
<span style="left:1332.73px;top:821.5px;font-size:11.3px;line-height:11.3px;color:#1e1e1e;transform:scaleX(0.9260);transform-origin:0 0;-webkit-text-stroke:0.4px currentColor;">end of 34</span>
<span style="left:30.43px;top:835.78px;font-size:11.3px;line-height:11.3px;color:#1e1e1e;transform:scaleX(0.9260);transform-origin:0 0;-webkit-text-stroke:0.4px currentColor;">end of 35</span>
<span style="left:100.19px;top:835.78px;font-size:11.3px;line-height:11.3px;color:#1e1e1e;transform:scaleX(0.9260);transform-origin:0 0;-webkit-text-stroke:0.4px currentColor;">89</span>
<span style="left:143.79px;top:835.78px;font-size:11.3px;line-height:11.3px;color:#1e1e1e;transform:scaleX(0.9260);transform-origin:0 0;-webkit-text-stroke:0.4px currentColor;">666,918</span>
<span style="left:238.46px;top:835.78px;font-size:11.3px;line-height:11.3px;color:#1e1e1e;transform:scaleX(0.9260);transform-origin:0 0;-webkit-text-stroke:0.4px currentColor;">0</span>
<span style="left:269.14px;top:835.78px;font-size:11.3px;line-height:11.3px;color:#1e1e1e;transform:scaleX(0.9260);transform-origin:0 0;-webkit-text-stroke:0.4px currentColor;">326,650</span>
<span style="left:337.7px;top:835.78px;font-size:11.3px;line-height:11.3px;color:#1e1e1e;transform:scaleX(0.9260);transform-origin:0 0;-webkit-text-stroke:0.4px currentColor;">26,585</span>
<span style="left:394.59px;top:835.78px;font-size:11.3px;line-height:11.3px;color:#1e1e1e;transform:scaleX(0.9260);transform-origin:0 0;-webkit-text-stroke:0.4px currentColor;">308,748</span>
<span style="left:489.26px;top:835.78px;font-size:11.3px;line-height:11.3px;color:#1e1e1e;transform:scaleX(0.9260);transform-origin:0 0;-webkit-text-stroke:0.4px currentColor;">0</span>
<span style="left:551.96px;top:835.78px;font-size:11.3px;line-height:11.3px;color:#1e1e1e;transform:scaleX(0.9260);transform-origin:0 0;-webkit-text-stroke:0.4px currentColor;">0</span>
<span style="left:614.66px;top:835.78px;font-size:11.3px;line-height:11.3px;color:#1e1e1e;transform:scaleX(0.9260);transform-origin:0 0;-webkit-text-stroke:0.4px currentColor;">0</span>
<span style="left:651.09px;top:835.78px;font-size:11.3px;line-height:11.3px;color:#1e1e1e;transform:scaleX(0.9260);transform-origin:0 0;-webkit-text-stroke:0.4px currentColor;">28,694</span>
<span style="left:699.41px;top:835.78px;font-size:11.3px;line-height:11.3px;color:#1e1e1e;transform:scaleX(0.9260);transform-origin:0 0;-webkit-text-stroke:0.4px currentColor;">2,499,741</span>
<span style="left:802.76px;top:835.78px;font-size:11.3px;line-height:11.3px;color:#1e1e1e;transform:scaleX(0.9260);transform-origin:0 0;-webkit-text-stroke:0.4px currentColor;">0</span>
<span style="left:824.86px;top:835.78px;font-size:11.3px;line-height:11.3px;color:#1e1e1e;transform:scaleX(0.9260);transform-origin:0 0;-webkit-text-stroke:0.4px currentColor;">3,802,057</span>
<span style="left:902.05px;top:835.78px;font-size:11.3px;line-height:11.3px;color:#1e1e1e;transform:scaleX(0.9260);transform-origin:0 0;-webkit-text-stroke:0.4px currentColor;">55,279</span>
<span style="left:1053.56px;top:835.78px;font-size:11.3px;line-height:11.3px;color:#1e1e1e;transform:scaleX(0.9260);transform-origin:0 0;-webkit-text-stroke:0.4px currentColor;">0</span>
<span style="left:1090.1px;top:835.78px;font-size:11.3px;line-height:11.3px;color:#1e1e1e;transform:scaleX(0.9260);transform-origin:0 0;-webkit-text-stroke:0.4px currentColor;">47,995</span>
<span style="left:1178.96px;top:835.78px;font-size:11.3px;line-height:11.3px;color:#1e1e1e;transform:scaleX(0.9260);transform-origin:0 0;-webkit-text-stroke:0.4px currentColor;">0</span>
<span style="left:1205.46px;top:835.78px;font-size:11.3px;line-height:11.3px;color:#3a3a3a;transform:scaleX(0.9100);transform-origin:0 0;-webkit-text-stroke:0.4px currentColor;">(7,037)-7%</span>
<span style="left:1287.5px;top:835.78px;font-size:11.3px;line-height:11.3px;color:#1e1e1e;transform:scaleX(0.9260);transform-origin:0 0;-webkit-text-stroke:0.4px currentColor;">96,237</span>
<span style="left:988.63px;top:835.78px;font-size:11.3px;line-height:11.3px;color:#1e1e1e;transform:scaleX(0.8149);transform-origin:0 0;-webkit-text-stroke:0.4px currentColor;">%</span>
<span style="left:963.02px;top:835.78px;font-size:11.3px;line-height:11.3px;color:#1e1e1e;transform:scaleX(0.9260);transform-origin:0 0;-webkit-text-stroke:0.4px currentColor;">1.51</span>
<span style="left:1332.78px;top:835.78px;font-size:11.3px;line-height:11.3px;color:#1e1e1e;transform:scaleX(0.9260);transform-origin:0 0;-webkit-text-stroke:0.4px currentColor;">end of 35</span>
<span style="left:30.43px;top:850.06px;font-size:11.3px;line-height:11.3px;color:#1e1e1e;transform:scaleX(0.9260);transform-origin:0 0;-webkit-text-stroke:0.4px currentColor;">end of 36</span>
<span style="left:100.14px;top:850.06px;font-size:11.3px;line-height:11.3px;color:#1e1e1e;transform:scaleX(0.9260);transform-origin:0 0;-webkit-text-stroke:0.4px currentColor;">90</span>
<span style="left:143.69px;top:850.06px;font-size:11.3px;line-height:11.3px;color:#1e1e1e;transform:scaleX(0.9260);transform-origin:0 0;-webkit-text-stroke:0.4px currentColor;">700,264</span>
<span style="left:238.46px;top:850.06px;font-size:11.3px;line-height:11.3px;color:#1e1e1e;transform:scaleX(0.9260);transform-origin:0 0;-webkit-text-stroke:0.4px currentColor;">0</span>
<span style="left:269.19px;top:850.06px;font-size:11.3px;line-height:11.3px;color:#1e1e1e;transform:scaleX(0.9260);transform-origin:0 0;-webkit-text-stroke:0.4px currentColor;">309,675</span>
<span style="left:337.7px;top:850.06px;font-size:11.3px;line-height:11.3px;color:#1e1e1e;transform:scaleX(0.9260);transform-origin:0 0;-webkit-text-stroke:0.4px currentColor;">26,775</span>
<span style="left:394.54px;top:850.06px;font-size:11.3px;line-height:11.3px;color:#1e1e1e;transform:scaleX(0.9260);transform-origin:0 0;-webkit-text-stroke:0.4px currentColor;">318,010</span>
<span style="left:489.26px;top:850.06px;font-size:11.3px;line-height:11.3px;color:#1e1e1e;transform:scaleX(0.9260);transform-origin:0 0;-webkit-text-stroke:0.4px currentColor;">0</span>
<span style="left:551.96px;top:850.06px;font-size:11.3px;line-height:11.3px;color:#1e1e1e;transform:scaleX(0.9260);transform-origin:0 0;-webkit-text-stroke:0.4px currentColor;">0</span>
<span style="left:614.66px;top:850.06px;font-size:11.3px;line-height:11.3px;color:#1e1e1e;transform:scaleX(0.9260);transform-origin:0 0;-webkit-text-stroke:0.4px currentColor;">0</span>
<span style="left:651.09px;top:850.06px;font-size:11.3px;line-height:11.3px;color:#1e1e1e;transform:scaleX(0.9260);transform-origin:0 0;-webkit-text-stroke:0.4px currentColor;">28,694</span>
<span style="left:699.35px;top:850.06px;font-size:11.3px;line-height:11.3px;color:#1e1e1e;transform:scaleX(0.9260);transform-origin:0 0;-webkit-text-stroke:0.4px currentColor;">2,624,728</span>
<span style="left:802.76px;top:850.06px;font-size:11.3px;line-height:11.3px;color:#1e1e1e;transform:scaleX(0.9260);transform-origin:0 0;-webkit-text-stroke:0.4px currentColor;">0</span>
<span style="left:824.86px;top:850.06px;font-size:11.3px;line-height:11.3px;color:#1e1e1e;transform:scaleX(0.9260);transform-origin:0 0;-webkit-text-stroke:0.4px currentColor;">3,952,677</span>
<span style="left:902px;top:850.06px;font-size:11.3px;line-height:11.3px;color:#1e1e1e;transform:scaleX(0.9260);transform-origin:0 0;-webkit-text-stroke:0.4px currentColor;">55,468</span>
<span style="left:1053.56px;top:850.06px;font-size:11.3px;line-height:11.3px;color:#1e1e1e;transform:scaleX(0.9260);transform-origin:0 0;-webkit-text-stroke:0.4px currentColor;">0</span>
<span style="left:1090.1px;top:850.06px;font-size:11.3px;line-height:11.3px;color:#1e1e1e;transform:scaleX(0.9260);transform-origin:0 0;-webkit-text-stroke:0.4px currentColor;">49,243</span>
<span style="left:1178.96px;top:850.06px;font-size:11.3px;line-height:11.3px;color:#1e1e1e;transform:scaleX(0.9260);transform-origin:0 0;-webkit-text-stroke:0.4px currentColor;">0</span>
<span style="left:1205.46px;top:850.06px;font-size:11.3px;line-height:11.3px;color:#3a3a3a;transform:scaleX(0.9100);transform-origin:0 0;-webkit-text-stroke:0.4px currentColor;">(7,103)-7%</span>
<span style="left:1287.4px;top:850.06px;font-size:11.3px;line-height:11.3px;color:#1e1e1e;transform:scaleX(0.9260);transform-origin:0 0;-webkit-text-stroke:0.4px currentColor;">97,608</span>
<span style="left:988.63px;top:850.06px;font-size:11.3px;line-height:11.3px;color:#1e1e1e;transform:scaleX(0.8149);transform-origin:0 0;-webkit-text-stroke:0.4px currentColor;">%</span>
<span style="left:962.97px;top:850.06px;font-size:11.3px;line-height:11.3px;color:#1e1e1e;transform:scaleX(0.9260);transform-origin:0 0;-webkit-text-stroke:0.4px currentColor;">1.46</span>
<span style="left:1332.78px;top:850.06px;font-size:11.3px;line-height:11.3px;color:#1e1e1e;transform:scaleX(0.9260);transform-origin:0 0;-webkit-text-stroke:0.4px currentColor;">end of 36</span>
<span style="left:205.6px;top:865.03px;font-size:11.3px;line-height:11.3px;color:#1e1e1e;transform:scaleX(0.9260);transform-origin:0 0;-webkit-text-stroke:0.4px currentColor;">(96,000)</span>
<span style="left:331.79px;top:865.03px;font-size:11.3px;line-height:11.3px;color:#1e1e1e;transform:scaleX(0.9260);transform-origin:0 0;-webkit-text-stroke:0.4px currentColor;">293,434</span>
<span style="left:456.4px;top:865.03px;font-size:11.3px;line-height:11.3px;color:#1e1e1e;transform:scaleX(0.9260);transform-origin:0 0;-webkit-text-stroke:0.4px currentColor;">(72,000)</span>
<span style="left:645.39px;top:865.03px;font-size:11.3px;line-height:11.3px;color:#1e1e1e;transform:scaleX(0.9260);transform-origin:0 0;-webkit-text-stroke:0.4px currentColor;">717,345</span>
<span style="left:769.9px;top:865.03px;font-size:11.3px;line-height:11.3px;color:#1e1e1e;transform:scaleX(0.9260);transform-origin:0 0;-webkit-text-stroke:0.4px currentColor;">(72,000)</span>
<span style="left:896.24px;top:865.03px;font-size:11.3px;line-height:11.3px;color:#1e1e1e;transform:scaleX(0.9260);transform-origin:0 0;-webkit-text-stroke:0.4px currentColor;">770,779</span>
<span style="left:1012.8px;top:865.03px;font-size:11.3px;line-height:11.3px;color:#1e1e1e;transform:scaleX(0.9260);transform-origin:0 0;-webkit-text-stroke:0.4px currentColor;">1,387,380</span>
<span style="left:1084.4px;top:865.03px;font-size:11.3px;line-height:11.3px;color:#1e1e1e;transform:scaleX(0.9260);transform-origin:0 0;-webkit-text-stroke:0.4px currentColor;">893,707</span>
<span style="left:1152.85px;top:865.03px;font-size:11.3px;line-height:11.3px;color:#1e1e1e;transform:scaleX(0.9260);transform-origin:0 0;-webkit-text-stroke:0.4px currentColor;">41,621</span>
<span style="left:1212.61px;top:865.03px;font-size:11.3px;line-height:11.3px;color:#333;transform:scaleX(0.9100);transform-origin:0 0;-webkit-text-stroke:0.4px currentColor;">(303,295)</span>
<span style="left:1272.96px;top:865.03px;font-size:11.3px;line-height:11.3px;color:#1e1e1e;transform:scaleX(0.9260);transform-origin:0 0;-webkit-text-stroke:0.4px currentColor;">2,790,192</span>
<div style="left:1188.8px;top:259.8px;width:76px;height:607px;box-sizing:border-box;border:6px solid #e05a2d;filter:drop-shadow(0.5px 0.5px 0.6px rgba(0,0,0,0.35))"></div>
<svg style="left:1210px;top:60px;width:34px;height:205px;filter:drop-shadow(0.5px 0.5px 0.6px rgba(0,0,0,0.35))" viewBox="1210 60 34 205"><path d="M1226.8 71.3 L1226.8 240" stroke="#e05a2d" stroke-width="6.2" stroke-linecap="round"/><path d="M1218 238 L1235.6 238 L1226.8 255.8 Z" fill="#e05a2d"/></svg>
</body></html>
